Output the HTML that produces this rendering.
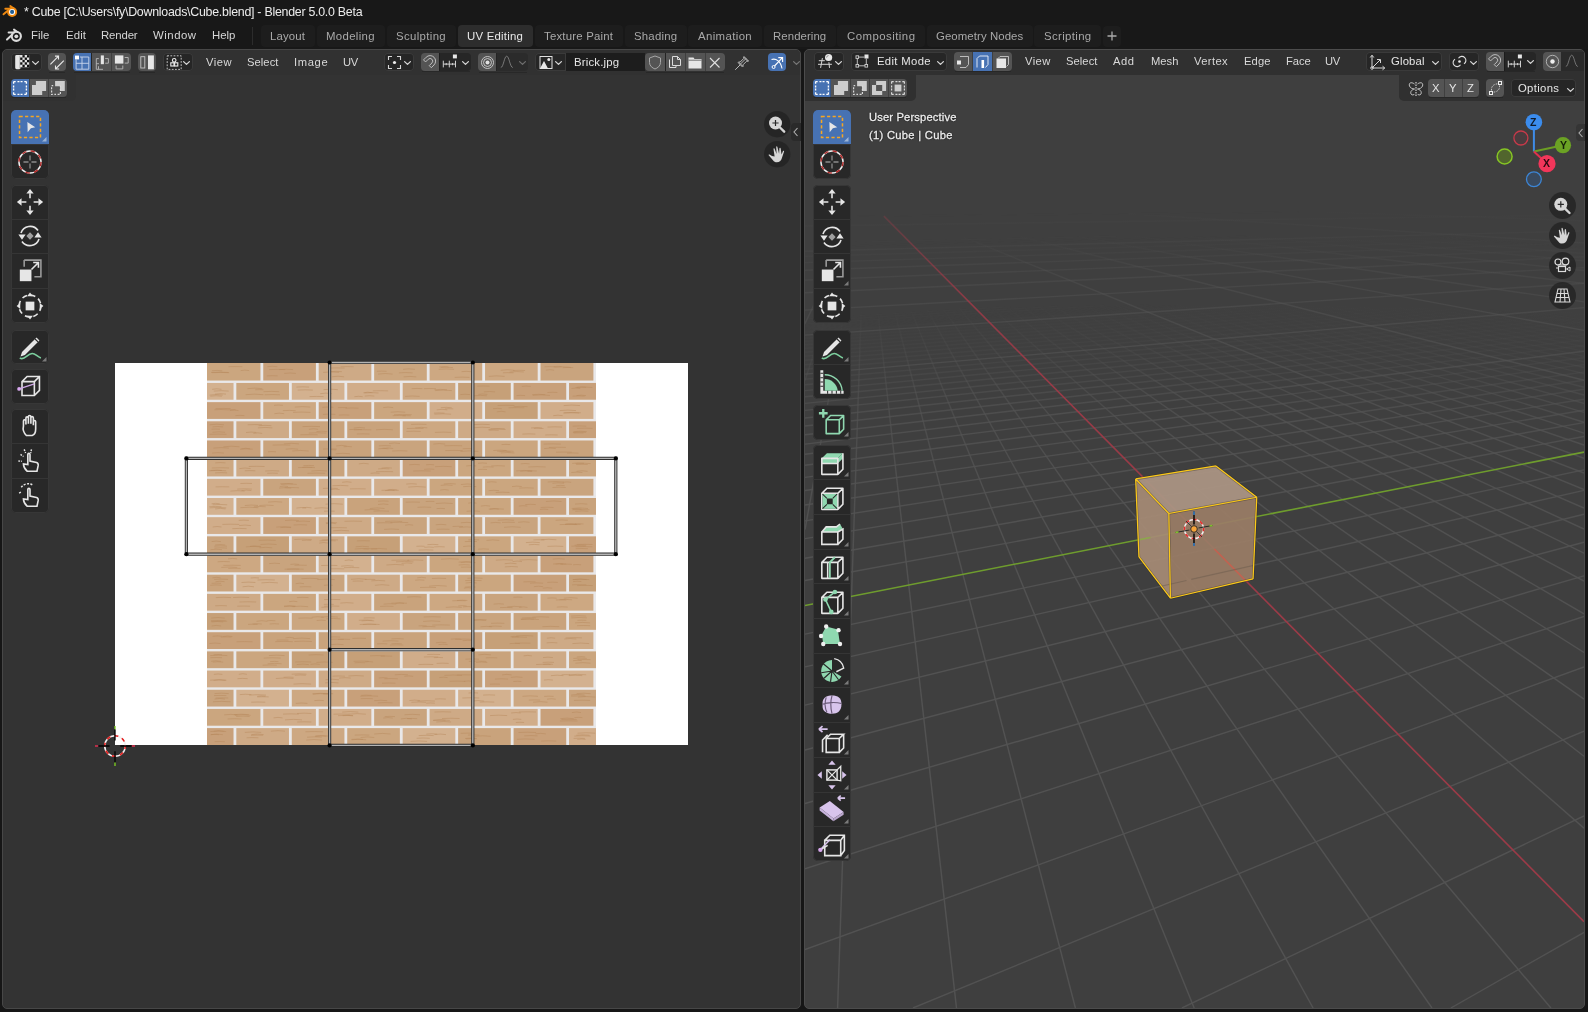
<!DOCTYPE html><html><head><meta charset="utf-8"><style>
html,body{margin:0;padding:0;}
body{width:1588px;height:1012px;overflow:hidden;background:#161616;position:relative;font-family:"Liberation Sans",sans-serif;}
.a{position:absolute;}
.t{position:absolute;white-space:nowrap;line-height:1;will-change:transform;}
svg.a{overflow:visible;}
</style></head><body>
<div class="a" style="left:0px;top:0px;width:1588px;height:49px;background:#181818;"></div><svg class="a" style="left:0px;top:0px;" width="24" height="22" viewBox="0 0 24 22">
      <g stroke="#f08a11" stroke-width="1.9" stroke-linecap="round">
      <path d="M10.3 6 L13.2 8"/><path d="M5.3 8.7 L10.6 8.7"/><path d="M3.5 14.3 L8.6 10"/></g>
      <circle cx="12.1" cy="12" r="5" fill="#f08a11"/>
      <circle cx="12.1" cy="12" r="3.05" fill="#ffffff"/>
      <circle cx="12.1" cy="11.9" r="2.05" fill="#245f94"/>
    </svg><div class="t" style="left:23.80px;top:5.80px;font-size:12.40px;color:#ececec;letter-spacing:-0.265px;">* Cube [C:\Users\fy\Downloads\Cube.blend] - Blender 5.0.0 Beta</div><svg class="a" style="left:0px;top:24px;" width="26" height="22" viewBox="0 0 26 22">
      <g stroke="#dcdcdc" stroke-width="2" stroke-linecap="round">
      <path d="M14 5.6 L17.4 8"/><path d="M8.6 8.6 L14.2 8.6"/><path d="M7 15.6 L12.4 10.6"/></g>
      <circle cx="16.3" cy="12.3" r="4.6" fill="none" stroke="#dcdcdc" stroke-width="2.1"/>
      <circle cx="16.3" cy="12.3" r="1.9" fill="#dcdcdc"/>
    </svg><div class="t" style="left:31.40px;top:30.35px;font-size:11.40px;color:#d6d6d6;letter-spacing:0.033px;">File</div><div class="t" style="left:65.50px;top:30.35px;font-size:11.40px;color:#d6d6d6;letter-spacing:0.114px;">Edit</div><div class="t" style="left:101.30px;top:30.35px;font-size:11.40px;color:#d6d6d6;letter-spacing:-0.148px;">Render</div><div class="t" style="left:153.10px;top:30.35px;font-size:11.40px;color:#d6d6d6;letter-spacing:0.509px;">Window</div><div class="t" style="left:212.10px;top:30.35px;font-size:11.40px;color:#d6d6d6;letter-spacing:-0.011px;">Help</div><div class="a" style="left:252px;top:27px;width:1px;height:18px;background:#2c2c2c;"></div><div class="a" style="left:260.6px;top:25.3px;width:54.6px;height:21.9px;background:#1d1d1d;border-radius:4px;"></div><div class="t" style="left:270.30px;top:30.75px;font-size:11.40px;color:#a9a9a9;letter-spacing:0.163px;">Layout</div><div class="a" style="left:316.7px;top:25.3px;width:68.3px;height:21.9px;background:#1d1d1d;border-radius:4px;"></div><div class="t" style="left:326.40px;top:30.75px;font-size:11.40px;color:#a9a9a9;letter-spacing:0.330px;">Modeling</div><div class="a" style="left:386.6px;top:25.3px;width:69.5px;height:21.9px;background:#1d1d1d;border-radius:4px;"></div><div class="t" style="left:396.30px;top:30.75px;font-size:11.40px;color:#a9a9a9;letter-spacing:0.356px;">Sculpting</div><div class="a" style="left:457.6px;top:25.3px;width:75.5px;height:21.9px;background:#2d2d2d;border-radius:4px;"></div><div class="t" style="left:467.30px;top:30.75px;font-size:11.40px;color:#e8e8e8;letter-spacing:0.224px;">UV Editing</div><div class="a" style="left:534.6px;top:25.3px;width:88.7px;height:21.9px;background:#1d1d1d;border-radius:4px;"></div><div class="t" style="left:544.30px;top:30.75px;font-size:11.40px;color:#a9a9a9;letter-spacing:0.213px;">Texture Paint</div><div class="a" style="left:624.6px;top:25.3px;width:62.7px;height:21.9px;background:#1d1d1d;border-radius:4px;"></div><div class="t" style="left:634.30px;top:30.75px;font-size:11.40px;color:#a9a9a9;letter-spacing:0.209px;">Shading</div><div class="a" style="left:688.3px;top:25.3px;width:73.5px;height:21.9px;background:#1d1d1d;border-radius:4px;"></div><div class="t" style="left:698.00px;top:30.75px;font-size:11.40px;color:#a9a9a9;letter-spacing:0.379px;">Animation</div><div class="a" style="left:763.6px;top:25.3px;width:72.7px;height:21.9px;background:#1d1d1d;border-radius:4px;"></div><div class="t" style="left:773.30px;top:30.75px;font-size:11.40px;color:#a9a9a9;letter-spacing:0.078px;">Rendering</div><div class="a" style="left:837.3px;top:25.3px;width:87.9px;height:21.9px;background:#1d1d1d;border-radius:4px;"></div><div class="t" style="left:847.00px;top:30.75px;font-size:11.40px;color:#a9a9a9;letter-spacing:0.467px;">Compositing</div><div class="a" style="left:926.5px;top:25.3px;width:106.8px;height:21.9px;background:#1d1d1d;border-radius:4px;"></div><div class="t" style="left:936.20px;top:30.75px;font-size:11.40px;color:#a9a9a9;letter-spacing:0.088px;">Geometry Nodes</div><div class="a" style="left:1034.3px;top:25.3px;width:67px;height:21.9px;background:#1d1d1d;border-radius:4px;"></div><div class="t" style="left:1044.00px;top:30.75px;font-size:11.40px;color:#a9a9a9;letter-spacing:0.361px;">Scripting</div><div class="a" style="left:1103px;top:25.5px;width:18px;height:21px;background:#1d1d1d;border-radius:4px;"></div><svg class="a" style="left:1106px;top:30px;" width="12" height="12" viewBox="0 0 12 12"><path d="M6 1.5V10.5M1.5 6H10.5" stroke="#a9a9a9" stroke-width="1.3"/></svg>
<div class="a" style="left:2px;top:49px;width:799px;height:960px;background:#333333;border-radius:5px;box-sizing:border-box;border:1px solid #474747;"></div><div class="a" style="left:3px;top:50px;width:797px;height:25px;background:#313131;border-radius:4px 4px 0 0;"></div><div class="a" style="left:3px;top:75px;width:73px;height:25.5px;background:#313131;border-radius:0 0 5px 0;"></div><div class="a" style="left:11px;top:52.8px;width:30.5px;height:18.7px;background:#262626;border-radius:4px;box-shadow:0 0 0 1px #3a3a3a inset;"></div><svg class="a" style="left:0;top:0" width="60" height="80"><path d="M15.2 56.3 Q15.2 55 16.6 55 H29.2 V67.2 H20.4 V68.2 Q20.4 69.2 19 69.2 H16.6 Q15.2 69.2 15.2 67.8Z" fill="#e6e6e6"/><path d="M19.8 55.6 V68.6" stroke="#9a9a9a" stroke-width="0.6"/><rect x="22.45" y="55.10" width="2.25" height="2.4" fill="#111"/><rect x="26.95" y="55.10" width="2.25" height="2.4" fill="#111"/><rect x="20.20" y="57.50" width="2.25" height="2.4" fill="#111"/><rect x="24.70" y="57.50" width="2.25" height="2.4" fill="#111"/><rect x="22.45" y="59.90" width="2.25" height="2.4" fill="#111"/><rect x="26.95" y="59.90" width="2.25" height="2.4" fill="#111"/><rect x="20.20" y="62.30" width="2.25" height="2.4" fill="#111"/><rect x="24.70" y="62.30" width="2.25" height="2.4" fill="#111"/><rect x="22.45" y="64.70" width="2.25" height="2.4" fill="#111"/><rect x="26.95" y="64.70" width="2.25" height="2.4" fill="#111"/></svg><svg class="a" style="left:31.8px;top:60.8px;" width="7" height="4" viewBox="0 0 7 4"><path d="M0.6 0.6 L3.5 3.4 L6.4 0.6" fill="none" stroke="#d6d6d6" stroke-width="1.3" stroke-linecap="round" stroke-linejoin="round"/></svg><div class="a" style="left:48px;top:52.8px;width:18px;height:18.7px;background:#545454;border-radius:4px 4px 4px 4px;"></div><div class="a" style="left:49px;top:71.5px;width:16px;height:1px;background:rgba(0,0,0,0.18);"></div><svg class="a" style="left:50px;top:54.5px;" width="15" height="15" viewBox="0 0 15 15"><path d="M0.4 9.4 L8.5 1.1 M5 1.1H8.5V4.6 M13.8 5.7 L5.5 14 M5.5 10.4V14H9.1" fill="none" stroke="#e8e8e8" stroke-width="1.1"/></svg><div class="a" style="left:73.2px;top:52.8px;width:18.3px;height:18.7px;background:#4772b3;border-radius:4px 0px 0px 4px;"></div><div class="a" style="left:91.5px;top:52.8px;width:19.8px;height:18.7px;background:#545454;border-radius:0px 0px 0px 0px;"></div><div class="a" style="left:91px;top:52.8px;width:1px;height:18.7px;background:rgba(0,0,0,0.25);"></div><div class="a" style="left:111.3px;top:52.8px;width:19.9px;height:18.7px;background:#545454;border-radius:0px 4px 4px 0px;"></div><div class="a" style="left:110.8px;top:52.8px;width:1px;height:18.7px;background:rgba(0,0,0,0.25);"></div><div class="a" style="left:74.2px;top:71.5px;width:56px;height:1px;background:rgba(0,0,0,0.18);"></div><svg class="a" style="left:75px;top:54.5px;" width="15" height="15" viewBox="0 0 15 15"><rect x="0" y="0.6" width="4" height="3.8" fill="#fff"/><path d="M1.1 4.4V14.2H13.8V2H5 M1.1 8.3H13.8 M7 2V14.2" fill="none" stroke="#c9d6ec" stroke-width="0.9"/></svg><svg class="a" style="left:93px;top:54.5px;" width="17" height="15" viewBox="0 0 17 15"><path d="M5.8 3.6H3.3V14.3H10 M3.3 8.7H6 M12.2 3.6H15.4V8.2H12.2 M5.5 11.2V14.3" fill="none" stroke="#b8b8b8" stroke-width="0.9"/><rect x="7.8" y="0.4" width="3.1" height="8.8" fill="#e6e6e6"/></svg><svg class="a" style="left:113px;top:54.5px;" width="17" height="15" viewBox="0 0 17 15"><rect x="1.9" y="0.4" width="8.5" height="8.2" fill="#e6e6e6"/><path d="M11.7 2.5H15.2V8.1H11.7 M3.1 10.5V13.9H9.8V10.5" fill="none" stroke="#b8b8b8" stroke-width="0.9"/></svg><div class="a" style="left:138px;top:52.8px;width:18.2px;height:18.7px;background:#545454;border-radius:4px 4px 4px 4px;"></div><div class="a" style="left:139px;top:71.5px;width:16.2px;height:1px;background:rgba(0,0,0,0.18);"></div><svg class="a" style="left:139px;top:54.5px;" width="17" height="15" viewBox="0 0 17 15"><rect x="1.8" y="1.7" width="4" height="11.3" fill="none" stroke="#c8c8c8" stroke-width="0.9"/><rect x="9" y="0.4" width="5.9" height="13.9" fill="#e6e6e6"/></svg><div class="a" style="left:162.5px;top:52.8px;width:30.8px;height:18.7px;background:#262626;border-radius:4px;box-shadow:0 0 0 1px #3a3a3a inset;"></div><svg class="a" style="left:166px;top:54.5px;" width="16" height="15" viewBox="0 0 16 15"><rect x="1.2" y="0.8" width="14" height="13.6" fill="none" stroke="#d0d0d0" stroke-width="0.9" stroke-dasharray="1.8 1.4"/><g fill="none" stroke="#eee" stroke-width="1.1"><circle cx="8.2" cy="5.3" r="1.8"/><rect x="4.8" y="7.8" width="3.2" height="3.2"/><rect x="8.6" y="7.8" width="3.2" height="3.2"/></g></svg><svg class="a" style="left:182.8px;top:60.8px;" width="7" height="4" viewBox="0 0 7 4"><path d="M0.6 0.6 L3.5 3.4 L6.4 0.6" fill="none" stroke="#d6d6d6" stroke-width="1.3" stroke-linecap="round" stroke-linejoin="round"/></svg><div class="t" style="left:205.90px;top:56.52px;font-size:11.20px;color:#d9d9d9;letter-spacing:0.507px;">View</div><div class="t" style="left:247.20px;top:56.52px;font-size:11.20px;color:#d9d9d9;letter-spacing:0.062px;">Select</div><div class="t" style="left:294.00px;top:56.52px;font-size:11.20px;color:#d9d9d9;letter-spacing:0.655px;">Image</div><div class="t" style="left:343.30px;top:56.52px;font-size:11.20px;color:#d9d9d9;letter-spacing:-0.230px;">UV</div><div class="a" style="left:384.2px;top:52.8px;width:30.1px;height:18.7px;background:#262626;border-radius:4px;box-shadow:0 0 0 1px #3a3a3a inset;"></div><svg class="a" style="left:387px;top:55px;" width="15" height="15" viewBox="0 0 15 15"><path d="M1.5 5V1.5H5 M10 1.5H13.5V5 M13.5 10V13.5H10 M5 13.5H1.5V10" fill="none" stroke="#d6d6d6" stroke-width="1.1"/><circle cx="7.5" cy="7.5" r="1.6" fill="#eee"/></svg><svg class="a" style="left:403.5px;top:60.8px;" width="7" height="4" viewBox="0 0 7 4"><path d="M0.6 0.6 L3.5 3.4 L6.4 0.6" fill="none" stroke="#d6d6d6" stroke-width="1.3" stroke-linecap="round" stroke-linejoin="round"/></svg><div class="a" style="left:421px;top:52.8px;width:18px;height:18.6px;background:#545454;border-radius:4px 0px 0px 4px;"></div><div class="a" style="left:439px;top:52.8px;width:32px;height:18.6px;background:#262626;border-radius:0px 4px 4px 0px;"></div><div class="a" style="left:438.5px;top:52.8px;width:1px;height:18.6px;background:rgba(0,0,0,0.25);"></div><div class="a" style="left:422px;top:71.4px;width:48px;height:1px;background:rgba(0,0,0,0.18);"></div><svg class="a" style="left:422.2px;top:54.2px;" width="15" height="15" viewBox="0 0 15 15"><path d="M9.30 13.68 L11.99 10.99 A5.5 5.5 0 0 0 4.21 3.21 L1.52 5.90 L3.57 7.95 L6.26 5.26 A2.6 2.6 0 0 1 9.94 8.94 L7.25 11.63 Z" fill="none" stroke="#c4c4c4" stroke-width="0.95" stroke-linejoin="miter"/></svg><svg class="a" style="left:443px;top:54.4px;" width="15" height="15" viewBox="0 0 15 15"><rect x="9.9" y="0.5" width="4" height="3.9" fill="#e8e8e8"/><path d="M0.3 6.7V13.4 M6.3 6.7V13.4 M12.5 6.7V13.4 M0.3 10.1H12.5 M3.2 9V11.2 M9.6 9V11.2" fill="none" stroke="#d0d0d0" stroke-width="1"/></svg><svg class="a" style="left:461.5px;top:60.9px;" width="7" height="4" viewBox="0 0 7 4"><path d="M0.6 0.6 L3.5 3.4 L6.4 0.6" fill="none" stroke="#d6d6d6" stroke-width="1.3" stroke-linecap="round" stroke-linejoin="round"/></svg><div class="a" style="left:477.8px;top:52.8px;width:18.7px;height:18.7px;background:#545454;border-radius:4px 0px 0px 4px;"></div><div class="a" style="left:496.5px;top:52.8px;width:31.6px;height:18.7px;background:#2b2b2b;border-radius:0px 4px 4px 0px;"></div><div class="a" style="left:496px;top:52.8px;width:1px;height:18.7px;background:rgba(0,0,0,0.25);"></div><div class="a" style="left:478.8px;top:71.5px;width:48.3px;height:1px;background:rgba(0,0,0,0.18);"></div><svg class="a" style="left:479.5px;top:54.5px;" width="15" height="15" viewBox="0 0 15 15"><circle cx="7.5" cy="7.5" r="6" fill="none" stroke="#d0d0d0" stroke-width="0.9"/><circle cx="7.5" cy="7.5" r="4" fill="none" stroke="#d0d0d0" stroke-width="0.9"/><circle cx="7.5" cy="7.5" r="2" fill="#e0e0e0"/></svg><svg class="a" style="left:500px;top:55px;" width="14" height="14" viewBox="0 0 14 14"><path d="M0.8 12.5 C3.5 12.5 4.2 1.2 6.7 1.2 C9.2 1.2 10 12.5 12.8 12.5" fill="none" stroke="#808080" stroke-width="0.9"/></svg><svg class="a" style="left:518.5px;top:61px;" width="7" height="4" viewBox="0 0 7 4"><path d="M0.6 0.6 L3.5 3.4 L6.4 0.6" fill="none" stroke="#6e6e6e" stroke-width="1.3" stroke-linecap="round" stroke-linejoin="round"/></svg><div class="a" style="left:535px;top:52.8px;width:31px;height:18.7px;background:#262626;border-radius:4px 0 0 4px;box-shadow:0 0 0 1px #3a3a3a inset;"></div><svg class="a" style="left:538.5px;top:54.5px;" width="14" height="15" viewBox="0 0 14 15"><rect x="1" y="1.5" width="12" height="12" fill="none" stroke="#e0e0e0" stroke-width="1"/><path d="M1 13.5 L5 6 L9 13.5Z" fill="#e8e8e8"/><circle cx="9.8" cy="4.5" r="1.5" fill="#e8e8e8"/></svg><svg class="a" style="left:555px;top:61px;" width="7" height="4" viewBox="0 0 7 4"><path d="M0.6 0.6 L3.5 3.4 L6.4 0.6" fill="none" stroke="#d6d6d6" stroke-width="1.3" stroke-linecap="round" stroke-linejoin="round"/></svg><div class="a" style="left:566px;top:52.8px;width:79.2px;height:18.7px;background:#1d1d1d;"></div><div class="t" style="left:573.50px;top:56.55px;font-size:11.40px;color:#e6e6e6;letter-spacing:0.176px;">Brick.jpg</div><div class="a" style="left:645.2px;top:52.8px;width:20.3px;height:18.7px;background:#545454;border-radius:4px 0px 0px 4px;"></div><div class="a" style="left:665.5px;top:52.8px;width:19.5px;height:18.7px;background:#545454;border-radius:0px 0px 0px 0px;"></div><div class="a" style="left:665px;top:52.8px;width:1px;height:18.7px;background:rgba(0,0,0,0.25);"></div><div class="a" style="left:685px;top:52.8px;width:20.3px;height:18.7px;background:#545454;border-radius:0px 0px 0px 0px;"></div><div class="a" style="left:684.5px;top:52.8px;width:1px;height:18.7px;background:rgba(0,0,0,0.25);"></div><div class="a" style="left:705.3px;top:52.8px;width:19.7px;height:18.7px;background:#545454;border-radius:0px 4px 4px 0px;"></div><div class="a" style="left:704.8px;top:52.8px;width:1px;height:18.7px;background:rgba(0,0,0,0.25);"></div><div class="a" style="left:646.2px;top:71.5px;width:77.8px;height:1px;background:rgba(0,0,0,0.18);"></div><svg class="a" style="left:648px;top:55px;" width="14" height="15" viewBox="0 0 14 15"><path d="M7 1 L12.5 3 V7.5 C12.5 11 9.5 13 7 14 C4.5 13 1.5 11 1.5 7.5 V3 Z" fill="none" stroke="#a8a8a8" stroke-width="1"/></svg><svg class="a" style="left:668px;top:55px;" width="14" height="14" viewBox="0 0 14 14"><path d="M1.5 4.5V12.5H8V10.5 M4.5 1.5H9.5L12.5 4.5V10.5H4.5Z M9.5 1.5V4.5H12.5" fill="none" stroke="#dcdcdc" stroke-width="1"/></svg><svg class="a" style="left:688px;top:55.5px;" width="14" height="13" viewBox="0 0 14 13"><path d="M0.5 1.5H5.5L6.5 3H13.5V12.5H0.5Z" fill="#e6e6e6"/><path d="M0.5 4.2H13.5" stroke="#545454" stroke-width="0.8"/></svg><svg class="a" style="left:709px;top:56.5px;" width="12" height="12" viewBox="0 0 12 12"><path d="M1 1L10.5 10.5M10.5 1L1 10.5" stroke="#e0e0e0" stroke-width="1.1"/></svg><svg class="a" style="left:733.5px;top:54.5px;" width="16" height="16" viewBox="0 0 16 16"><path d="M1.2 14.8 L6 10 M4 7.5 L8.5 12 M6 9.5 L9.5 6 L12 3.5 M9.5 2 L14 6.5" fill="none" stroke="#b8b8b8" stroke-width="1"/><path d="M10 1.5 L14.5 6 L12.5 6.3 L9 9.8 L9 11.5 L4.5 7 L6.2 7 L9.7 3.5 Z" fill="none" stroke="#b8b8b8" stroke-width="1"/></svg><div class="a" style="left:768.1px;top:52.8px;width:18px;height:18.7px;background:#4772b3;border-radius:4px;"></div><svg class="a" style="left:769.5px;top:54.5px;" width="16" height="15" viewBox="0 0 16 15"><path d="M1.5 4.5 C6 3 10.5 6 12 13.5" fill="none" stroke="#fff" stroke-width="1.1"/><path d="M4.5 11 L12 3.2 M8.3 2.6H12.6V6.9" fill="none" stroke="#fff" stroke-width="1.1"/><circle cx="3.6" cy="12" r="1.5" fill="none" stroke="#fff" stroke-width="1"/></svg><svg class="a" style="left:792.5px;top:61px;" width="7" height="4" viewBox="0 0 7 4"><path d="M0.6 0.6 L3.5 3.4 L6.4 0.6" fill="none" stroke="#777" stroke-width="1.3" stroke-linecap="round" stroke-linejoin="round"/></svg><div class="a" style="left:11px;top:78.9px;width:18.2px;height:18px;background:#4772b3;border-radius:4px 0px 0px 4px;"></div><div class="a" style="left:29.2px;top:78.9px;width:18.8px;height:18px;background:#545454;border-radius:0px 0px 0px 0px;"></div><div class="a" style="left:28.7px;top:78.9px;width:1px;height:18px;background:rgba(0,0,0,0.25);"></div><div class="a" style="left:48px;top:78.9px;width:18.8px;height:18px;background:#545454;border-radius:0px 4px 4px 0px;"></div><div class="a" style="left:47.5px;top:78.9px;width:1px;height:18px;background:rgba(0,0,0,0.25);"></div><div class="a" style="left:12px;top:96.9px;width:53.8px;height:1px;background:rgba(0,0,0,0.18);"></div><svg class="a" style="left:12px;top:80px;" width="17" height="17" viewBox="0 0 17 17"><path d="M1.6 1.6H14.4V14.4H1.6Z" fill="none" stroke="#fff" stroke-width="1.35" stroke-dasharray="2.1 1.75 2 1.1 2 1.75 2.1 0"/></svg><svg class="a" style="left:31px;top:80px;" width="17" height="17" viewBox="0 0 17 17"><path d="M1 5H4.9V0.9H15.1V11H11.2V15.1H1Z" fill="#cdcdcd"/></svg><svg class="a" style="left:50px;top:80px;" width="17" height="17" viewBox="0 0 17 17"><path d="M5.1 0.9H14.8V11H10V6.2H5.1Z" fill="#cdcdcd"/><path d="M1.6 5.6H10.4V14.4H1.6Z" fill="none" stroke="#d8d8d8" stroke-width="1.2" stroke-dasharray="1.6 1.6 0 5.6 1.6 1.6 1.6 1.6 2 1.2 2 1.6 1.6 1.6 1.6 1.6 2 1.2 2 1.6"/></svg><div class="a" style="left:11px;top:110px;width:38px;height:69.2px;background:#282828;border-radius:5px;box-shadow:0 0 0 1px #373737 inset;"></div><div class="a" style="left:11px;top:110px;width:38px;height:34.6px;background:#4772b3;border-radius:5px 5px 0 0;"></div><svg class="a" style="left:14px;top:111.3px;" width="32" height="32" viewBox="0 0 22 22"><rect x="3.8" y="3.8" width="14.4" height="14.4" fill="none" stroke="#f5a623" stroke-width="1.05" stroke-dasharray="2.2 1.6"/><path d="M9.2 7.6 L14.6 11.2 L11.6 11.9 L9.4 14.6 Z" fill="#e6e6e6"/></svg><svg class="a" style="left:41.5px;top:137.1px;" width="4.5" height="4.5" viewBox="0 0 4.5 4.5"><path d="M4.5 0V4.5H0Z" fill="#9db4d6"/></svg><div class="a" style="left:11px;top:144.1px;width:38px;height:1px;background:#353535;"></div><svg class="a" style="left:14px;top:145.9px;" width="32" height="32" viewBox="0 0 22 22"><circle cx="11" cy="11" r="7.6" fill="none" stroke="#f0f0f0" stroke-width="1"/><circle cx="11" cy="11" r="7.6" fill="none" stroke="#b02a2a" stroke-width="1" stroke-dasharray="3 3"/><path d="M11 6.5V10 M11 12V15.5 M6.5 11H10 M12 11H15.5" stroke="#8a8a8a" stroke-width="0.9"/></svg><div class="a" style="left:11px;top:184.5px;width:38px;height:138.4px;background:#282828;border-radius:5px;box-shadow:0 0 0 1px #373737 inset;"></div><svg class="a" style="left:14px;top:185.8px;" width="32" height="32" viewBox="0 0 22 22"><g fill="#e6e6e6"><path d="M11 2 L13.5 5.2 H8.5Z"/><path d="M11 20 L13.5 16.8 H8.5Z"/><path d="M2 11 L5.2 8.5 V13.5Z"/><path d="M20 11 L16.8 8.5 V13.5Z"/></g><path d="M11 5V8.5 M11 13.5V17 M5 11H8.5 M13.5 11H17" stroke="#e6e6e6" stroke-width="1.1"/></svg><div class="a" style="left:11px;top:218.6px;width:38px;height:1px;background:#353535;"></div><svg class="a" style="left:14px;top:220.4px;" width="32" height="32" viewBox="0 0 22 22"><path d="M4.8 9 A6.6 6.6 0 0 1 16.5 7.2 M17.2 13 A6.6 6.6 0 0 1 5.5 14.8" fill="none" stroke="#e6e6e6" stroke-width="1.1"/><path d="M3 10 H8 L5.5 13.5Z M14 12 H19 L16.5 8.5Z" fill="#e6e6e6"/><path d="M11 8.5 L13.5 11 L11 13.5 L8.5 11Z" fill="#a0a0a0"/></svg><div class="a" style="left:11px;top:253.2px;width:38px;height:1px;background:#353535;"></div><svg class="a" style="left:14px;top:255px;" width="32" height="32" viewBox="0 0 22 22"><path d="M7 3.5H18.5V15H14" fill="none" stroke="#9a9a9a" stroke-width="1.1"/><path d="M7 3.5 V8" stroke="#9a9a9a" stroke-width="1.1"/><rect x="4" y="10" width="8" height="8" fill="#e6e6e6"/><path d="M12 10 L16.5 5.5 M13.2 5.2H16.8V8.8" fill="none" stroke="#e6e6e6" stroke-width="1.1"/></svg><div class="a" style="left:11px;top:287.8px;width:38px;height:1px;background:#353535;"></div><svg class="a" style="left:14px;top:289.6px;" width="32" height="32" viewBox="0 0 22 22"><circle cx="11" cy="11" r="7.5" fill="none" stroke="#e6e6e6" stroke-width="1.1" stroke-dasharray="3.5 2.4"/><rect x="8" y="8" width="6" height="6" fill="#e6e6e6"/><g fill="#e6e6e6"><path d="M11 1.8 L13 4.3 H9Z"/><path d="M11 20.2 L13 17.7 H9Z"/><path d="M1.8 11 L4.3 9 V13Z"/><path d="M20.2 11 L17.7 9 V13Z"/></g></svg><div class="a" style="left:11px;top:329.5px;width:38px;height:34.6px;background:#282828;border-radius:5px;box-shadow:0 0 0 1px #373737 inset;"></div><svg class="a" style="left:14px;top:330.8px;" width="32" height="32" viewBox="0 0 22 22"><path d="M5.5 14.5 L15.5 4.5 L17.5 6.5 L7.5 16.5 L4.5 17.5Z" fill="#e6e6e6"/><path d="M14.5 5.5L16.5 7.5" stroke="#282828" stroke-width="0.8"/><path d="M4 18.5 C7 21 9 15.5 12.5 15.5 C15 15.5 15.5 17.5 18.5 18.5" fill="none" stroke="#7ccf9e" stroke-width="1.1"/></svg><svg class="a" style="left:41.5px;top:356.6px;" width="4.5" height="4.5" viewBox="0 0 4.5 4.5"><path d="M4.5 0V4.5H0Z" fill="#7a7a7a"/></svg><div class="a" style="left:11px;top:369px;width:38px;height:34.6px;background:#282828;border-radius:5px;box-shadow:0 0 0 1px #373737 inset;"></div><svg class="a" style="left:14px;top:370.3px;" width="32" height="32" viewBox="0 0 22 22"><path d="M5.5 8 L9 4.5 H17.5 V14 L14 17.5 H5.5Z M5.5 8 H14 V17.5 M14 8 L17.5 4.5" fill="none" stroke="#e6e6e6" stroke-width="1.1"/><path d="M3.5 13 L14 9.5" stroke="#cfa8e8" stroke-width="1"/><circle cx="3.5" cy="13" r="1.3" fill="#d9a8f0"/></svg><div class="a" style="left:11px;top:409px;width:38px;height:103.8px;background:#282828;border-radius:5px;box-shadow:0 0 0 1px #373737 inset;"></div><svg class="a" style="left:14px;top:410.3px;" width="32" height="32" viewBox="0 0 22 22"><path d="M7 17.5 C5 15.5 4.5 13 5 11 V7.5 C5 6.5 6.5 6.5 6.7 7.5 V10 V5.5 C6.7 4.5 8.3 4.5 8.4 5.5 V9.5 V4.5 C8.4 3.5 10 3.5 10.1 4.5 V9.5 V5.3 C10.1 4.3 11.7 4.3 11.8 5.3 V10.5 V8 C11.8 7 13.4 7 13.4 8 V13 C13.4 15.5 12.5 17 11 17.5Z" fill="none" stroke="#e6e6e6" stroke-width="1.1" transform="translate(1.5,0)"/></svg><div class="a" style="left:11px;top:443.1px;width:38px;height:1px;background:#353535;"></div><svg class="a" style="left:14px;top:444.9px;" width="32" height="32" viewBox="0 0 22 22"><path d="M9 18 C7.5 16.5 6.5 14.5 6.5 13 L9.5 13.5 V6.5 C9.5 5.5 11 5.5 11 6.5 V11 L15.5 12 C16.5 12.3 16.8 13 16.6 14.2 L15.8 18Z" fill="none" stroke="#e6e6e6" stroke-width="1.1"/><path d="M4.5 6.5 L6.5 8 M7 3 L8 5.5 M12 3 L11.5 5.5 M3 11 L5.5 11.2" stroke="#e6e6e6" stroke-width="1" stroke-dasharray="1.2 0.8"/></svg><div class="a" style="left:11px;top:477.7px;width:38px;height:1px;background:#353535;"></div><svg class="a" style="left:14px;top:479.5px;" width="32" height="32" viewBox="0 0 22 22"><path d="M9 18 C7.5 16.5 6.5 14.5 6.5 13 L9.5 13.5 V6.5 C9.5 5.5 11 5.5 11 6.5 V11 L15.5 12 C16.5 12.3 16.8 13 16.6 14.2 L15.8 18Z" fill="none" stroke="#e6e6e6" stroke-width="1.1"/><path d="M5 5 A6 6 0 0 1 13 3.5 M3.5 9 L5.5 8" fill="none" stroke="#e6e6e6" stroke-width="1" stroke-dasharray="1.4 0.9"/></svg><div class="a" style="left:115px;top:363px;width:573px;height:382px;background:#ffffff;"></div><svg class="a" style="left:207px;top:363px" width="389" height="382"><rect width="389" height="382" fill="#e9e8e9"/><rect x="0.00" y="0.00" width="53.45" height="17.55" fill="#cba67f"/><path d="M33.7 7.6 q4.2 -1.0 8.5 0" stroke="#b5875a" stroke-width="0.75" fill="none" opacity="0.6"/><path d="M5.1 9.7 q8.5 -0.5 17.1 0" stroke="#b5875a" stroke-width="0.75" fill="none" opacity="0.6"/><path d="M4.9 7.8 q5.2 -0.8 10.4 0" stroke="#b5875a" stroke-width="0.75" fill="none" opacity="0.6"/><path d="M4.0 9.5 q8.7 -0.9 17.5 0" stroke="#b5875a" stroke-width="0.75" fill="none" opacity="0.6"/><path d="M21.5 3.7 q6.9 -0.3 13.9 0" stroke="#b5875a" stroke-width="0.75" fill="none" opacity="0.6"/><rect x="56.25" y="0.00" width="52.65" height="17.55" fill="#c8a07a"/><path d="M59.8 12.9 q5.4 -0.4 10.9 0" stroke="#b5875a" stroke-width="0.75" fill="none" opacity="0.6"/><path d="M62.1 6.6 q8.1 -0.5 16.2 0" stroke="#b5875a" stroke-width="0.75" fill="none" opacity="0.6"/><path d="M77.2 10.4 q5.9 -0.8 11.7 0" stroke="#b5875a" stroke-width="0.75" fill="none" opacity="0.6"/><path d="M60.3 3.7 q5.0 -0.9 10.1 0" stroke="#b5875a" stroke-width="0.75" fill="none" opacity="0.6"/><path d="M72.2 6.6 q6.9 -0.7 13.9 0" stroke="#b5875a" stroke-width="0.75" fill="none" opacity="0.6"/><rect x="111.70" y="0.00" width="52.65" height="17.55" fill="#ceaa86"/><path d="M121.8 5.1 q7.9 -0.4 15.8 0" stroke="#b5875a" stroke-width="0.75" fill="none" opacity="0.6"/><path d="M123.5 8.7 q5.7 -0.7 11.4 0" stroke="#b5875a" stroke-width="0.75" fill="none" opacity="0.6"/><path d="M133.6 3.8 q6.6 -0.4 13.1 0" stroke="#b5875a" stroke-width="0.75" fill="none" opacity="0.6"/><path d="M124.9 13.8 q6.1 -1.2 12.2 0" stroke="#b5875a" stroke-width="0.75" fill="none" opacity="0.6"/><path d="M116.2 9.4 q7.9 -1.0 15.9 0" stroke="#b5875a" stroke-width="0.75" fill="none" opacity="0.6"/><rect x="167.15" y="0.00" width="52.65" height="17.55" fill="#cba67f"/><path d="M191.9 9.9 q6.9 -0.7 13.8 0" stroke="#b5875a" stroke-width="0.75" fill="none" opacity="0.6"/><path d="M196.6 13.9 q6.4 -0.9 12.7 0" stroke="#b5875a" stroke-width="0.75" fill="none" opacity="0.6"/><path d="M171.1 11.1 q7.2 -1.2 14.5 0" stroke="#b5875a" stroke-width="0.75" fill="none" opacity="0.6"/><path d="M196.0 6.3 q5.9 -0.9 11.9 0" stroke="#b5875a" stroke-width="0.75" fill="none" opacity="0.6"/><path d="M169.9 8.3 q4.8 -0.4 9.7 0" stroke="#b5875a" stroke-width="0.75" fill="none" opacity="0.6"/><rect x="222.60" y="0.00" width="52.65" height="17.55" fill="#cda882"/><path d="M231.7 6.3 q7.7 -0.7 15.4 0" stroke="#b5875a" stroke-width="0.75" fill="none" opacity="0.6"/><path d="M254.5 8.7 q4.8 -0.7 9.7 0" stroke="#b5875a" stroke-width="0.75" fill="none" opacity="0.6"/><path d="M233.7 4.6 q6.2 -0.8 12.3 0" stroke="#b5875a" stroke-width="0.75" fill="none" opacity="0.6"/><path d="M247.7 14.4 q7.4 -0.6 14.8 0" stroke="#b5875a" stroke-width="0.75" fill="none" opacity="0.6"/><path d="M232.1 4.0 q4.8 -0.9 9.5 0" stroke="#b5875a" stroke-width="0.75" fill="none" opacity="0.6"/><rect x="278.05" y="0.00" width="52.65" height="17.55" fill="#cda882"/><path d="M295.9 9.8 q5.3 -0.3 10.6 0" stroke="#b5875a" stroke-width="0.75" fill="none" opacity="0.6"/><path d="M293.7 7.3 q6.8 -1.2 13.7 0" stroke="#b5875a" stroke-width="0.75" fill="none" opacity="0.6"/><path d="M302.6 9.0 q7.1 -0.9 14.2 0" stroke="#b5875a" stroke-width="0.75" fill="none" opacity="0.6"/><path d="M281.8 13.4 q7.9 -1.1 15.8 0" stroke="#b5875a" stroke-width="0.75" fill="none" opacity="0.6"/><path d="M306.1 7.5 q6.0 -0.4 12.0 0" stroke="#b5875a" stroke-width="0.75" fill="none" opacity="0.6"/><rect x="333.50" y="0.00" width="52.90" height="17.55" fill="#c9a47e"/><path d="M337.5 3.8 q5.0 -0.4 10.1 0" stroke="#b5875a" stroke-width="0.75" fill="none" opacity="0.6"/><path d="M346.7 3.6 q4.0 -0.4 8.0 0" stroke="#b5875a" stroke-width="0.75" fill="none" opacity="0.6"/><path d="M338.8 7.2 q4.1 -1.1 8.3 0" stroke="#b5875a" stroke-width="0.75" fill="none" opacity="0.6"/><path d="M355.7 4.7 q5.3 -0.6 10.5 0" stroke="#b5875a" stroke-width="0.75" fill="none" opacity="0.6"/><path d="M347.5 4.4 q8.2 -1.2 16.5 0" stroke="#b5875a" stroke-width="0.75" fill="none" opacity="0.6"/><rect x="0.00" y="19.95" width="26.52" height="16.78" fill="#d3b18f"/><path d="M5.1 26.3 q4.7 -1.0 9.4 0" stroke="#b5875a" stroke-width="0.75" fill="none" opacity="0.6"/><path d="M6.8 28.1 q7.5 -0.8 14.9 0" stroke="#b5875a" stroke-width="0.75" fill="none" opacity="0.6"/><path d="M3.3 33.2 q5.8 -0.9 11.6 0" stroke="#b5875a" stroke-width="0.75" fill="none" opacity="0.6"/><path d="M8.0 31.1 q5.5 -0.9 11.0 0" stroke="#b5875a" stroke-width="0.75" fill="none" opacity="0.6"/><path d="M2.6 32.1 q6.6 -1.1 13.2 0" stroke="#b5875a" stroke-width="0.75" fill="none" opacity="0.6"/><rect x="29.32" y="19.95" width="52.65" height="16.78" fill="#cba67f"/><path d="M56.5 28.7 q7.9 -0.6 15.8 0" stroke="#b5875a" stroke-width="0.75" fill="none" opacity="0.6"/><path d="M38.6 31.7 q8.9 -1.1 17.8 0" stroke="#b5875a" stroke-width="0.75" fill="none" opacity="0.6"/><path d="M57.6 31.8 q7.7 -0.5 15.4 0" stroke="#b5875a" stroke-width="0.75" fill="none" opacity="0.6"/><path d="M48.2 26.8 q4.1 -0.3 8.3 0" stroke="#b5875a" stroke-width="0.75" fill="none" opacity="0.6"/><path d="M40.4 25.7 q7.5 -1.2 14.9 0" stroke="#b5875a" stroke-width="0.75" fill="none" opacity="0.6"/><rect x="84.78" y="19.95" width="52.65" height="16.78" fill="#d3b18f"/><path d="M113.2 30.7 q5.7 -1.2 11.5 0" stroke="#b5875a" stroke-width="0.75" fill="none" opacity="0.6"/><path d="M89.4 24.1 q6.4 -0.6 12.7 0" stroke="#b5875a" stroke-width="0.75" fill="none" opacity="0.6"/><path d="M102.5 33.6 q7.1 -0.3 14.1 0" stroke="#b5875a" stroke-width="0.75" fill="none" opacity="0.6"/><path d="M116.5 26.7 q7.2 -1.1 14.4 0" stroke="#b5875a" stroke-width="0.75" fill="none" opacity="0.6"/><path d="M90.7 27.1 q7.6 -0.5 15.1 0" stroke="#b5875a" stroke-width="0.75" fill="none" opacity="0.6"/><rect x="140.22" y="19.95" width="52.65" height="16.78" fill="#d1ad8a"/><path d="M156.4 29.8 q4.4 -1.2 8.9 0" stroke="#b5875a" stroke-width="0.75" fill="none" opacity="0.6"/><path d="M165.8 27.9 q7.7 -0.4 15.4 0" stroke="#b5875a" stroke-width="0.75" fill="none" opacity="0.6"/><path d="M147.4 33.7 q4.1 -0.8 8.3 0" stroke="#b5875a" stroke-width="0.75" fill="none" opacity="0.6"/><path d="M157.4 30.0 q7.1 -0.8 14.1 0" stroke="#b5875a" stroke-width="0.75" fill="none" opacity="0.6"/><path d="M157.7 33.1 q4.8 -0.8 9.6 0" stroke="#b5875a" stroke-width="0.75" fill="none" opacity="0.6"/><rect x="195.68" y="19.95" width="52.65" height="16.78" fill="#cda882"/><path d="M198.1 33.4 q7.2 -0.8 14.5 0" stroke="#b5875a" stroke-width="0.75" fill="none" opacity="0.6"/><path d="M228.2 27.6 q8.4 -1.0 16.7 0" stroke="#b5875a" stroke-width="0.75" fill="none" opacity="0.6"/><path d="M204.6 25.7 q5.5 -0.5 10.9 0" stroke="#b5875a" stroke-width="0.75" fill="none" opacity="0.6"/><path d="M216.8 25.7 q6.1 -0.4 12.2 0" stroke="#b5875a" stroke-width="0.75" fill="none" opacity="0.6"/><path d="M227.4 26.8 q6.3 -0.8 12.6 0" stroke="#b5875a" stroke-width="0.75" fill="none" opacity="0.6"/><rect x="251.12" y="19.95" width="52.65" height="16.78" fill="#c6a078"/><path d="M266.9 32.8 q6.5 -0.8 13.0 0" stroke="#b5875a" stroke-width="0.75" fill="none" opacity="0.6"/><path d="M270.2 23.2 q6.2 -0.5 12.4 0" stroke="#b5875a" stroke-width="0.75" fill="none" opacity="0.6"/><path d="M253.3 31.6 q4.9 -0.7 9.7 0" stroke="#b5875a" stroke-width="0.75" fill="none" opacity="0.6"/><path d="M276.8 28.9 q5.6 -0.8 11.3 0" stroke="#b5875a" stroke-width="0.75" fill="none" opacity="0.6"/><path d="M271.3 31.4 q4.5 -0.8 9.1 0" stroke="#b5875a" stroke-width="0.75" fill="none" opacity="0.6"/><rect x="306.58" y="19.95" width="52.65" height="16.78" fill="#c8a07a"/><path d="M314.8 23.4 q4.5 -0.7 9.0 0" stroke="#b5875a" stroke-width="0.75" fill="none" opacity="0.6"/><path d="M309.5 32.6 q4.3 -0.6 8.6 0" stroke="#b5875a" stroke-width="0.75" fill="none" opacity="0.6"/><path d="M340.4 29.5 q5.0 -0.5 10.0 0" stroke="#b5875a" stroke-width="0.75" fill="none" opacity="0.6"/><path d="M325.2 31.6 q6.5 -0.5 13.1 0" stroke="#b5875a" stroke-width="0.75" fill="none" opacity="0.6"/><path d="M325.7 32.4 q8.6 -1.1 17.3 0" stroke="#b5875a" stroke-width="0.75" fill="none" opacity="0.6"/><rect x="362.02" y="19.95" width="26.98" height="16.78" fill="#c8a07a"/><path d="M369.9 24.4 q4.6 -0.7 9.2 0" stroke="#b5875a" stroke-width="0.75" fill="none" opacity="0.6"/><path d="M364.5 25.5 q4.4 -0.9 8.7 0" stroke="#b5875a" stroke-width="0.75" fill="none" opacity="0.6"/><path d="M369.5 32.6 q4.8 -0.9 9.5 0" stroke="#b5875a" stroke-width="0.75" fill="none" opacity="0.6"/><path d="M368.6 24.5 q8.4 -1.2 16.8 0" stroke="#b5875a" stroke-width="0.75" fill="none" opacity="0.6"/><path d="M365.6 33.2 q6.0 -0.7 12.0 0" stroke="#b5875a" stroke-width="0.75" fill="none" opacity="0.6"/><rect x="0.00" y="39.13" width="53.45" height="16.78" fill="#c8a07a"/><path d="M7.4 46.8 q6.6 -0.6 13.2 0" stroke="#b5875a" stroke-width="0.75" fill="none" opacity="0.6"/><path d="M8.5 45.6 q7.6 -0.3 15.2 0" stroke="#b5875a" stroke-width="0.75" fill="none" opacity="0.6"/><path d="M20.5 46.9 q4.1 -0.6 8.2 0" stroke="#b5875a" stroke-width="0.75" fill="none" opacity="0.6"/><path d="M22.9 47.6 q4.3 -1.2 8.6 0" stroke="#b5875a" stroke-width="0.75" fill="none" opacity="0.6"/><path d="M28.4 52.6 q4.5 -0.5 9.0 0" stroke="#b5875a" stroke-width="0.75" fill="none" opacity="0.6"/><rect x="56.25" y="39.13" width="52.65" height="16.78" fill="#cda882"/><path d="M87.8 44.1 q7.8 -1.0 15.6 0" stroke="#b5875a" stroke-width="0.75" fill="none" opacity="0.6"/><path d="M86.0 49.4 q8.7 -0.7 17.5 0" stroke="#b5875a" stroke-width="0.75" fill="none" opacity="0.6"/><path d="M75.8 47.7 q6.5 -0.6 12.9 0" stroke="#b5875a" stroke-width="0.75" fill="none" opacity="0.6"/><path d="M67.4 50.7 q4.9 -1.1 9.8 0" stroke="#b5875a" stroke-width="0.75" fill="none" opacity="0.6"/><path d="M67.0 42.3 q4.4 -0.5 8.9 0" stroke="#b5875a" stroke-width="0.75" fill="none" opacity="0.6"/><rect x="111.70" y="39.13" width="52.65" height="16.78" fill="#c8a07a"/><path d="M115.9 51.4 q6.3 -0.6 12.5 0" stroke="#b5875a" stroke-width="0.75" fill="none" opacity="0.6"/><path d="M131.8 52.1 q5.3 -0.4 10.7 0" stroke="#b5875a" stroke-width="0.75" fill="none" opacity="0.6"/><path d="M130.9 44.7 q4.5 -0.4 9.1 0" stroke="#b5875a" stroke-width="0.75" fill="none" opacity="0.6"/><path d="M115.3 44.3 q5.6 -0.6 11.1 0" stroke="#b5875a" stroke-width="0.75" fill="none" opacity="0.6"/><path d="M138.5 45.2 q6.5 -0.5 13.0 0" stroke="#b5875a" stroke-width="0.75" fill="none" opacity="0.6"/><rect x="167.15" y="39.13" width="52.65" height="16.78" fill="#cba67f"/><path d="M195.4 52.8 q4.2 -0.3 8.4 0" stroke="#b5875a" stroke-width="0.75" fill="none" opacity="0.6"/><path d="M185.7 52.7 q6.6 -0.5 13.1 0" stroke="#b5875a" stroke-width="0.75" fill="none" opacity="0.6"/><path d="M183.7 49.2 q7.3 -0.9 14.5 0" stroke="#b5875a" stroke-width="0.75" fill="none" opacity="0.6"/><path d="M187.0 51.7 q8.9 -0.6 17.7 0" stroke="#b5875a" stroke-width="0.75" fill="none" opacity="0.6"/><path d="M176.2 44.6 q5.0 -1.1 10.0 0" stroke="#b5875a" stroke-width="0.75" fill="none" opacity="0.6"/><rect x="222.60" y="39.13" width="52.65" height="16.78" fill="#d1ad8a"/><path d="M237.8 45.9 q4.3 -0.4 8.5 0" stroke="#b5875a" stroke-width="0.75" fill="none" opacity="0.6"/><path d="M226.9 50.1 q5.3 -0.4 10.6 0" stroke="#b5875a" stroke-width="0.75" fill="none" opacity="0.6"/><path d="M227.4 51.2 q8.4 -0.9 16.7 0" stroke="#b5875a" stroke-width="0.75" fill="none" opacity="0.6"/><path d="M233.8 44.7 q5.5 -0.7 10.9 0" stroke="#b5875a" stroke-width="0.75" fill="none" opacity="0.6"/><path d="M229.7 46.9 q5.3 -1.2 10.6 0" stroke="#b5875a" stroke-width="0.75" fill="none" opacity="0.6"/><rect x="278.05" y="39.13" width="52.65" height="16.78" fill="#c6a078"/><path d="M290.6 42.5 q8.4 -0.5 16.8 0" stroke="#b5875a" stroke-width="0.75" fill="none" opacity="0.6"/><path d="M286.0 45.7 q4.4 -0.6 8.8 0" stroke="#b5875a" stroke-width="0.75" fill="none" opacity="0.6"/><path d="M301.5 44.8 q7.9 -0.4 15.8 0" stroke="#b5875a" stroke-width="0.75" fill="none" opacity="0.6"/><path d="M306.7 43.7 q6.9 -0.7 13.9 0" stroke="#b5875a" stroke-width="0.75" fill="none" opacity="0.6"/><path d="M289.8 48.9 q4.4 -1.2 8.8 0" stroke="#b5875a" stroke-width="0.75" fill="none" opacity="0.6"/><rect x="333.50" y="39.13" width="52.90" height="16.78" fill="#d1ad8a"/><path d="M357.1 49.8 q8.4 -0.7 16.8 0" stroke="#b5875a" stroke-width="0.75" fill="none" opacity="0.6"/><path d="M346.2 52.7 q4.7 -1.0 9.5 0" stroke="#b5875a" stroke-width="0.75" fill="none" opacity="0.6"/><path d="M356.7 42.6 q8.2 -1.1 16.4 0" stroke="#b5875a" stroke-width="0.75" fill="none" opacity="0.6"/><path d="M356.1 50.0 q8.1 -0.4 16.1 0" stroke="#b5875a" stroke-width="0.75" fill="none" opacity="0.6"/><path d="M352.7 47.6 q8.2 -1.0 16.3 0" stroke="#b5875a" stroke-width="0.75" fill="none" opacity="0.6"/><rect x="0.00" y="58.30" width="26.52" height="16.77" fill="#c8a07a"/><path d="M2.6 61.8 q7.2 -1.2 14.4 0" stroke="#b5875a" stroke-width="0.75" fill="none" opacity="0.6"/><path d="M4.5 66.2 q4.3 -0.3 8.5 0" stroke="#b5875a" stroke-width="0.75" fill="none" opacity="0.6"/><path d="M5.5 63.9 q5.3 -0.7 10.6 0" stroke="#b5875a" stroke-width="0.75" fill="none" opacity="0.6"/><path d="M2.5 71.3 q8.5 -0.4 17.0 0" stroke="#b5875a" stroke-width="0.75" fill="none" opacity="0.6"/><path d="M5.4 69.3 q6.4 -1.0 12.7 0" stroke="#b5875a" stroke-width="0.75" fill="none" opacity="0.6"/><rect x="29.32" y="58.30" width="52.65" height="16.77" fill="#ceaa86"/><path d="M39.0 69.5 q5.2 -0.9 10.3 0" stroke="#b5875a" stroke-width="0.75" fill="none" opacity="0.6"/><path d="M46.4 70.4 q4.4 -1.1 8.8 0" stroke="#b5875a" stroke-width="0.75" fill="none" opacity="0.6"/><path d="M40.7 61.8 q7.2 -0.5 14.3 0" stroke="#b5875a" stroke-width="0.75" fill="none" opacity="0.6"/><path d="M50.9 64.9 q7.3 -0.9 14.5 0" stroke="#b5875a" stroke-width="0.75" fill="none" opacity="0.6"/><path d="M51.6 62.7 q6.4 -0.7 12.8 0" stroke="#b5875a" stroke-width="0.75" fill="none" opacity="0.6"/><rect x="84.78" y="58.30" width="52.65" height="16.77" fill="#c9a37c"/><path d="M109.4 68.6 q5.5 -0.8 10.9 0" stroke="#b5875a" stroke-width="0.75" fill="none" opacity="0.6"/><path d="M101.9 66.3 q4.6 -1.1 9.2 0" stroke="#b5875a" stroke-width="0.75" fill="none" opacity="0.6"/><path d="M93.3 71.8 q8.7 -0.3 17.4 0" stroke="#b5875a" stroke-width="0.75" fill="none" opacity="0.6"/><path d="M101.8 70.1 q8.8 -0.7 17.7 0" stroke="#b5875a" stroke-width="0.75" fill="none" opacity="0.6"/><path d="M95.5 63.6 q8.7 -0.5 17.5 0" stroke="#b5875a" stroke-width="0.75" fill="none" opacity="0.6"/><rect x="140.22" y="58.30" width="52.65" height="16.77" fill="#c9a37c"/><path d="M146.9 66.9 q8.8 -0.4 17.5 0" stroke="#b5875a" stroke-width="0.75" fill="none" opacity="0.6"/><path d="M169.0 66.8 q8.4 -0.9 16.9 0" stroke="#b5875a" stroke-width="0.75" fill="none" opacity="0.6"/><path d="M149.8 71.0 q6.4 -0.3 12.9 0" stroke="#b5875a" stroke-width="0.75" fill="none" opacity="0.6"/><path d="M142.3 66.6 q6.3 -0.6 12.5 0" stroke="#b5875a" stroke-width="0.75" fill="none" opacity="0.6"/><path d="M146.8 65.0 q5.6 -1.1 11.2 0" stroke="#b5875a" stroke-width="0.75" fill="none" opacity="0.6"/><rect x="195.68" y="58.30" width="52.65" height="16.77" fill="#cda882"/><path d="M208.3 64.9 q6.0 -1.1 12.0 0" stroke="#b5875a" stroke-width="0.75" fill="none" opacity="0.6"/><path d="M204.1 61.4 q7.7 -0.5 15.4 0" stroke="#b5875a" stroke-width="0.75" fill="none" opacity="0.6"/><path d="M199.8 65.5 q8.3 -0.4 16.7 0" stroke="#b5875a" stroke-width="0.75" fill="none" opacity="0.6"/><path d="M227.9 69.4 q8.3 -0.6 16.5 0" stroke="#b5875a" stroke-width="0.75" fill="none" opacity="0.6"/><path d="M199.4 68.4 q7.2 -0.4 14.3 0" stroke="#b5875a" stroke-width="0.75" fill="none" opacity="0.6"/><rect x="251.12" y="58.30" width="52.65" height="16.77" fill="#ceaa86"/><path d="M267.4 64.7 q7.9 -1.0 15.7 0" stroke="#b5875a" stroke-width="0.75" fill="none" opacity="0.6"/><path d="M267.1 61.6 q7.8 -0.7 15.6 0" stroke="#b5875a" stroke-width="0.75" fill="none" opacity="0.6"/><path d="M281.7 67.3 q5.0 -0.4 10.0 0" stroke="#b5875a" stroke-width="0.75" fill="none" opacity="0.6"/><path d="M283.6 65.7 q7.1 -0.4 14.1 0" stroke="#b5875a" stroke-width="0.75" fill="none" opacity="0.6"/><path d="M281.5 66.5 q8.6 -0.8 17.1 0" stroke="#b5875a" stroke-width="0.75" fill="none" opacity="0.6"/><rect x="306.58" y="58.30" width="52.65" height="16.77" fill="#d1ad8a"/><path d="M324.0 65.0 q5.5 -1.0 11.0 0" stroke="#b5875a" stroke-width="0.75" fill="none" opacity="0.6"/><path d="M340.5 64.1 q7.3 -0.6 14.6 0" stroke="#b5875a" stroke-width="0.75" fill="none" opacity="0.6"/><path d="M326.8 65.5 q4.8 -0.4 9.7 0" stroke="#b5875a" stroke-width="0.75" fill="none" opacity="0.6"/><path d="M315.4 71.1 q6.5 -0.5 13.0 0" stroke="#b5875a" stroke-width="0.75" fill="none" opacity="0.6"/><path d="M338.2 72.0 q6.2 -0.4 12.5 0" stroke="#b5875a" stroke-width="0.75" fill="none" opacity="0.6"/><rect x="362.02" y="58.30" width="26.98" height="16.77" fill="#c8a07a"/><path d="M365.7 63.2 q6.8 -0.6 13.6 0" stroke="#b5875a" stroke-width="0.75" fill="none" opacity="0.6"/><path d="M366.6 70.0 q5.0 -0.3 10.0 0" stroke="#b5875a" stroke-width="0.75" fill="none" opacity="0.6"/><path d="M370.1 65.4 q7.7 -0.5 15.5 0" stroke="#b5875a" stroke-width="0.75" fill="none" opacity="0.6"/><path d="M365.9 69.4 q6.5 -0.8 13.0 0" stroke="#b5875a" stroke-width="0.75" fill="none" opacity="0.6"/><path d="M366.5 68.7 q6.6 -1.0 13.3 0" stroke="#b5875a" stroke-width="0.75" fill="none" opacity="0.6"/><rect x="0.00" y="77.47" width="53.45" height="16.78" fill="#c8a07a"/><path d="M5.1 90.1 q5.9 -0.9 11.8 0" stroke="#b5875a" stroke-width="0.75" fill="none" opacity="0.6"/><path d="M16.4 83.8 q8.1 -1.2 16.1 0" stroke="#b5875a" stroke-width="0.75" fill="none" opacity="0.6"/><path d="M6.3 85.1 q7.8 -1.0 15.6 0" stroke="#b5875a" stroke-width="0.75" fill="none" opacity="0.6"/><path d="M34.4 85.8 q4.4 -1.1 8.7 0" stroke="#b5875a" stroke-width="0.75" fill="none" opacity="0.6"/><path d="M33.0 86.2 q6.3 -0.7 12.7 0" stroke="#b5875a" stroke-width="0.75" fill="none" opacity="0.6"/><rect x="56.25" y="77.47" width="52.65" height="16.78" fill="#c9a37c"/><path d="M65.6 82.1 q8.9 -0.4 17.7 0" stroke="#b5875a" stroke-width="0.75" fill="none" opacity="0.6"/><path d="M85.2 88.0 q8.2 -1.1 16.5 0" stroke="#b5875a" stroke-width="0.75" fill="none" opacity="0.6"/><path d="M61.0 88.8 q4.0 -0.4 8.0 0" stroke="#b5875a" stroke-width="0.75" fill="none" opacity="0.6"/><path d="M76.8 80.9 q7.6 -1.2 15.2 0" stroke="#b5875a" stroke-width="0.75" fill="none" opacity="0.6"/><path d="M78.7 86.2 q6.2 -1.0 12.4 0" stroke="#b5875a" stroke-width="0.75" fill="none" opacity="0.6"/><rect x="111.70" y="77.47" width="52.65" height="16.78" fill="#c9a37c"/><path d="M116.0 86.1 q6.9 -0.6 13.8 0" stroke="#b5875a" stroke-width="0.75" fill="none" opacity="0.6"/><path d="M121.0 87.0 q4.1 -0.6 8.1 0" stroke="#b5875a" stroke-width="0.75" fill="none" opacity="0.6"/><path d="M128.7 90.8 q7.2 -1.1 14.4 0" stroke="#b5875a" stroke-width="0.75" fill="none" opacity="0.6"/><path d="M129.2 83.0 q5.2 -1.2 10.5 0" stroke="#b5875a" stroke-width="0.75" fill="none" opacity="0.6"/><path d="M136.7 83.8 q4.1 -0.7 8.2 0" stroke="#b5875a" stroke-width="0.75" fill="none" opacity="0.6"/><rect x="167.15" y="77.47" width="52.65" height="16.78" fill="#c9a47e"/><path d="M171.8 82.9 q6.1 -0.6 12.2 0" stroke="#b5875a" stroke-width="0.75" fill="none" opacity="0.6"/><path d="M185.2 88.0 q7.6 -0.6 15.2 0" stroke="#b5875a" stroke-width="0.75" fill="none" opacity="0.6"/><path d="M182.1 80.5 q5.5 -1.1 10.9 0" stroke="#b5875a" stroke-width="0.75" fill="none" opacity="0.6"/><path d="M171.4 85.8 q5.0 -1.0 10.0 0" stroke="#b5875a" stroke-width="0.75" fill="none" opacity="0.6"/><path d="M175.5 85.5 q5.3 -1.1 10.7 0" stroke="#b5875a" stroke-width="0.75" fill="none" opacity="0.6"/><rect x="222.60" y="77.47" width="52.65" height="16.78" fill="#c9a37c"/><path d="M255.7 85.8 q4.9 -0.5 9.9 0" stroke="#b5875a" stroke-width="0.75" fill="none" opacity="0.6"/><path d="M238.2 87.6 q8.7 -0.4 17.5 0" stroke="#b5875a" stroke-width="0.75" fill="none" opacity="0.6"/><path d="M237.4 82.8 q8.9 -0.4 17.7 0" stroke="#b5875a" stroke-width="0.75" fill="none" opacity="0.6"/><path d="M226.3 81.1 q6.0 -1.1 11.9 0" stroke="#b5875a" stroke-width="0.75" fill="none" opacity="0.6"/><path d="M253.4 88.4 q9.0 -1.1 18.0 0" stroke="#b5875a" stroke-width="0.75" fill="none" opacity="0.6"/><rect x="278.05" y="77.47" width="52.65" height="16.78" fill="#cba67f"/><path d="M286.3 87.5 q6.6 -0.7 13.2 0" stroke="#b5875a" stroke-width="0.75" fill="none" opacity="0.6"/><path d="M290.2 88.3 q8.2 -1.2 16.4 0" stroke="#b5875a" stroke-width="0.75" fill="none" opacity="0.6"/><path d="M294.5 81.6 q4.4 -0.4 8.8 0" stroke="#b5875a" stroke-width="0.75" fill="none" opacity="0.6"/><path d="M293.8 90.0 q6.8 -1.0 13.6 0" stroke="#b5875a" stroke-width="0.75" fill="none" opacity="0.6"/><path d="M292.5 88.8 q5.5 -1.0 11.1 0" stroke="#b5875a" stroke-width="0.75" fill="none" opacity="0.6"/><rect x="333.50" y="77.47" width="52.90" height="16.78" fill="#c9a37c"/><path d="M337.1 85.6 q5.9 -1.1 11.7 0" stroke="#b5875a" stroke-width="0.75" fill="none" opacity="0.6"/><path d="M341.9 84.4 q8.5 -0.3 17.0 0" stroke="#b5875a" stroke-width="0.75" fill="none" opacity="0.6"/><path d="M349.0 89.2 q7.8 -0.3 15.7 0" stroke="#b5875a" stroke-width="0.75" fill="none" opacity="0.6"/><path d="M336.6 81.1 q8.6 -0.5 17.2 0" stroke="#b5875a" stroke-width="0.75" fill="none" opacity="0.6"/><path d="M360.1 90.2 q5.7 -0.5 11.4 0" stroke="#b5875a" stroke-width="0.75" fill="none" opacity="0.6"/><rect x="0.00" y="96.65" width="26.52" height="16.78" fill="#cda882"/><path d="M3.7 107.4 q5.6 -0.5 11.2 0" stroke="#b5875a" stroke-width="0.75" fill="none" opacity="0.6"/><path d="M2.0 107.8 q8.6 -0.9 17.2 0" stroke="#b5875a" stroke-width="0.75" fill="none" opacity="0.6"/><path d="M8.2 99.9 q5.2 -0.7 10.3 0" stroke="#b5875a" stroke-width="0.75" fill="none" opacity="0.6"/><path d="M8.2 109.9 q5.9 -0.5 11.9 0" stroke="#b5875a" stroke-width="0.75" fill="none" opacity="0.6"/><path d="M4.8 105.0 q8.6 -0.5 17.3 0" stroke="#b5875a" stroke-width="0.75" fill="none" opacity="0.6"/><rect x="29.32" y="96.65" width="52.65" height="16.78" fill="#ceaa86"/><path d="M58.2 108.0 q7.0 -0.6 14.1 0" stroke="#b5875a" stroke-width="0.75" fill="none" opacity="0.6"/><path d="M41.8 103.5 q7.9 -0.4 15.8 0" stroke="#b5875a" stroke-width="0.75" fill="none" opacity="0.6"/><path d="M37.8 107.8 q5.2 -0.4 10.5 0" stroke="#b5875a" stroke-width="0.75" fill="none" opacity="0.6"/><path d="M32.4 105.6 q5.6 -1.2 11.3 0" stroke="#b5875a" stroke-width="0.75" fill="none" opacity="0.6"/><path d="M60.2 110.3 q5.3 -0.4 10.6 0" stroke="#b5875a" stroke-width="0.75" fill="none" opacity="0.6"/><rect x="84.78" y="96.65" width="52.65" height="16.78" fill="#c9a37c"/><path d="M100.5 110.3 q8.9 -0.5 17.7 0" stroke="#b5875a" stroke-width="0.75" fill="none" opacity="0.6"/><path d="M91.1 104.6 q8.5 -0.5 16.9 0" stroke="#b5875a" stroke-width="0.75" fill="none" opacity="0.6"/><path d="M104.4 108.0 q7.8 -1.0 15.6 0" stroke="#b5875a" stroke-width="0.75" fill="none" opacity="0.6"/><path d="M96.4 102.7 q5.3 -0.5 10.7 0" stroke="#b5875a" stroke-width="0.75" fill="none" opacity="0.6"/><path d="M95.3 104.4 q4.9 -0.5 9.9 0" stroke="#b5875a" stroke-width="0.75" fill="none" opacity="0.6"/><rect x="140.22" y="96.65" width="52.65" height="16.78" fill="#ceaa86"/><path d="M171.1 105.9 q5.6 -0.7 11.3 0" stroke="#b5875a" stroke-width="0.75" fill="none" opacity="0.6"/><path d="M174.6 105.1 q5.2 -1.0 10.3 0" stroke="#b5875a" stroke-width="0.75" fill="none" opacity="0.6"/><path d="M163.6 110.3 q4.5 -0.7 9.0 0" stroke="#b5875a" stroke-width="0.75" fill="none" opacity="0.6"/><path d="M169.0 108.7 q8.6 -0.3 17.1 0" stroke="#b5875a" stroke-width="0.75" fill="none" opacity="0.6"/><path d="M151.8 100.9 q4.9 -1.2 9.9 0" stroke="#b5875a" stroke-width="0.75" fill="none" opacity="0.6"/><rect x="195.68" y="96.65" width="52.65" height="16.78" fill="#c8a07a"/><path d="M228.0 103.7 q8.3 -0.7 16.7 0" stroke="#b5875a" stroke-width="0.75" fill="none" opacity="0.6"/><path d="M206.2 108.0 q8.7 -0.4 17.5 0" stroke="#b5875a" stroke-width="0.75" fill="none" opacity="0.6"/><path d="M217.1 106.3 q5.1 -0.6 10.2 0" stroke="#b5875a" stroke-width="0.75" fill="none" opacity="0.6"/><path d="M202.3 101.8 q5.3 -0.8 10.5 0" stroke="#b5875a" stroke-width="0.75" fill="none" opacity="0.6"/><path d="M219.0 101.8 q4.1 -0.6 8.1 0" stroke="#b5875a" stroke-width="0.75" fill="none" opacity="0.6"/><rect x="251.12" y="96.65" width="52.65" height="16.78" fill="#cba67f"/><path d="M259.2 103.0 q5.0 -1.0 10.0 0" stroke="#b5875a" stroke-width="0.75" fill="none" opacity="0.6"/><path d="M271.0 100.3 q4.5 -0.7 9.0 0" stroke="#b5875a" stroke-width="0.75" fill="none" opacity="0.6"/><path d="M271.1 106.5 q4.5 -0.4 8.9 0" stroke="#b5875a" stroke-width="0.75" fill="none" opacity="0.6"/><path d="M275.8 104.1 q5.4 -0.6 10.8 0" stroke="#b5875a" stroke-width="0.75" fill="none" opacity="0.6"/><path d="M284.2 103.0 q6.8 -0.6 13.7 0" stroke="#b5875a" stroke-width="0.75" fill="none" opacity="0.6"/><rect x="306.58" y="96.65" width="52.65" height="16.78" fill="#c9a47e"/><path d="M309.2 107.9 q8.0 -0.9 16.0 0" stroke="#b5875a" stroke-width="0.75" fill="none" opacity="0.6"/><path d="M321.3 104.0 q8.7 -0.7 17.4 0" stroke="#b5875a" stroke-width="0.75" fill="none" opacity="0.6"/><path d="M313.7 100.9 q4.5 -0.8 8.9 0" stroke="#b5875a" stroke-width="0.75" fill="none" opacity="0.6"/><path d="M320.5 108.0 q4.6 -0.3 9.3 0" stroke="#b5875a" stroke-width="0.75" fill="none" opacity="0.6"/><path d="M313.2 108.3 q6.0 -0.8 12.0 0" stroke="#b5875a" stroke-width="0.75" fill="none" opacity="0.6"/><rect x="362.02" y="96.65" width="26.98" height="16.78" fill="#cba67f"/><path d="M369.2 101.5 q5.7 -0.4 11.5 0" stroke="#b5875a" stroke-width="0.75" fill="none" opacity="0.6"/><path d="M365.2 100.4 q5.9 -1.0 11.8 0" stroke="#b5875a" stroke-width="0.75" fill="none" opacity="0.6"/><path d="M369.6 108.3 q5.5 -1.1 11.0 0" stroke="#b5875a" stroke-width="0.75" fill="none" opacity="0.6"/><path d="M364.3 109.5 q5.6 -0.8 11.1 0" stroke="#b5875a" stroke-width="0.75" fill="none" opacity="0.6"/><path d="M368.5 100.6 q7.6 -0.9 15.1 0" stroke="#b5875a" stroke-width="0.75" fill="none" opacity="0.6"/><rect x="0.00" y="115.83" width="53.45" height="16.78" fill="#d1ad8a"/><path d="M23.4 128.1 q7.1 -0.9 14.2 0" stroke="#b5875a" stroke-width="0.75" fill="none" opacity="0.6"/><path d="M8.6 123.9 q6.8 -0.3 13.7 0" stroke="#b5875a" stroke-width="0.75" fill="none" opacity="0.6"/><path d="M33.4 120.5 q5.8 -0.4 11.6 0" stroke="#b5875a" stroke-width="0.75" fill="none" opacity="0.6"/><path d="M34.5 127.6 q5.0 -1.1 9.9 0" stroke="#b5875a" stroke-width="0.75" fill="none" opacity="0.6"/><path d="M30.2 126.1 q7.3 -0.6 14.7 0" stroke="#b5875a" stroke-width="0.75" fill="none" opacity="0.6"/><rect x="56.25" y="115.83" width="52.65" height="16.78" fill="#c9a47e"/><path d="M77.8 124.8 q7.1 -0.6 14.3 0" stroke="#b5875a" stroke-width="0.75" fill="none" opacity="0.6"/><path d="M72.0 125.1 q6.1 -0.9 12.3 0" stroke="#b5875a" stroke-width="0.75" fill="none" opacity="0.6"/><path d="M72.8 123.5 q4.1 -0.9 8.2 0" stroke="#b5875a" stroke-width="0.75" fill="none" opacity="0.6"/><path d="M74.2 121.4 q7.8 -1.0 15.6 0" stroke="#b5875a" stroke-width="0.75" fill="none" opacity="0.6"/><path d="M73.2 120.8 q6.4 -0.4 12.7 0" stroke="#b5875a" stroke-width="0.75" fill="none" opacity="0.6"/><rect x="111.70" y="115.83" width="52.65" height="16.78" fill="#d1ad8a"/><path d="M125.4 122.8 q8.0 -0.8 16.0 0" stroke="#b5875a" stroke-width="0.75" fill="none" opacity="0.6"/><path d="M135.2 119.3 q4.7 -1.1 9.3 0" stroke="#b5875a" stroke-width="0.75" fill="none" opacity="0.6"/><path d="M123.9 126.6 q4.4 -1.0 8.8 0" stroke="#b5875a" stroke-width="0.75" fill="none" opacity="0.6"/><path d="M142.9 125.9 q7.9 -0.3 15.8 0" stroke="#b5875a" stroke-width="0.75" fill="none" opacity="0.6"/><path d="M115.9 125.4 q7.5 -0.4 14.9 0" stroke="#b5875a" stroke-width="0.75" fill="none" opacity="0.6"/><rect x="167.15" y="115.83" width="52.65" height="16.78" fill="#d1ad8a"/><path d="M201.2 124.1 q8.8 -1.1 17.6 0" stroke="#b5875a" stroke-width="0.75" fill="none" opacity="0.6"/><path d="M174.5 127.3 q8.7 -0.4 17.3 0" stroke="#b5875a" stroke-width="0.75" fill="none" opacity="0.6"/><path d="M180.6 127.0 q4.8 -1.1 9.6 0" stroke="#b5875a" stroke-width="0.75" fill="none" opacity="0.6"/><path d="M178.1 127.6 q4.7 -0.8 9.4 0" stroke="#b5875a" stroke-width="0.75" fill="none" opacity="0.6"/><path d="M199.2 121.1 q5.3 -0.8 10.6 0" stroke="#b5875a" stroke-width="0.75" fill="none" opacity="0.6"/><rect x="222.60" y="115.83" width="52.65" height="16.78" fill="#cba67f"/><path d="M236.8 121.0 q6.0 -0.9 12.0 0" stroke="#b5875a" stroke-width="0.75" fill="none" opacity="0.6"/><path d="M233.7 122.4 q5.9 -1.0 11.8 0" stroke="#b5875a" stroke-width="0.75" fill="none" opacity="0.6"/><path d="M233.2 127.1 q4.2 -1.1 8.5 0" stroke="#b5875a" stroke-width="0.75" fill="none" opacity="0.6"/><path d="M256.1 123.7 q6.6 -0.9 13.2 0" stroke="#b5875a" stroke-width="0.75" fill="none" opacity="0.6"/><path d="M253.9 121.5 q6.7 -1.1 13.4 0" stroke="#b5875a" stroke-width="0.75" fill="none" opacity="0.6"/><rect x="278.05" y="115.83" width="52.65" height="16.78" fill="#cba67f"/><path d="M288.7 129.5 q6.9 -0.6 13.8 0" stroke="#b5875a" stroke-width="0.75" fill="none" opacity="0.6"/><path d="M305.0 123.6 q4.9 -1.0 9.8 0" stroke="#b5875a" stroke-width="0.75" fill="none" opacity="0.6"/><path d="M281.6 127.7 q5.3 -0.9 10.5 0" stroke="#b5875a" stroke-width="0.75" fill="none" opacity="0.6"/><path d="M312.2 125.1 q7.3 -0.6 14.6 0" stroke="#b5875a" stroke-width="0.75" fill="none" opacity="0.6"/><path d="M280.1 119.2 q4.7 -0.9 9.5 0" stroke="#b5875a" stroke-width="0.75" fill="none" opacity="0.6"/><rect x="333.50" y="115.83" width="52.90" height="16.78" fill="#c9a47e"/><path d="M349.2 122.7 q4.2 -0.7 8.5 0" stroke="#b5875a" stroke-width="0.75" fill="none" opacity="0.6"/><path d="M355.7 119.3 q4.3 -0.8 8.5 0" stroke="#b5875a" stroke-width="0.75" fill="none" opacity="0.6"/><path d="M345.5 124.5 q6.7 -0.7 13.3 0" stroke="#b5875a" stroke-width="0.75" fill="none" opacity="0.6"/><path d="M345.4 120.3 q5.8 -1.0 11.7 0" stroke="#b5875a" stroke-width="0.75" fill="none" opacity="0.6"/><path d="M340.7 119.0 q8.0 -0.9 16.0 0" stroke="#b5875a" stroke-width="0.75" fill="none" opacity="0.6"/><rect x="0.00" y="135.00" width="26.52" height="16.78" fill="#d3b18f"/><path d="M2.6 144.9 q8.4 -1.0 16.7 0" stroke="#b5875a" stroke-width="0.75" fill="none" opacity="0.6"/><path d="M4.6 140.8 q4.1 -0.9 8.1 0" stroke="#b5875a" stroke-width="0.75" fill="none" opacity="0.6"/><path d="M5.7 141.8 q7.2 -0.7 14.5 0" stroke="#b5875a" stroke-width="0.75" fill="none" opacity="0.6"/><path d="M8.1 145.9 q5.2 -1.1 10.5 0" stroke="#b5875a" stroke-width="0.75" fill="none" opacity="0.6"/><path d="M2.3 143.7 q6.0 -0.5 12.1 0" stroke="#b5875a" stroke-width="0.75" fill="none" opacity="0.6"/><rect x="29.32" y="135.00" width="52.65" height="16.78" fill="#cda882"/><path d="M61.1 139.1 q7.1 -0.9 14.1 0" stroke="#b5875a" stroke-width="0.75" fill="none" opacity="0.6"/><path d="M37.8 142.5 q6.6 -0.9 13.2 0" stroke="#b5875a" stroke-width="0.75" fill="none" opacity="0.6"/><path d="M52.5 142.5 q7.1 -0.8 14.1 0" stroke="#b5875a" stroke-width="0.75" fill="none" opacity="0.6"/><path d="M33.4 144.7 q9.0 -1.0 17.9 0" stroke="#b5875a" stroke-width="0.75" fill="none" opacity="0.6"/><path d="M46.9 143.8 q5.9 -0.7 11.8 0" stroke="#b5875a" stroke-width="0.75" fill="none" opacity="0.6"/><rect x="84.78" y="135.00" width="52.65" height="16.78" fill="#d3b18f"/><path d="M89.4 145.1 q4.9 -1.2 9.8 0" stroke="#b5875a" stroke-width="0.75" fill="none" opacity="0.6"/><path d="M95.3 144.9 q4.6 -1.1 9.2 0" stroke="#b5875a" stroke-width="0.75" fill="none" opacity="0.6"/><path d="M117.0 148.2 q5.3 -0.3 10.6 0" stroke="#b5875a" stroke-width="0.75" fill="none" opacity="0.6"/><path d="M107.5 145.3 q7.4 -1.1 14.9 0" stroke="#b5875a" stroke-width="0.75" fill="none" opacity="0.6"/><path d="M118.5 141.2 q8.6 -1.1 17.3 0" stroke="#b5875a" stroke-width="0.75" fill="none" opacity="0.6"/><rect x="140.22" y="135.00" width="52.65" height="16.78" fill="#c9a37c"/><path d="M171.0 138.2 q5.3 -0.5 10.6 0" stroke="#b5875a" stroke-width="0.75" fill="none" opacity="0.6"/><path d="M166.5 148.2 q7.7 -0.6 15.5 0" stroke="#b5875a" stroke-width="0.75" fill="none" opacity="0.6"/><path d="M171.0 141.5 q5.2 -1.1 10.4 0" stroke="#b5875a" stroke-width="0.75" fill="none" opacity="0.6"/><path d="M162.8 145.5 q7.3 -1.2 14.7 0" stroke="#b5875a" stroke-width="0.75" fill="none" opacity="0.6"/><path d="M157.6 147.0 q7.5 -1.1 15.0 0" stroke="#b5875a" stroke-width="0.75" fill="none" opacity="0.6"/><rect x="195.68" y="135.00" width="52.65" height="16.78" fill="#c9a47e"/><path d="M228.9 140.5 q8.4 -1.0 16.8 0" stroke="#b5875a" stroke-width="0.75" fill="none" opacity="0.6"/><path d="M210.5 144.3 q6.8 -0.5 13.7 0" stroke="#b5875a" stroke-width="0.75" fill="none" opacity="0.6"/><path d="M198.7 139.2 q7.1 -0.4 14.2 0" stroke="#b5875a" stroke-width="0.75" fill="none" opacity="0.6"/><path d="M229.6 145.6 q4.2 -0.4 8.3 0" stroke="#b5875a" stroke-width="0.75" fill="none" opacity="0.6"/><path d="M218.7 138.5 q4.3 -0.3 8.7 0" stroke="#b5875a" stroke-width="0.75" fill="none" opacity="0.6"/><rect x="251.12" y="135.00" width="52.65" height="16.78" fill="#cba67f"/><path d="M259.6 148.3 q6.7 -0.9 13.3 0" stroke="#b5875a" stroke-width="0.75" fill="none" opacity="0.6"/><path d="M281.8 146.1 q7.6 -0.6 15.1 0" stroke="#b5875a" stroke-width="0.75" fill="none" opacity="0.6"/><path d="M261.2 140.2 q4.2 -1.2 8.3 0" stroke="#b5875a" stroke-width="0.75" fill="none" opacity="0.6"/><path d="M282.9 146.1 q4.4 -1.0 8.9 0" stroke="#b5875a" stroke-width="0.75" fill="none" opacity="0.6"/><path d="M273.8 143.1 q4.7 -1.0 9.3 0" stroke="#b5875a" stroke-width="0.75" fill="none" opacity="0.6"/><rect x="306.58" y="135.00" width="52.65" height="16.78" fill="#c8a07a"/><path d="M318.2 141.6 q5.3 -0.6 10.6 0" stroke="#b5875a" stroke-width="0.75" fill="none" opacity="0.6"/><path d="M338.9 138.5 q7.8 -1.1 15.6 0" stroke="#b5875a" stroke-width="0.75" fill="none" opacity="0.6"/><path d="M333.7 144.5 q6.4 -0.6 12.8 0" stroke="#b5875a" stroke-width="0.75" fill="none" opacity="0.6"/><path d="M332.9 146.5 q4.2 -0.8 8.3 0" stroke="#b5875a" stroke-width="0.75" fill="none" opacity="0.6"/><path d="M311.8 143.1 q4.2 -0.8 8.5 0" stroke="#b5875a" stroke-width="0.75" fill="none" opacity="0.6"/><rect x="362.02" y="135.00" width="26.98" height="16.78" fill="#c9a37c"/><path d="M368.0 141.1 q6.2 -0.8 12.4 0" stroke="#b5875a" stroke-width="0.75" fill="none" opacity="0.6"/><path d="M366.0 146.1 q4.3 -0.6 8.5 0" stroke="#b5875a" stroke-width="0.75" fill="none" opacity="0.6"/><path d="M364.7 145.5 q8.1 -1.2 16.3 0" stroke="#b5875a" stroke-width="0.75" fill="none" opacity="0.6"/><path d="M368.2 148.3 q6.6 -0.8 13.2 0" stroke="#b5875a" stroke-width="0.75" fill="none" opacity="0.6"/><path d="M365.1 146.8 q8.7 -0.5 17.4 0" stroke="#b5875a" stroke-width="0.75" fill="none" opacity="0.6"/><rect x="0.00" y="154.18" width="53.45" height="16.77" fill="#d1ad8a"/><path d="M5.7 164.0 q4.4 -1.0 8.8 0" stroke="#b5875a" stroke-width="0.75" fill="none" opacity="0.6"/><path d="M25.3 165.7 q7.1 -0.6 14.3 0" stroke="#b5875a" stroke-width="0.75" fill="none" opacity="0.6"/><path d="M15.4 161.4 q8.5 -0.4 16.9 0" stroke="#b5875a" stroke-width="0.75" fill="none" opacity="0.6"/><path d="M31.7 157.4 q5.0 -0.5 10.1 0" stroke="#b5875a" stroke-width="0.75" fill="none" opacity="0.6"/><path d="M32.1 162.6 q5.9 -1.1 11.8 0" stroke="#b5875a" stroke-width="0.75" fill="none" opacity="0.6"/><rect x="56.25" y="154.18" width="52.65" height="16.77" fill="#c8a07a"/><path d="M89.1 158.5 q7.0 -0.9 13.9 0" stroke="#b5875a" stroke-width="0.75" fill="none" opacity="0.6"/><path d="M78.0 157.5 q6.9 -0.8 13.8 0" stroke="#b5875a" stroke-width="0.75" fill="none" opacity="0.6"/><path d="M86.6 162.0 q6.8 -0.6 13.5 0" stroke="#b5875a" stroke-width="0.75" fill="none" opacity="0.6"/><path d="M73.4 164.6 q5.3 -0.5 10.6 0" stroke="#b5875a" stroke-width="0.75" fill="none" opacity="0.6"/><path d="M69.2 164.1 q7.5 -0.8 15.0 0" stroke="#b5875a" stroke-width="0.75" fill="none" opacity="0.6"/><rect x="111.70" y="154.18" width="52.65" height="16.77" fill="#ceaa86"/><path d="M123.5 164.8 q8.2 -0.4 16.4 0" stroke="#b5875a" stroke-width="0.75" fill="none" opacity="0.6"/><path d="M118.8 159.8 q5.6 -0.8 11.3 0" stroke="#b5875a" stroke-width="0.75" fill="none" opacity="0.6"/><path d="M119.0 160.7 q4.9 -1.2 9.9 0" stroke="#b5875a" stroke-width="0.75" fill="none" opacity="0.6"/><path d="M137.5 158.3 q8.8 -0.4 17.6 0" stroke="#b5875a" stroke-width="0.75" fill="none" opacity="0.6"/><path d="M126.2 167.8 q8.0 -1.0 15.9 0" stroke="#b5875a" stroke-width="0.75" fill="none" opacity="0.6"/><rect x="167.15" y="154.18" width="52.65" height="16.77" fill="#c9a47e"/><path d="M178.1 158.4 q8.6 -0.6 17.1 0" stroke="#b5875a" stroke-width="0.75" fill="none" opacity="0.6"/><path d="M198.1 162.2 q4.1 -1.1 8.1 0" stroke="#b5875a" stroke-width="0.75" fill="none" opacity="0.6"/><path d="M183.4 159.6 q8.9 -0.6 17.8 0" stroke="#b5875a" stroke-width="0.75" fill="none" opacity="0.6"/><path d="M169.9 159.9 q7.7 -0.3 15.4 0" stroke="#b5875a" stroke-width="0.75" fill="none" opacity="0.6"/><path d="M177.1 166.4 q7.5 -0.8 15.0 0" stroke="#b5875a" stroke-width="0.75" fill="none" opacity="0.6"/><rect x="222.60" y="154.18" width="52.65" height="16.77" fill="#c9a47e"/><path d="M252.2 164.4 q7.3 -1.1 14.5 0" stroke="#b5875a" stroke-width="0.75" fill="none" opacity="0.6"/><path d="M245.6 163.5 q5.1 -0.5 10.3 0" stroke="#b5875a" stroke-width="0.75" fill="none" opacity="0.6"/><path d="M228.7 161.8 q5.3 -0.9 10.6 0" stroke="#b5875a" stroke-width="0.75" fill="none" opacity="0.6"/><path d="M253.8 159.8 q6.0 -0.9 12.0 0" stroke="#b5875a" stroke-width="0.75" fill="none" opacity="0.6"/><path d="M229.7 166.3 q6.4 -0.3 12.8 0" stroke="#b5875a" stroke-width="0.75" fill="none" opacity="0.6"/><rect x="278.05" y="154.18" width="52.65" height="16.77" fill="#c9a47e"/><path d="M297.0 164.3 q8.4 -1.1 16.7 0" stroke="#b5875a" stroke-width="0.75" fill="none" opacity="0.6"/><path d="M290.8 157.3 q8.2 -1.1 16.3 0" stroke="#b5875a" stroke-width="0.75" fill="none" opacity="0.6"/><path d="M283.5 159.9 q5.1 -0.9 10.2 0" stroke="#b5875a" stroke-width="0.75" fill="none" opacity="0.6"/><path d="M311.1 159.3 q5.7 -1.1 11.5 0" stroke="#b5875a" stroke-width="0.75" fill="none" opacity="0.6"/><path d="M295.0 159.4 q6.4 -0.3 12.8 0" stroke="#b5875a" stroke-width="0.75" fill="none" opacity="0.6"/><rect x="333.50" y="154.18" width="52.90" height="16.77" fill="#cba67f"/><path d="M352.7 161.6 q8.7 -0.5 17.5 0" stroke="#b5875a" stroke-width="0.75" fill="none" opacity="0.6"/><path d="M358.0 161.4 q7.8 -0.4 15.6 0" stroke="#b5875a" stroke-width="0.75" fill="none" opacity="0.6"/><path d="M367.9 161.0 q4.3 -0.5 8.6 0" stroke="#b5875a" stroke-width="0.75" fill="none" opacity="0.6"/><path d="M348.6 157.3 q6.1 -0.7 12.2 0" stroke="#b5875a" stroke-width="0.75" fill="none" opacity="0.6"/><path d="M358.5 161.0 q5.3 -0.5 10.7 0" stroke="#b5875a" stroke-width="0.75" fill="none" opacity="0.6"/><rect x="0.00" y="173.35" width="26.52" height="16.78" fill="#c9a47e"/><path d="M8.1 182.0 q5.1 -1.0 10.2 0" stroke="#b5875a" stroke-width="0.75" fill="none" opacity="0.6"/><path d="M4.6 178.6 q4.6 -1.0 9.3 0" stroke="#b5875a" stroke-width="0.75" fill="none" opacity="0.6"/><path d="M7.3 183.2 q6.3 -0.8 12.7 0" stroke="#b5875a" stroke-width="0.75" fill="none" opacity="0.6"/><path d="M3.5 186.7 q5.8 -0.9 11.5 0" stroke="#b5875a" stroke-width="0.75" fill="none" opacity="0.6"/><path d="M7.3 185.1 q6.3 -0.6 12.7 0" stroke="#b5875a" stroke-width="0.75" fill="none" opacity="0.6"/><rect x="29.32" y="173.35" width="52.65" height="16.78" fill="#c6a078"/><path d="M52.5 184.8 q6.3 -1.0 12.7 0" stroke="#b5875a" stroke-width="0.75" fill="none" opacity="0.6"/><path d="M38.8 183.9 q7.4 -1.2 14.9 0" stroke="#b5875a" stroke-width="0.75" fill="none" opacity="0.6"/><path d="M53.5 181.5 q8.0 -1.0 16.1 0" stroke="#b5875a" stroke-width="0.75" fill="none" opacity="0.6"/><path d="M43.0 183.4 q5.6 -0.7 11.2 0" stroke="#b5875a" stroke-width="0.75" fill="none" opacity="0.6"/><path d="M51.7 177.3 q8.5 -0.4 17.0 0" stroke="#b5875a" stroke-width="0.75" fill="none" opacity="0.6"/><rect x="84.78" y="173.35" width="52.65" height="16.78" fill="#ceaa86"/><path d="M114.7 177.0 q8.1 -1.1 16.3 0" stroke="#b5875a" stroke-width="0.75" fill="none" opacity="0.6"/><path d="M112.4 177.9 q8.2 -0.9 16.3 0" stroke="#b5875a" stroke-width="0.75" fill="none" opacity="0.6"/><path d="M87.3 176.5 q8.8 -0.9 17.5 0" stroke="#b5875a" stroke-width="0.75" fill="none" opacity="0.6"/><path d="M94.9 177.4 q4.7 -0.5 9.4 0" stroke="#b5875a" stroke-width="0.75" fill="none" opacity="0.6"/><path d="M112.1 180.1 q4.8 -1.1 9.5 0" stroke="#b5875a" stroke-width="0.75" fill="none" opacity="0.6"/><rect x="140.22" y="173.35" width="52.65" height="16.78" fill="#c6a078"/><path d="M147.7 186.0 q7.0 -1.0 14.1 0" stroke="#b5875a" stroke-width="0.75" fill="none" opacity="0.6"/><path d="M164.1 186.0 q7.9 -1.1 15.9 0" stroke="#b5875a" stroke-width="0.75" fill="none" opacity="0.6"/><path d="M148.7 183.8 q6.7 -1.0 13.3 0" stroke="#b5875a" stroke-width="0.75" fill="none" opacity="0.6"/><path d="M156.5 185.9 q6.8 -0.5 13.6 0" stroke="#b5875a" stroke-width="0.75" fill="none" opacity="0.6"/><path d="M149.9 177.9 q6.5 -0.4 12.9 0" stroke="#b5875a" stroke-width="0.75" fill="none" opacity="0.6"/><rect x="195.68" y="173.35" width="52.65" height="16.78" fill="#d3b18f"/><path d="M227.2 183.9 q5.2 -0.4 10.5 0" stroke="#b5875a" stroke-width="0.75" fill="none" opacity="0.6"/><path d="M217.3 184.3 q4.8 -0.6 9.6 0" stroke="#b5875a" stroke-width="0.75" fill="none" opacity="0.6"/><path d="M220.4 181.7 q5.5 -0.7 11.0 0" stroke="#b5875a" stroke-width="0.75" fill="none" opacity="0.6"/><path d="M211.6 187.1 q7.4 -0.5 14.8 0" stroke="#b5875a" stroke-width="0.75" fill="none" opacity="0.6"/><path d="M209.4 183.3 q4.1 -0.3 8.2 0" stroke="#b5875a" stroke-width="0.75" fill="none" opacity="0.6"/><rect x="251.12" y="173.35" width="52.65" height="16.78" fill="#cba67f"/><path d="M279.5 177.4 q6.4 -1.0 12.8 0" stroke="#b5875a" stroke-width="0.75" fill="none" opacity="0.6"/><path d="M257.8 178.6 q6.1 -0.4 12.2 0" stroke="#b5875a" stroke-width="0.75" fill="none" opacity="0.6"/><path d="M256.2 183.5 q5.7 -1.0 11.4 0" stroke="#b5875a" stroke-width="0.75" fill="none" opacity="0.6"/><path d="M271.2 186.2 q5.4 -0.6 10.8 0" stroke="#b5875a" stroke-width="0.75" fill="none" opacity="0.6"/><path d="M261.3 176.9 q5.4 -0.6 10.9 0" stroke="#b5875a" stroke-width="0.75" fill="none" opacity="0.6"/><rect x="306.58" y="173.35" width="52.65" height="16.78" fill="#d3b18f"/><path d="M321.8 181.8 q5.4 -0.8 10.7 0" stroke="#b5875a" stroke-width="0.75" fill="none" opacity="0.6"/><path d="M340.4 183.4 q8.0 -0.6 15.9 0" stroke="#b5875a" stroke-width="0.75" fill="none" opacity="0.6"/><path d="M318.9 179.6 q6.9 -0.9 13.9 0" stroke="#b5875a" stroke-width="0.75" fill="none" opacity="0.6"/><path d="M334.2 176.8 q7.6 -1.1 15.2 0" stroke="#b5875a" stroke-width="0.75" fill="none" opacity="0.6"/><path d="M326.4 176.9 q5.5 -0.3 11.0 0" stroke="#b5875a" stroke-width="0.75" fill="none" opacity="0.6"/><rect x="362.02" y="173.35" width="26.98" height="16.78" fill="#c8a07a"/><path d="M369.8 181.5 q7.8 -0.4 15.7 0" stroke="#b5875a" stroke-width="0.75" fill="none" opacity="0.6"/><path d="M367.5 182.2 q5.9 -0.4 11.8 0" stroke="#b5875a" stroke-width="0.75" fill="none" opacity="0.6"/><path d="M368.7 183.8 q8.4 -0.4 16.8 0" stroke="#b5875a" stroke-width="0.75" fill="none" opacity="0.6"/><path d="M364.3 183.2 q7.1 -0.5 14.3 0" stroke="#b5875a" stroke-width="0.75" fill="none" opacity="0.6"/><path d="M368.7 185.7 q6.1 -0.4 12.2 0" stroke="#b5875a" stroke-width="0.75" fill="none" opacity="0.6"/><rect x="0.00" y="192.53" width="53.45" height="16.77" fill="#cda882"/><path d="M14.3 204.4 q7.9 -0.8 15.9 0" stroke="#b5875a" stroke-width="0.75" fill="none" opacity="0.6"/><path d="M10.6 198.8 q6.1 -0.6 12.2 0" stroke="#b5875a" stroke-width="0.75" fill="none" opacity="0.6"/><path d="M16.4 202.4 q8.7 -0.3 17.3 0" stroke="#b5875a" stroke-width="0.75" fill="none" opacity="0.6"/><path d="M21.0 195.9 q4.6 -1.0 9.2 0" stroke="#b5875a" stroke-width="0.75" fill="none" opacity="0.6"/><path d="M21.2 205.4 q6.2 -0.3 12.5 0" stroke="#b5875a" stroke-width="0.75" fill="none" opacity="0.6"/><rect x="56.25" y="192.53" width="52.65" height="16.77" fill="#c9a47e"/><path d="M77.6 206.2 q7.3 -0.4 14.6 0" stroke="#b5875a" stroke-width="0.75" fill="none" opacity="0.6"/><path d="M83.4 201.4 q4.4 -0.7 8.8 0" stroke="#b5875a" stroke-width="0.75" fill="none" opacity="0.6"/><path d="M87.5 202.3 q6.1 -0.3 12.3 0" stroke="#b5875a" stroke-width="0.75" fill="none" opacity="0.6"/><path d="M80.1 206.2 q8.3 -0.5 16.6 0" stroke="#b5875a" stroke-width="0.75" fill="none" opacity="0.6"/><path d="M62.2 200.6 q5.4 -0.8 10.8 0" stroke="#b5875a" stroke-width="0.75" fill="none" opacity="0.6"/><rect x="111.70" y="192.53" width="52.65" height="16.77" fill="#d3b18f"/><path d="M137.7 197.5 q4.3 -1.0 8.5 0" stroke="#b5875a" stroke-width="0.75" fill="none" opacity="0.6"/><path d="M137.0 204.7 q7.6 -0.4 15.3 0" stroke="#b5875a" stroke-width="0.75" fill="none" opacity="0.6"/><path d="M134.2 203.2 q6.3 -1.1 12.6 0" stroke="#b5875a" stroke-width="0.75" fill="none" opacity="0.6"/><path d="M122.0 205.9 q7.6 -0.3 15.2 0" stroke="#b5875a" stroke-width="0.75" fill="none" opacity="0.6"/><path d="M114.2 202.5 q8.1 -0.4 16.2 0" stroke="#b5875a" stroke-width="0.75" fill="none" opacity="0.6"/><rect x="167.15" y="192.53" width="52.65" height="16.77" fill="#ceaa86"/><path d="M179.4 202.0 q8.8 -1.1 17.6 0" stroke="#b5875a" stroke-width="0.75" fill="none" opacity="0.6"/><path d="M189.0 198.9 q8.7 -1.0 17.5 0" stroke="#b5875a" stroke-width="0.75" fill="none" opacity="0.6"/><path d="M184.5 197.3 q8.8 -0.4 17.7 0" stroke="#b5875a" stroke-width="0.75" fill="none" opacity="0.6"/><path d="M200.3 197.3 q8.0 -0.7 16.0 0" stroke="#b5875a" stroke-width="0.75" fill="none" opacity="0.6"/><path d="M194.6 200.4 q5.4 -1.0 10.7 0" stroke="#b5875a" stroke-width="0.75" fill="none" opacity="0.6"/><rect x="222.60" y="192.53" width="52.65" height="16.77" fill="#cba67f"/><path d="M234.1 196.2 q8.9 -0.9 17.7 0" stroke="#b5875a" stroke-width="0.75" fill="none" opacity="0.6"/><path d="M251.6 199.1 q7.0 -1.2 14.1 0" stroke="#b5875a" stroke-width="0.75" fill="none" opacity="0.6"/><path d="M251.7 202.0 q5.5 -0.7 11.1 0" stroke="#b5875a" stroke-width="0.75" fill="none" opacity="0.6"/><path d="M253.6 199.6 q7.4 -0.8 14.8 0" stroke="#b5875a" stroke-width="0.75" fill="none" opacity="0.6"/><path d="M253.9 204.2 q5.4 -0.3 10.8 0" stroke="#b5875a" stroke-width="0.75" fill="none" opacity="0.6"/><rect x="278.05" y="192.53" width="52.65" height="16.77" fill="#ceaa86"/><path d="M288.8 197.2 q8.6 -1.0 17.2 0" stroke="#b5875a" stroke-width="0.75" fill="none" opacity="0.6"/><path d="M305.6 198.6 q4.7 -1.1 9.4 0" stroke="#b5875a" stroke-width="0.75" fill="none" opacity="0.6"/><path d="M312.5 197.1 q8.9 -1.0 17.8 0" stroke="#b5875a" stroke-width="0.75" fill="none" opacity="0.6"/><path d="M297.9 203.9 q6.5 -0.8 13.0 0" stroke="#b5875a" stroke-width="0.75" fill="none" opacity="0.6"/><path d="M297.7 200.7 q5.9 -1.0 11.8 0" stroke="#b5875a" stroke-width="0.75" fill="none" opacity="0.6"/><rect x="333.50" y="192.53" width="52.90" height="16.77" fill="#c8a07a"/><path d="M345.7 196.1 q6.0 -0.9 12.0 0" stroke="#b5875a" stroke-width="0.75" fill="none" opacity="0.6"/><path d="M366.0 201.8 q4.0 -0.6 8.1 0" stroke="#b5875a" stroke-width="0.75" fill="none" opacity="0.6"/><path d="M353.3 201.3 q5.8 -0.4 11.6 0" stroke="#b5875a" stroke-width="0.75" fill="none" opacity="0.6"/><path d="M348.6 201.1 q5.3 -1.0 10.6 0" stroke="#b5875a" stroke-width="0.75" fill="none" opacity="0.6"/><path d="M346.1 201.0 q5.0 -0.5 10.0 0" stroke="#b5875a" stroke-width="0.75" fill="none" opacity="0.6"/><rect x="0.00" y="211.70" width="26.52" height="16.77" fill="#c9a37c"/><path d="M3.2 222.3 q5.8 -0.8 11.6 0" stroke="#b5875a" stroke-width="0.75" fill="none" opacity="0.6"/><path d="M4.6 220.3 q4.7 -0.3 9.5 0" stroke="#b5875a" stroke-width="0.75" fill="none" opacity="0.6"/><path d="M8.5 218.7 q4.5 -0.9 9.1 0" stroke="#b5875a" stroke-width="0.75" fill="none" opacity="0.6"/><path d="M7.1 216.4 q7.0 -0.6 14.0 0" stroke="#b5875a" stroke-width="0.75" fill="none" opacity="0.6"/><path d="M5.4 214.9 q4.2 -1.2 8.3 0" stroke="#b5875a" stroke-width="0.75" fill="none" opacity="0.6"/><rect x="29.32" y="211.70" width="52.65" height="16.77" fill="#d3b18f"/><path d="M50.5 217.0 q8.6 -0.6 17.3 0" stroke="#b5875a" stroke-width="0.75" fill="none" opacity="0.6"/><path d="M34.5 219.5 q7.0 -0.8 13.9 0" stroke="#b5875a" stroke-width="0.75" fill="none" opacity="0.6"/><path d="M35.6 223.8 q5.7 -1.2 11.4 0" stroke="#b5875a" stroke-width="0.75" fill="none" opacity="0.6"/><path d="M43.7 215.0 q4.2 -0.6 8.3 0" stroke="#b5875a" stroke-width="0.75" fill="none" opacity="0.6"/><path d="M54.4 219.9 q8.2 -1.1 16.5 0" stroke="#b5875a" stroke-width="0.75" fill="none" opacity="0.6"/><rect x="84.78" y="211.70" width="52.65" height="16.77" fill="#c9a47e"/><path d="M116.9 222.3 q4.4 -0.6 8.9 0" stroke="#b5875a" stroke-width="0.75" fill="none" opacity="0.6"/><path d="M94.4 215.7 q8.6 -0.8 17.2 0" stroke="#b5875a" stroke-width="0.75" fill="none" opacity="0.6"/><path d="M92.7 223.9 q5.9 -0.5 11.7 0" stroke="#b5875a" stroke-width="0.75" fill="none" opacity="0.6"/><path d="M110.3 216.6 q8.7 -1.1 17.4 0" stroke="#b5875a" stroke-width="0.75" fill="none" opacity="0.6"/><path d="M88.7 220.7 q4.1 -1.1 8.3 0" stroke="#b5875a" stroke-width="0.75" fill="none" opacity="0.6"/><rect x="140.22" y="211.70" width="52.65" height="16.77" fill="#ceaa86"/><path d="M167.9 222.3 q7.2 -1.2 14.5 0" stroke="#b5875a" stroke-width="0.75" fill="none" opacity="0.6"/><path d="M144.0 216.3 q7.8 -1.1 15.5 0" stroke="#b5875a" stroke-width="0.75" fill="none" opacity="0.6"/><path d="M164.3 217.9 q7.0 -1.0 13.9 0" stroke="#b5875a" stroke-width="0.75" fill="none" opacity="0.6"/><path d="M145.7 218.2 q5.3 -0.4 10.6 0" stroke="#b5875a" stroke-width="0.75" fill="none" opacity="0.6"/><path d="M157.9 216.5 q5.2 -0.4 10.4 0" stroke="#b5875a" stroke-width="0.75" fill="none" opacity="0.6"/><rect x="195.68" y="211.70" width="52.65" height="16.77" fill="#cda882"/><path d="M213.0 224.5 q8.0 -0.4 16.0 0" stroke="#b5875a" stroke-width="0.75" fill="none" opacity="0.6"/><path d="M224.9 215.5 q7.1 -0.6 14.2 0" stroke="#b5875a" stroke-width="0.75" fill="none" opacity="0.6"/><path d="M222.1 223.1 q8.8 -1.1 17.6 0" stroke="#b5875a" stroke-width="0.75" fill="none" opacity="0.6"/><path d="M210.2 214.9 q4.4 -1.2 8.8 0" stroke="#b5875a" stroke-width="0.75" fill="none" opacity="0.6"/><path d="M208.2 217.2 q4.6 -0.6 9.2 0" stroke="#b5875a" stroke-width="0.75" fill="none" opacity="0.6"/><rect x="251.12" y="211.70" width="52.65" height="16.77" fill="#cba67f"/><path d="M260.4 215.3 q7.6 -0.8 15.1 0" stroke="#b5875a" stroke-width="0.75" fill="none" opacity="0.6"/><path d="M257.8 224.1 q5.3 -0.7 10.7 0" stroke="#b5875a" stroke-width="0.75" fill="none" opacity="0.6"/><path d="M258.2 217.6 q8.2 -0.6 16.4 0" stroke="#b5875a" stroke-width="0.75" fill="none" opacity="0.6"/><path d="M258.6 220.0 q5.6 -1.1 11.2 0" stroke="#b5875a" stroke-width="0.75" fill="none" opacity="0.6"/><path d="M256.9 225.2 q4.3 -1.1 8.6 0" stroke="#b5875a" stroke-width="0.75" fill="none" opacity="0.6"/><rect x="306.58" y="211.70" width="52.65" height="16.77" fill="#c8a07a"/><path d="M326.9 223.7 q4.6 -1.0 9.2 0" stroke="#b5875a" stroke-width="0.75" fill="none" opacity="0.6"/><path d="M340.3 219.4 q5.3 -0.5 10.6 0" stroke="#b5875a" stroke-width="0.75" fill="none" opacity="0.6"/><path d="M316.4 218.9 q6.1 -0.4 12.2 0" stroke="#b5875a" stroke-width="0.75" fill="none" opacity="0.6"/><path d="M335.8 225.2 q4.7 -0.9 9.4 0" stroke="#b5875a" stroke-width="0.75" fill="none" opacity="0.6"/><path d="M323.0 220.2 q6.6 -0.7 13.1 0" stroke="#b5875a" stroke-width="0.75" fill="none" opacity="0.6"/><rect x="362.02" y="211.70" width="26.98" height="16.77" fill="#c6a078"/><path d="M366.0 218.6 q4.2 -0.7 8.4 0" stroke="#b5875a" stroke-width="0.75" fill="none" opacity="0.6"/><path d="M366.0 216.6 q8.2 -0.8 16.4 0" stroke="#b5875a" stroke-width="0.75" fill="none" opacity="0.6"/><path d="M365.6 216.6 q7.0 -1.0 14.0 0" stroke="#b5875a" stroke-width="0.75" fill="none" opacity="0.6"/><path d="M370.2 222.6 q7.8 -0.5 15.6 0" stroke="#b5875a" stroke-width="0.75" fill="none" opacity="0.6"/><path d="M365.0 221.9 q7.1 -0.5 14.3 0" stroke="#b5875a" stroke-width="0.75" fill="none" opacity="0.6"/><rect x="0.00" y="230.87" width="53.45" height="16.78" fill="#ceaa86"/><path d="M8.8 234.6 q7.7 -0.7 15.3 0" stroke="#b5875a" stroke-width="0.75" fill="none" opacity="0.6"/><path d="M26.1 234.5 q8.1 -0.6 16.1 0" stroke="#b5875a" stroke-width="0.75" fill="none" opacity="0.6"/><path d="M30.2 243.2 q6.5 -0.3 12.9 0" stroke="#b5875a" stroke-width="0.75" fill="none" opacity="0.6"/><path d="M32.4 239.0 q8.4 -0.5 16.7 0" stroke="#b5875a" stroke-width="0.75" fill="none" opacity="0.6"/><path d="M8.2 242.8 q5.8 -0.4 11.7 0" stroke="#b5875a" stroke-width="0.75" fill="none" opacity="0.6"/><rect x="56.25" y="230.87" width="52.65" height="16.78" fill="#cba67f"/><path d="M77.0 243.1 q5.8 -1.1 11.6 0" stroke="#b5875a" stroke-width="0.75" fill="none" opacity="0.6"/><path d="M89.9 234.6 q5.8 -0.5 11.6 0" stroke="#b5875a" stroke-width="0.75" fill="none" opacity="0.6"/><path d="M85.4 243.7 q7.9 -1.1 15.8 0" stroke="#b5875a" stroke-width="0.75" fill="none" opacity="0.6"/><path d="M77.1 243.6 q5.5 -0.4 10.9 0" stroke="#b5875a" stroke-width="0.75" fill="none" opacity="0.6"/><path d="M82.1 238.7 q4.1 -1.0 8.3 0" stroke="#b5875a" stroke-width="0.75" fill="none" opacity="0.6"/><rect x="111.70" y="230.87" width="52.65" height="16.78" fill="#d1ad8a"/><path d="M114.4 244.3 q5.1 -0.5 10.2 0" stroke="#b5875a" stroke-width="0.75" fill="none" opacity="0.6"/><path d="M117.1 236.6 q8.1 -0.3 16.2 0" stroke="#b5875a" stroke-width="0.75" fill="none" opacity="0.6"/><path d="M116.8 241.4 q5.0 -0.3 10.0 0" stroke="#b5875a" stroke-width="0.75" fill="none" opacity="0.6"/><path d="M133.3 240.1 q6.6 -0.9 13.2 0" stroke="#b5875a" stroke-width="0.75" fill="none" opacity="0.6"/><path d="M117.1 243.2 q7.6 -0.3 15.2 0" stroke="#b5875a" stroke-width="0.75" fill="none" opacity="0.6"/><rect x="167.15" y="230.87" width="52.65" height="16.78" fill="#c9a37c"/><path d="M184.3 240.2 q7.8 -0.4 15.6 0" stroke="#b5875a" stroke-width="0.75" fill="none" opacity="0.6"/><path d="M173.1 243.4 q6.7 -0.5 13.4 0" stroke="#b5875a" stroke-width="0.75" fill="none" opacity="0.6"/><path d="M176.6 241.1 q6.3 -0.7 12.6 0" stroke="#b5875a" stroke-width="0.75" fill="none" opacity="0.6"/><path d="M200.1 234.1 q7.2 -0.9 14.3 0" stroke="#b5875a" stroke-width="0.75" fill="none" opacity="0.6"/><path d="M188.6 240.4 q4.2 -1.2 8.4 0" stroke="#b5875a" stroke-width="0.75" fill="none" opacity="0.6"/><rect x="222.60" y="230.87" width="52.65" height="16.78" fill="#cda882"/><path d="M250.0 237.5 q5.2 -0.6 10.4 0" stroke="#b5875a" stroke-width="0.75" fill="none" opacity="0.6"/><path d="M238.8 244.4 q8.0 -1.1 16.0 0" stroke="#b5875a" stroke-width="0.75" fill="none" opacity="0.6"/><path d="M251.2 243.0 q4.3 -0.8 8.5 0" stroke="#b5875a" stroke-width="0.75" fill="none" opacity="0.6"/><path d="M255.9 243.9 q5.2 -0.7 10.5 0" stroke="#b5875a" stroke-width="0.75" fill="none" opacity="0.6"/><path d="M245.3 237.8 q6.7 -0.4 13.3 0" stroke="#b5875a" stroke-width="0.75" fill="none" opacity="0.6"/><rect x="278.05" y="230.87" width="52.65" height="16.78" fill="#c9a47e"/><path d="M286.6 241.1 q5.1 -0.7 10.3 0" stroke="#b5875a" stroke-width="0.75" fill="none" opacity="0.6"/><path d="M293.0 244.6 q6.3 -0.3 12.5 0" stroke="#b5875a" stroke-width="0.75" fill="none" opacity="0.6"/><path d="M312.1 244.4 q4.2 -1.1 8.4 0" stroke="#b5875a" stroke-width="0.75" fill="none" opacity="0.6"/><path d="M300.3 243.8 q7.1 -0.9 14.2 0" stroke="#b5875a" stroke-width="0.75" fill="none" opacity="0.6"/><path d="M306.4 234.3 q4.5 -0.4 9.0 0" stroke="#b5875a" stroke-width="0.75" fill="none" opacity="0.6"/><rect x="333.50" y="230.87" width="52.90" height="16.78" fill="#cda882"/><path d="M349.8 244.1 q5.4 -0.6 10.9 0" stroke="#b5875a" stroke-width="0.75" fill="none" opacity="0.6"/><path d="M356.8 235.2 q7.0 -1.2 13.9 0" stroke="#b5875a" stroke-width="0.75" fill="none" opacity="0.6"/><path d="M352.4 236.8 q6.3 -0.8 12.7 0" stroke="#b5875a" stroke-width="0.75" fill="none" opacity="0.6"/><path d="M340.4 235.2 q4.7 -0.6 9.3 0" stroke="#b5875a" stroke-width="0.75" fill="none" opacity="0.6"/><path d="M348.9 237.0 q5.2 -0.4 10.4 0" stroke="#b5875a" stroke-width="0.75" fill="none" opacity="0.6"/><rect x="0.00" y="250.05" width="26.52" height="16.77" fill="#c6a078"/><path d="M3.9 257.9 q7.5 -0.5 14.9 0" stroke="#b5875a" stroke-width="0.75" fill="none" opacity="0.6"/><path d="M4.5 259.0 q5.8 -1.1 11.7 0" stroke="#b5875a" stroke-width="0.75" fill="none" opacity="0.6"/><path d="M4.0 258.2 q8.1 -0.3 16.2 0" stroke="#b5875a" stroke-width="0.75" fill="none" opacity="0.6"/><path d="M4.2 255.1 q6.7 -1.2 13.5 0" stroke="#b5875a" stroke-width="0.75" fill="none" opacity="0.6"/><path d="M4.6 263.0 q4.8 -1.2 9.6 0" stroke="#b5875a" stroke-width="0.75" fill="none" opacity="0.6"/><rect x="29.32" y="250.05" width="52.65" height="16.77" fill="#cba67f"/><path d="M49.5 258.3 q5.4 -1.2 10.8 0" stroke="#b5875a" stroke-width="0.75" fill="none" opacity="0.6"/><path d="M41.0 261.4 q4.8 -0.4 9.6 0" stroke="#b5875a" stroke-width="0.75" fill="none" opacity="0.6"/><path d="M59.8 257.8 q4.3 -0.6 8.6 0" stroke="#b5875a" stroke-width="0.75" fill="none" opacity="0.6"/><path d="M45.7 261.0 q4.5 -0.5 9.1 0" stroke="#b5875a" stroke-width="0.75" fill="none" opacity="0.6"/><path d="M62.6 261.0 q4.8 -0.6 9.5 0" stroke="#b5875a" stroke-width="0.75" fill="none" opacity="0.6"/><rect x="84.78" y="250.05" width="52.65" height="16.77" fill="#cba67f"/><path d="M91.4 255.2 q7.1 -0.5 14.1 0" stroke="#b5875a" stroke-width="0.75" fill="none" opacity="0.6"/><path d="M114.2 254.1 q8.3 -1.1 16.6 0" stroke="#b5875a" stroke-width="0.75" fill="none" opacity="0.6"/><path d="M119.3 255.9 q7.2 -0.9 14.3 0" stroke="#b5875a" stroke-width="0.75" fill="none" opacity="0.6"/><path d="M109.7 257.5 q4.5 -0.7 9.0 0" stroke="#b5875a" stroke-width="0.75" fill="none" opacity="0.6"/><path d="M104.7 254.3 q6.0 -1.2 12.0 0" stroke="#b5875a" stroke-width="0.75" fill="none" opacity="0.6"/><rect x="140.22" y="250.05" width="52.65" height="16.77" fill="#d1ad8a"/><path d="M155.9 261.5 q8.4 -0.8 16.7 0" stroke="#b5875a" stroke-width="0.75" fill="none" opacity="0.6"/><path d="M154.6 257.9 q6.3 -1.0 12.6 0" stroke="#b5875a" stroke-width="0.75" fill="none" opacity="0.6"/><path d="M151.8 257.3 q6.8 -0.6 13.6 0" stroke="#b5875a" stroke-width="0.75" fill="none" opacity="0.6"/><path d="M152.7 261.5 q8.2 -0.7 16.5 0" stroke="#b5875a" stroke-width="0.75" fill="none" opacity="0.6"/><path d="M156.7 255.0 q5.5 -0.4 11.0 0" stroke="#b5875a" stroke-width="0.75" fill="none" opacity="0.6"/><rect x="195.68" y="250.05" width="52.65" height="16.77" fill="#c9a47e"/><path d="M216.7 254.0 q8.6 -0.6 17.2 0" stroke="#b5875a" stroke-width="0.75" fill="none" opacity="0.6"/><path d="M225.2 262.1 q8.8 -0.5 17.6 0" stroke="#b5875a" stroke-width="0.75" fill="none" opacity="0.6"/><path d="M211.6 262.9 q4.1 -0.3 8.1 0" stroke="#b5875a" stroke-width="0.75" fill="none" opacity="0.6"/><path d="M216.1 258.4 q8.6 -1.0 17.2 0" stroke="#b5875a" stroke-width="0.75" fill="none" opacity="0.6"/><path d="M215.3 263.8 q6.6 -0.8 13.2 0" stroke="#b5875a" stroke-width="0.75" fill="none" opacity="0.6"/><rect x="251.12" y="250.05" width="52.65" height="16.77" fill="#c9a47e"/><path d="M265.8 256.9 q7.0 -0.6 13.9 0" stroke="#b5875a" stroke-width="0.75" fill="none" opacity="0.6"/><path d="M284.1 260.3 q6.6 -0.4 13.3 0" stroke="#b5875a" stroke-width="0.75" fill="none" opacity="0.6"/><path d="M265.3 257.4 q6.8 -0.8 13.6 0" stroke="#b5875a" stroke-width="0.75" fill="none" opacity="0.6"/><path d="M281.9 263.4 q6.4 -0.7 12.9 0" stroke="#b5875a" stroke-width="0.75" fill="none" opacity="0.6"/><path d="M273.5 263.8 q5.7 -0.8 11.4 0" stroke="#b5875a" stroke-width="0.75" fill="none" opacity="0.6"/><rect x="306.58" y="250.05" width="52.65" height="16.77" fill="#c9a37c"/><path d="M314.1 256.5 q8.9 -1.0 17.8 0" stroke="#b5875a" stroke-width="0.75" fill="none" opacity="0.6"/><path d="M325.3 254.2 q8.5 -0.9 16.9 0" stroke="#b5875a" stroke-width="0.75" fill="none" opacity="0.6"/><path d="M335.4 263.7 q8.4 -0.7 16.9 0" stroke="#b5875a" stroke-width="0.75" fill="none" opacity="0.6"/><path d="M313.7 256.2 q6.6 -0.8 13.1 0" stroke="#b5875a" stroke-width="0.75" fill="none" opacity="0.6"/><path d="M314.7 255.0 q7.2 -0.8 14.3 0" stroke="#b5875a" stroke-width="0.75" fill="none" opacity="0.6"/><rect x="362.02" y="250.05" width="26.98" height="16.77" fill="#cba67f"/><path d="M368.0 259.9 q7.6 -0.9 15.2 0" stroke="#b5875a" stroke-width="0.75" fill="none" opacity="0.6"/><path d="M364.1 253.1 q7.6 -0.8 15.1 0" stroke="#b5875a" stroke-width="0.75" fill="none" opacity="0.6"/><path d="M370.4 257.3 q4.5 -0.3 9.0 0" stroke="#b5875a" stroke-width="0.75" fill="none" opacity="0.6"/><path d="M364.2 254.9 q7.8 -0.8 15.7 0" stroke="#b5875a" stroke-width="0.75" fill="none" opacity="0.6"/><path d="M370.1 262.7 q6.6 -0.4 13.1 0" stroke="#b5875a" stroke-width="0.75" fill="none" opacity="0.6"/><rect x="0.00" y="269.22" width="53.45" height="16.78" fill="#c8a07a"/><path d="M15.8 273.5 q4.8 -1.0 9.6 0" stroke="#b5875a" stroke-width="0.75" fill="none" opacity="0.6"/><path d="M5.6 273.3 q4.9 -0.8 9.7 0" stroke="#b5875a" stroke-width="0.75" fill="none" opacity="0.6"/><path d="M29.5 278.8 q8.0 -0.4 16.1 0" stroke="#b5875a" stroke-width="0.75" fill="none" opacity="0.6"/><path d="M2.4 280.5 q5.6 -0.9 11.2 0" stroke="#b5875a" stroke-width="0.75" fill="none" opacity="0.6"/><path d="M13.8 274.1 q5.3 -0.4 10.7 0" stroke="#b5875a" stroke-width="0.75" fill="none" opacity="0.6"/><rect x="56.25" y="269.22" width="52.65" height="16.78" fill="#c9a37c"/><path d="M69.6 277.1 q5.9 -0.3 11.9 0" stroke="#b5875a" stroke-width="0.75" fill="none" opacity="0.6"/><path d="M87.3 278.5 q8.8 -0.7 17.6 0" stroke="#b5875a" stroke-width="0.75" fill="none" opacity="0.6"/><path d="M78.5 274.9 q4.2 -1.1 8.4 0" stroke="#b5875a" stroke-width="0.75" fill="none" opacity="0.6"/><path d="M86.2 275.6 q8.5 -1.0 17.0 0" stroke="#b5875a" stroke-width="0.75" fill="none" opacity="0.6"/><path d="M68.2 278.7 q8.8 -0.7 17.6 0" stroke="#b5875a" stroke-width="0.75" fill="none" opacity="0.6"/><rect x="111.70" y="269.22" width="52.65" height="16.78" fill="#c9a37c"/><path d="M121.6 276.4 q7.6 -0.5 15.2 0" stroke="#b5875a" stroke-width="0.75" fill="none" opacity="0.6"/><path d="M123.8 281.7 q6.4 -1.0 12.8 0" stroke="#b5875a" stroke-width="0.75" fill="none" opacity="0.6"/><path d="M121.6 274.1 q5.8 -0.5 11.6 0" stroke="#b5875a" stroke-width="0.75" fill="none" opacity="0.6"/><path d="M145.4 275.4 q6.8 -0.4 13.6 0" stroke="#b5875a" stroke-width="0.75" fill="none" opacity="0.6"/><path d="M131.1 276.4 q6.0 -0.4 12.0 0" stroke="#b5875a" stroke-width="0.75" fill="none" opacity="0.6"/><rect x="167.15" y="269.22" width="52.65" height="16.78" fill="#c9a37c"/><path d="M182.9 282.1 q6.8 -0.6 13.5 0" stroke="#b5875a" stroke-width="0.75" fill="none" opacity="0.6"/><path d="M184.4 275.9 q6.2 -0.6 12.4 0" stroke="#b5875a" stroke-width="0.75" fill="none" opacity="0.6"/><path d="M170.0 280.9 q5.2 -0.4 10.4 0" stroke="#b5875a" stroke-width="0.75" fill="none" opacity="0.6"/><path d="M175.6 278.1 q7.9 -0.8 15.9 0" stroke="#b5875a" stroke-width="0.75" fill="none" opacity="0.6"/><path d="M184.4 280.8 q5.2 -0.6 10.4 0" stroke="#b5875a" stroke-width="0.75" fill="none" opacity="0.6"/><rect x="222.60" y="269.22" width="52.65" height="16.78" fill="#c8a07a"/><path d="M248.2 276.3 q8.8 -0.5 17.6 0" stroke="#b5875a" stroke-width="0.75" fill="none" opacity="0.6"/><path d="M255.6 277.7 q5.1 -0.7 10.3 0" stroke="#b5875a" stroke-width="0.75" fill="none" opacity="0.6"/><path d="M228.9 279.8 q5.3 -1.1 10.6 0" stroke="#b5875a" stroke-width="0.75" fill="none" opacity="0.6"/><path d="M243.8 276.2 q5.2 -0.8 10.5 0" stroke="#b5875a" stroke-width="0.75" fill="none" opacity="0.6"/><path d="M231.5 281.6 q4.6 -0.8 9.2 0" stroke="#b5875a" stroke-width="0.75" fill="none" opacity="0.6"/><rect x="278.05" y="269.22" width="52.65" height="16.78" fill="#c6a078"/><path d="M307.9 280.2 q7.8 -0.3 15.6 0" stroke="#b5875a" stroke-width="0.75" fill="none" opacity="0.6"/><path d="M303.5 273.8 q4.1 -0.9 8.2 0" stroke="#b5875a" stroke-width="0.75" fill="none" opacity="0.6"/><path d="M302.7 280.6 q5.2 -0.5 10.3 0" stroke="#b5875a" stroke-width="0.75" fill="none" opacity="0.6"/><path d="M309.2 273.0 q8.6 -1.0 17.1 0" stroke="#b5875a" stroke-width="0.75" fill="none" opacity="0.6"/><path d="M304.8 274.3 q7.6 -0.4 15.2 0" stroke="#b5875a" stroke-width="0.75" fill="none" opacity="0.6"/><rect x="333.50" y="269.22" width="52.90" height="16.78" fill="#ceaa86"/><path d="M339.6 279.9 q5.4 -0.7 10.8 0" stroke="#b5875a" stroke-width="0.75" fill="none" opacity="0.6"/><path d="M365.4 280.6 q8.4 -1.1 16.8 0" stroke="#b5875a" stroke-width="0.75" fill="none" opacity="0.6"/><path d="M339.8 275.2 q4.1 -0.9 8.3 0" stroke="#b5875a" stroke-width="0.75" fill="none" opacity="0.6"/><path d="M357.3 276.0 q6.1 -0.9 12.1 0" stroke="#b5875a" stroke-width="0.75" fill="none" opacity="0.6"/><path d="M358.5 274.9 q8.2 -0.6 16.5 0" stroke="#b5875a" stroke-width="0.75" fill="none" opacity="0.6"/><rect x="0.00" y="288.40" width="26.52" height="16.77" fill="#c9a37c"/><path d="M3.2 292.6 q8.6 -1.0 17.1 0" stroke="#b5875a" stroke-width="0.75" fill="none" opacity="0.6"/><path d="M6.6 291.8 q4.2 -0.4 8.4 0" stroke="#b5875a" stroke-width="0.75" fill="none" opacity="0.6"/><path d="M3.3 294.7 q5.9 -0.3 11.8 0" stroke="#b5875a" stroke-width="0.75" fill="none" opacity="0.6"/><path d="M4.0 298.3 q4.9 -1.1 9.8 0" stroke="#b5875a" stroke-width="0.75" fill="none" opacity="0.6"/><path d="M5.7 299.1 q5.3 -0.7 10.5 0" stroke="#b5875a" stroke-width="0.75" fill="none" opacity="0.6"/><rect x="29.32" y="288.40" width="52.65" height="16.77" fill="#cba67f"/><path d="M61.9 292.6 q7.8 -0.9 15.6 0" stroke="#b5875a" stroke-width="0.75" fill="none" opacity="0.6"/><path d="M60.7 300.8 q6.9 -0.9 13.9 0" stroke="#b5875a" stroke-width="0.75" fill="none" opacity="0.6"/><path d="M63.1 298.7 q4.2 -0.6 8.4 0" stroke="#b5875a" stroke-width="0.75" fill="none" opacity="0.6"/><path d="M56.7 295.1 q8.6 -0.7 17.1 0" stroke="#b5875a" stroke-width="0.75" fill="none" opacity="0.6"/><path d="M55.6 302.2 q7.1 -0.5 14.2 0" stroke="#b5875a" stroke-width="0.75" fill="none" opacity="0.6"/><rect x="84.78" y="288.40" width="52.65" height="16.77" fill="#c6a078"/><path d="M89.7 301.6 q6.1 -1.1 12.2 0" stroke="#b5875a" stroke-width="0.75" fill="none" opacity="0.6"/><path d="M109.4 299.4 q8.1 -0.9 16.3 0" stroke="#b5875a" stroke-width="0.75" fill="none" opacity="0.6"/><path d="M101.6 292.0 q7.5 -0.7 15.0 0" stroke="#b5875a" stroke-width="0.75" fill="none" opacity="0.6"/><path d="M103.5 301.4 q4.6 -1.0 9.3 0" stroke="#b5875a" stroke-width="0.75" fill="none" opacity="0.6"/><path d="M88.2 299.0 q8.0 -0.5 16.1 0" stroke="#b5875a" stroke-width="0.75" fill="none" opacity="0.6"/><rect x="140.22" y="288.40" width="52.65" height="16.77" fill="#c6a078"/><path d="M147.6 299.8 q5.2 -0.5 10.4 0" stroke="#b5875a" stroke-width="0.75" fill="none" opacity="0.6"/><path d="M173.7 293.2 q5.7 -0.4 11.5 0" stroke="#b5875a" stroke-width="0.75" fill="none" opacity="0.6"/><path d="M163.0 292.9 q7.4 -0.7 14.9 0" stroke="#b5875a" stroke-width="0.75" fill="none" opacity="0.6"/><path d="M158.0 299.0 q4.0 -0.9 8.1 0" stroke="#b5875a" stroke-width="0.75" fill="none" opacity="0.6"/><path d="M146.6 298.3 q7.5 -0.4 15.0 0" stroke="#b5875a" stroke-width="0.75" fill="none" opacity="0.6"/><rect x="195.68" y="288.40" width="52.65" height="16.77" fill="#d1ad8a"/><path d="M216.9 294.0 q7.1 -0.4 14.3 0" stroke="#b5875a" stroke-width="0.75" fill="none" opacity="0.6"/><path d="M211.5 301.5 q7.4 -0.4 14.8 0" stroke="#b5875a" stroke-width="0.75" fill="none" opacity="0.6"/><path d="M229.6 300.4 q6.0 -0.5 12.1 0" stroke="#b5875a" stroke-width="0.75" fill="none" opacity="0.6"/><path d="M220.2 291.5 q6.4 -0.3 12.9 0" stroke="#b5875a" stroke-width="0.75" fill="none" opacity="0.6"/><path d="M226.9 294.7 q4.6 -0.6 9.1 0" stroke="#b5875a" stroke-width="0.75" fill="none" opacity="0.6"/><rect x="251.12" y="288.40" width="52.65" height="16.77" fill="#c9a37c"/><path d="M258.4 296.2 q6.8 -0.6 13.7 0" stroke="#b5875a" stroke-width="0.75" fill="none" opacity="0.6"/><path d="M271.3 291.9 q6.3 -1.2 12.7 0" stroke="#b5875a" stroke-width="0.75" fill="none" opacity="0.6"/><path d="M269.0 299.5 q5.7 -1.0 11.3 0" stroke="#b5875a" stroke-width="0.75" fill="none" opacity="0.6"/><path d="M261.8 298.4 q8.8 -0.7 17.6 0" stroke="#b5875a" stroke-width="0.75" fill="none" opacity="0.6"/><path d="M278.7 294.9 q5.8 -0.4 11.6 0" stroke="#b5875a" stroke-width="0.75" fill="none" opacity="0.6"/><rect x="306.58" y="288.40" width="52.65" height="16.77" fill="#ceaa86"/><path d="M329.1 301.5 q7.3 -0.5 14.5 0" stroke="#b5875a" stroke-width="0.75" fill="none" opacity="0.6"/><path d="M316.6 292.9 q4.1 -1.0 8.3 0" stroke="#b5875a" stroke-width="0.75" fill="none" opacity="0.6"/><path d="M336.0 294.6 q4.9 -0.9 9.9 0" stroke="#b5875a" stroke-width="0.75" fill="none" opacity="0.6"/><path d="M336.2 301.4 q4.8 -1.0 9.7 0" stroke="#b5875a" stroke-width="0.75" fill="none" opacity="0.6"/><path d="M335.7 299.4 q5.6 -0.5 11.3 0" stroke="#b5875a" stroke-width="0.75" fill="none" opacity="0.6"/><rect x="362.02" y="288.40" width="26.98" height="16.77" fill="#cba67f"/><path d="M366.3 295.4 q6.8 -0.6 13.5 0" stroke="#b5875a" stroke-width="0.75" fill="none" opacity="0.6"/><path d="M369.8 294.0 q4.2 -0.8 8.4 0" stroke="#b5875a" stroke-width="0.75" fill="none" opacity="0.6"/><path d="M368.4 300.2 q7.5 -1.1 15.1 0" stroke="#b5875a" stroke-width="0.75" fill="none" opacity="0.6"/><path d="M370.6 296.7 q6.5 -0.4 13.0 0" stroke="#b5875a" stroke-width="0.75" fill="none" opacity="0.6"/><path d="M366.1 297.7 q4.4 -0.9 8.8 0" stroke="#b5875a" stroke-width="0.75" fill="none" opacity="0.6"/><rect x="0.00" y="307.57" width="53.45" height="16.77" fill="#d1ad8a"/><path d="M6.6 317.4 q6.0 -1.2 12.0 0" stroke="#b5875a" stroke-width="0.75" fill="none" opacity="0.6"/><path d="M30.5 315.7 q5.1 -0.6 10.2 0" stroke="#b5875a" stroke-width="0.75" fill="none" opacity="0.6"/><path d="M3.1 317.2 q8.2 -0.8 16.3 0" stroke="#b5875a" stroke-width="0.75" fill="none" opacity="0.6"/><path d="M6.8 311.4 q4.3 -0.9 8.6 0" stroke="#b5875a" stroke-width="0.75" fill="none" opacity="0.6"/><path d="M31.8 311.3 q4.0 -1.2 8.1 0" stroke="#b5875a" stroke-width="0.75" fill="none" opacity="0.6"/><rect x="56.25" y="307.57" width="52.65" height="16.77" fill="#d1ad8a"/><path d="M87.8 312.3 q5.5 -0.7 11.0 0" stroke="#b5875a" stroke-width="0.75" fill="none" opacity="0.6"/><path d="M76.6 314.3 q5.0 -0.4 10.0 0" stroke="#b5875a" stroke-width="0.75" fill="none" opacity="0.6"/><path d="M68.8 315.5 q8.9 -1.1 17.7 0" stroke="#b5875a" stroke-width="0.75" fill="none" opacity="0.6"/><path d="M86.5 321.1 q8.8 -0.9 17.6 0" stroke="#b5875a" stroke-width="0.75" fill="none" opacity="0.6"/><path d="M84.7 311.2 q7.4 -0.8 14.8 0" stroke="#b5875a" stroke-width="0.75" fill="none" opacity="0.6"/><rect x="111.70" y="307.57" width="52.65" height="16.77" fill="#ceaa86"/><path d="M132.1 315.1 q5.8 -0.9 11.7 0" stroke="#b5875a" stroke-width="0.75" fill="none" opacity="0.6"/><path d="M118.2 319.9 q6.7 -0.9 13.3 0" stroke="#b5875a" stroke-width="0.75" fill="none" opacity="0.6"/><path d="M141.4 313.0 q7.7 -0.9 15.4 0" stroke="#b5875a" stroke-width="0.75" fill="none" opacity="0.6"/><path d="M118.5 316.8 q6.8 -1.1 13.5 0" stroke="#b5875a" stroke-width="0.75" fill="none" opacity="0.6"/><path d="M125.5 313.2 q6.2 -0.5 12.4 0" stroke="#b5875a" stroke-width="0.75" fill="none" opacity="0.6"/><rect x="167.15" y="307.57" width="52.65" height="16.77" fill="#c8a07a"/><path d="M175.0 320.2 q6.7 -0.4 13.5 0" stroke="#b5875a" stroke-width="0.75" fill="none" opacity="0.6"/><path d="M197.3 313.3 q4.5 -0.8 8.9 0" stroke="#b5875a" stroke-width="0.75" fill="none" opacity="0.6"/><path d="M177.4 315.8 q6.8 -0.5 13.5 0" stroke="#b5875a" stroke-width="0.75" fill="none" opacity="0.6"/><path d="M187.8 311.8 q6.6 -0.8 13.1 0" stroke="#b5875a" stroke-width="0.75" fill="none" opacity="0.6"/><path d="M171.8 315.0 q4.4 -0.7 8.7 0" stroke="#b5875a" stroke-width="0.75" fill="none" opacity="0.6"/><rect x="222.60" y="307.57" width="52.65" height="16.77" fill="#c6a078"/><path d="M242.6 318.3 q7.8 -0.4 15.6 0" stroke="#b5875a" stroke-width="0.75" fill="none" opacity="0.6"/><path d="M256.9 318.4 q4.5 -1.0 9.0 0" stroke="#b5875a" stroke-width="0.75" fill="none" opacity="0.6"/><path d="M237.4 312.4 q8.8 -0.8 17.6 0" stroke="#b5875a" stroke-width="0.75" fill="none" opacity="0.6"/><path d="M249.9 312.0 q7.9 -0.4 15.8 0" stroke="#b5875a" stroke-width="0.75" fill="none" opacity="0.6"/><path d="M232.3 314.6 q4.1 -0.8 8.2 0" stroke="#b5875a" stroke-width="0.75" fill="none" opacity="0.6"/><rect x="278.05" y="307.57" width="52.65" height="16.77" fill="#c8a07a"/><path d="M295.1 311.9 q4.7 -1.1 9.4 0" stroke="#b5875a" stroke-width="0.75" fill="none" opacity="0.6"/><path d="M282.9 321.2 q5.0 -0.4 10.0 0" stroke="#b5875a" stroke-width="0.75" fill="none" opacity="0.6"/><path d="M303.8 314.4 q5.8 -1.1 11.7 0" stroke="#b5875a" stroke-width="0.75" fill="none" opacity="0.6"/><path d="M306.3 318.5 q4.1 -0.5 8.1 0" stroke="#b5875a" stroke-width="0.75" fill="none" opacity="0.6"/><path d="M287.9 316.1 q6.6 -0.6 13.2 0" stroke="#b5875a" stroke-width="0.75" fill="none" opacity="0.6"/><rect x="333.50" y="307.57" width="52.90" height="16.77" fill="#d3b18f"/><path d="M336.9 317.1 q4.5 -0.8 9.0 0" stroke="#b5875a" stroke-width="0.75" fill="none" opacity="0.6"/><path d="M361.9 311.8 q8.6 -0.9 17.3 0" stroke="#b5875a" stroke-width="0.75" fill="none" opacity="0.6"/><path d="M343.9 312.7 q6.2 -1.1 12.5 0" stroke="#b5875a" stroke-width="0.75" fill="none" opacity="0.6"/><path d="M354.6 311.8 q4.1 -0.4 8.2 0" stroke="#b5875a" stroke-width="0.75" fill="none" opacity="0.6"/><path d="M361.8 312.6 q6.8 -0.6 13.5 0" stroke="#b5875a" stroke-width="0.75" fill="none" opacity="0.6"/><rect x="0.00" y="326.75" width="26.52" height="16.78" fill="#c9a47e"/><path d="M7.5 336.1 q5.3 -1.2 10.5 0" stroke="#b5875a" stroke-width="0.75" fill="none" opacity="0.6"/><path d="M7.0 332.6 q6.2 -0.3 12.4 0" stroke="#b5875a" stroke-width="0.75" fill="none" opacity="0.6"/><path d="M8.5 335.0 q6.4 -0.3 12.8 0" stroke="#b5875a" stroke-width="0.75" fill="none" opacity="0.6"/><path d="M7.5 330.6 q7.1 -0.9 14.2 0" stroke="#b5875a" stroke-width="0.75" fill="none" opacity="0.6"/><path d="M5.9 338.8 q8.8 -0.9 17.7 0" stroke="#b5875a" stroke-width="0.75" fill="none" opacity="0.6"/><rect x="29.32" y="326.75" width="52.65" height="16.78" fill="#d3b18f"/><path d="M44.2 339.2 q7.1 -0.4 14.1 0" stroke="#b5875a" stroke-width="0.75" fill="none" opacity="0.6"/><path d="M42.1 332.1 q8.5 -0.8 16.9 0" stroke="#b5875a" stroke-width="0.75" fill="none" opacity="0.6"/><path d="M32.8 331.6 q5.8 -0.7 11.6 0" stroke="#b5875a" stroke-width="0.75" fill="none" opacity="0.6"/><path d="M50.2 333.9 q5.8 -0.3 11.5 0" stroke="#b5875a" stroke-width="0.75" fill="none" opacity="0.6"/><path d="M50.2 333.3 q4.1 -0.7 8.2 0" stroke="#b5875a" stroke-width="0.75" fill="none" opacity="0.6"/><rect x="84.78" y="326.75" width="52.65" height="16.78" fill="#cda882"/><path d="M107.4 337.6 q4.7 -0.6 9.4 0" stroke="#b5875a" stroke-width="0.75" fill="none" opacity="0.6"/><path d="M88.8 340.4 q5.8 -0.8 11.6 0" stroke="#b5875a" stroke-width="0.75" fill="none" opacity="0.6"/><path d="M105.9 331.2 q7.5 -1.1 15.0 0" stroke="#b5875a" stroke-width="0.75" fill="none" opacity="0.6"/><path d="M116.2 330.8 q5.0 -0.7 10.0 0" stroke="#b5875a" stroke-width="0.75" fill="none" opacity="0.6"/><path d="M105.4 330.8 q8.0 -1.0 15.9 0" stroke="#b5875a" stroke-width="0.75" fill="none" opacity="0.6"/><rect x="140.22" y="326.75" width="52.65" height="16.78" fill="#c8a07a"/><path d="M170.7 339.9 q7.4 -0.6 14.8 0" stroke="#b5875a" stroke-width="0.75" fill="none" opacity="0.6"/><path d="M167.1 337.7 q6.5 -0.9 13.1 0" stroke="#b5875a" stroke-width="0.75" fill="none" opacity="0.6"/><path d="M153.7 335.7 q6.0 -0.4 12.1 0" stroke="#b5875a" stroke-width="0.75" fill="none" opacity="0.6"/><path d="M153.2 333.2 q8.9 -0.7 17.9 0" stroke="#b5875a" stroke-width="0.75" fill="none" opacity="0.6"/><path d="M154.2 332.4 q5.2 -0.6 10.3 0" stroke="#b5875a" stroke-width="0.75" fill="none" opacity="0.6"/><rect x="195.68" y="326.75" width="52.65" height="16.78" fill="#d1ad8a"/><path d="M204.4 339.3 q7.4 -0.7 14.7 0" stroke="#b5875a" stroke-width="0.75" fill="none" opacity="0.6"/><path d="M210.6 338.1 q8.6 -0.8 17.3 0" stroke="#b5875a" stroke-width="0.75" fill="none" opacity="0.6"/><path d="M202.4 337.5 q5.3 -0.8 10.5 0" stroke="#b5875a" stroke-width="0.75" fill="none" opacity="0.6"/><path d="M219.2 340.2 q4.4 -0.5 8.7 0" stroke="#b5875a" stroke-width="0.75" fill="none" opacity="0.6"/><path d="M227.9 336.1 q5.5 -0.6 11.0 0" stroke="#b5875a" stroke-width="0.75" fill="none" opacity="0.6"/><rect x="251.12" y="326.75" width="52.65" height="16.78" fill="#d3b18f"/><path d="M264.8 338.1 q6.1 -1.1 12.3 0" stroke="#b5875a" stroke-width="0.75" fill="none" opacity="0.6"/><path d="M255.3 335.0 q8.5 -0.5 17.0 0" stroke="#b5875a" stroke-width="0.75" fill="none" opacity="0.6"/><path d="M261.5 330.0 q4.8 -0.5 9.6 0" stroke="#b5875a" stroke-width="0.75" fill="none" opacity="0.6"/><path d="M276.1 332.1 q6.0 -0.5 12.0 0" stroke="#b5875a" stroke-width="0.75" fill="none" opacity="0.6"/><path d="M272.8 339.1 q7.2 -0.5 14.5 0" stroke="#b5875a" stroke-width="0.75" fill="none" opacity="0.6"/><rect x="306.58" y="326.75" width="52.65" height="16.78" fill="#cda882"/><path d="M340.0 336.2 q4.4 -1.0 8.8 0" stroke="#b5875a" stroke-width="0.75" fill="none" opacity="0.6"/><path d="M337.2 333.4 q4.7 -0.5 9.4 0" stroke="#b5875a" stroke-width="0.75" fill="none" opacity="0.6"/><path d="M326.1 339.2 q7.2 -1.1 14.4 0" stroke="#b5875a" stroke-width="0.75" fill="none" opacity="0.6"/><path d="M315.5 333.3 q7.7 -0.9 15.5 0" stroke="#b5875a" stroke-width="0.75" fill="none" opacity="0.6"/><path d="M321.8 337.1 q5.7 -0.4 11.4 0" stroke="#b5875a" stroke-width="0.75" fill="none" opacity="0.6"/><rect x="362.02" y="326.75" width="26.98" height="16.78" fill="#c9a47e"/><path d="M369.6 330.7 q7.1 -1.0 14.1 0" stroke="#b5875a" stroke-width="0.75" fill="none" opacity="0.6"/><path d="M370.9 334.1 q8.7 -1.1 17.4 0" stroke="#b5875a" stroke-width="0.75" fill="none" opacity="0.6"/><path d="M364.2 333.2 q7.3 -0.6 14.5 0" stroke="#b5875a" stroke-width="0.75" fill="none" opacity="0.6"/><path d="M366.9 337.4 q8.2 -0.4 16.3 0" stroke="#b5875a" stroke-width="0.75" fill="none" opacity="0.6"/><path d="M364.2 332.0 q6.6 -1.1 13.3 0" stroke="#b5875a" stroke-width="0.75" fill="none" opacity="0.6"/><rect x="0.00" y="345.93" width="53.45" height="16.78" fill="#cba67f"/><path d="M29.2 353.5 q6.7 -0.8 13.4 0" stroke="#b5875a" stroke-width="0.75" fill="none" opacity="0.6"/><path d="M20.6 356.0 q7.0 -0.6 14.0 0" stroke="#b5875a" stroke-width="0.75" fill="none" opacity="0.6"/><path d="M26.8 351.7 q7.6 -1.0 15.1 0" stroke="#b5875a" stroke-width="0.75" fill="none" opacity="0.6"/><path d="M28.0 352.3 q7.9 -1.2 15.7 0" stroke="#b5875a" stroke-width="0.75" fill="none" opacity="0.6"/><path d="M17.2 351.9 q6.6 -1.1 13.2 0" stroke="#b5875a" stroke-width="0.75" fill="none" opacity="0.6"/><rect x="56.25" y="345.93" width="52.65" height="16.78" fill="#d1ad8a"/><path d="M66.5 354.9 q4.5 -1.0 9.0 0" stroke="#b5875a" stroke-width="0.75" fill="none" opacity="0.6"/><path d="M90.1 350.5 q7.1 -0.7 14.3 0" stroke="#b5875a" stroke-width="0.75" fill="none" opacity="0.6"/><path d="M90.2 359.0 q7.1 -0.4 14.2 0" stroke="#b5875a" stroke-width="0.75" fill="none" opacity="0.6"/><path d="M76.0 351.1 q7.9 -0.5 15.8 0" stroke="#b5875a" stroke-width="0.75" fill="none" opacity="0.6"/><path d="M78.0 356.9 q8.5 -1.1 17.0 0" stroke="#b5875a" stroke-width="0.75" fill="none" opacity="0.6"/><rect x="111.70" y="345.93" width="52.65" height="16.78" fill="#d1ad8a"/><path d="M131.0 352.7 q7.5 -0.7 15.1 0" stroke="#b5875a" stroke-width="0.75" fill="none" opacity="0.6"/><path d="M141.8 351.2 q8.6 -1.1 17.1 0" stroke="#b5875a" stroke-width="0.75" fill="none" opacity="0.6"/><path d="M126.4 351.2 q7.9 -0.3 15.9 0" stroke="#b5875a" stroke-width="0.75" fill="none" opacity="0.6"/><path d="M135.2 349.1 q8.0 -1.1 16.1 0" stroke="#b5875a" stroke-width="0.75" fill="none" opacity="0.6"/><path d="M135.7 352.7 q5.1 -0.6 10.3 0" stroke="#b5875a" stroke-width="0.75" fill="none" opacity="0.6"/><rect x="167.15" y="345.93" width="52.65" height="16.78" fill="#c9a47e"/><path d="M200.0 355.7 q5.1 -0.5 10.2 0" stroke="#b5875a" stroke-width="0.75" fill="none" opacity="0.6"/><path d="M177.7 353.6 q5.2 -0.5 10.3 0" stroke="#b5875a" stroke-width="0.75" fill="none" opacity="0.6"/><path d="M193.9 355.9 q5.5 -1.2 11.0 0" stroke="#b5875a" stroke-width="0.75" fill="none" opacity="0.6"/><path d="M176.2 355.1 q4.8 -1.1 9.6 0" stroke="#b5875a" stroke-width="0.75" fill="none" opacity="0.6"/><path d="M197.5 351.8 q7.8 -1.0 15.5 0" stroke="#b5875a" stroke-width="0.75" fill="none" opacity="0.6"/><rect x="222.60" y="345.93" width="52.65" height="16.78" fill="#ceaa86"/><path d="M227.5 349.0 q8.4 -0.5 16.7 0" stroke="#b5875a" stroke-width="0.75" fill="none" opacity="0.6"/><path d="M235.0 355.5 q8.8 -0.5 17.6 0" stroke="#b5875a" stroke-width="0.75" fill="none" opacity="0.6"/><path d="M226.3 357.4 q8.3 -1.0 16.5 0" stroke="#b5875a" stroke-width="0.75" fill="none" opacity="0.6"/><path d="M226.1 357.3 q6.2 -0.7 12.4 0" stroke="#b5875a" stroke-width="0.75" fill="none" opacity="0.6"/><path d="M229.2 359.0 q7.4 -1.0 14.9 0" stroke="#b5875a" stroke-width="0.75" fill="none" opacity="0.6"/><rect x="278.05" y="345.93" width="52.65" height="16.78" fill="#d1ad8a"/><path d="M311.9 349.0 q8.6 -0.4 17.1 0" stroke="#b5875a" stroke-width="0.75" fill="none" opacity="0.6"/><path d="M304.1 350.0 q4.8 -0.9 9.7 0" stroke="#b5875a" stroke-width="0.75" fill="none" opacity="0.6"/><path d="M283.0 352.6 q8.6 -0.9 17.2 0" stroke="#b5875a" stroke-width="0.75" fill="none" opacity="0.6"/><path d="M308.8 359.5 q4.2 -0.5 8.3 0" stroke="#b5875a" stroke-width="0.75" fill="none" opacity="0.6"/><path d="M305.9 356.4 q4.2 -0.8 8.4 0" stroke="#b5875a" stroke-width="0.75" fill="none" opacity="0.6"/><rect x="333.50" y="345.93" width="52.90" height="16.78" fill="#c8a07a"/><path d="M354.4 356.5 q7.6 -0.3 15.3 0" stroke="#b5875a" stroke-width="0.75" fill="none" opacity="0.6"/><path d="M364.9 349.6 q4.6 -1.2 9.1 0" stroke="#b5875a" stroke-width="0.75" fill="none" opacity="0.6"/><path d="M367.4 354.6 q4.0 -0.5 8.0 0" stroke="#b5875a" stroke-width="0.75" fill="none" opacity="0.6"/><path d="M353.3 355.7 q6.7 -1.2 13.5 0" stroke="#b5875a" stroke-width="0.75" fill="none" opacity="0.6"/><path d="M352.9 358.0 q8.8 -0.4 17.6 0" stroke="#b5875a" stroke-width="0.75" fill="none" opacity="0.6"/><rect x="0.00" y="365.10" width="26.52" height="16.90" fill="#c8a07a"/><path d="M7.6 378.7 q5.1 -0.4 10.2 0" stroke="#b5875a" stroke-width="0.75" fill="none" opacity="0.6"/><path d="M6.6 368.3 q5.3 -1.2 10.7 0" stroke="#b5875a" stroke-width="0.75" fill="none" opacity="0.6"/><path d="M3.3 368.6 q7.9 -1.2 15.9 0" stroke="#b5875a" stroke-width="0.75" fill="none" opacity="0.6"/><path d="M3.7 371.7 q4.2 -0.7 8.4 0" stroke="#b5875a" stroke-width="0.75" fill="none" opacity="0.6"/><path d="M3.8 371.7 q6.1 -1.2 12.1 0" stroke="#b5875a" stroke-width="0.75" fill="none" opacity="0.6"/><rect x="29.32" y="365.10" width="52.65" height="16.90" fill="#ceaa86"/><path d="M44.4 371.6 q6.1 -1.2 12.2 0" stroke="#b5875a" stroke-width="0.75" fill="none" opacity="0.6"/><path d="M44.0 372.3 q6.0 -0.4 12.1 0" stroke="#b5875a" stroke-width="0.75" fill="none" opacity="0.6"/><path d="M63.9 368.2 q7.0 -1.1 14.1 0" stroke="#b5875a" stroke-width="0.75" fill="none" opacity="0.6"/><path d="M39.6 374.8 q5.9 -0.5 11.8 0" stroke="#b5875a" stroke-width="0.75" fill="none" opacity="0.6"/><path d="M37.8 369.4 q8.2 -1.0 16.4 0" stroke="#b5875a" stroke-width="0.75" fill="none" opacity="0.6"/><rect x="84.78" y="365.10" width="52.65" height="16.90" fill="#cda882"/><path d="M100.0 374.2 q7.4 -0.7 14.8 0" stroke="#b5875a" stroke-width="0.75" fill="none" opacity="0.6"/><path d="M108.6 373.1 q6.9 -0.7 13.8 0" stroke="#b5875a" stroke-width="0.75" fill="none" opacity="0.6"/><path d="M107.9 373.2 q5.7 -0.8 11.4 0" stroke="#b5875a" stroke-width="0.75" fill="none" opacity="0.6"/><path d="M99.2 377.1 q8.0 -1.1 15.9 0" stroke="#b5875a" stroke-width="0.75" fill="none" opacity="0.6"/><path d="M98.4 368.8 q8.9 -0.5 17.8 0" stroke="#b5875a" stroke-width="0.75" fill="none" opacity="0.6"/><rect x="140.22" y="365.10" width="52.65" height="16.90" fill="#cba67f"/><path d="M144.6 376.8 q7.3 -1.1 14.6 0" stroke="#b5875a" stroke-width="0.75" fill="none" opacity="0.6"/><path d="M167.2 371.0 q8.2 -1.1 16.4 0" stroke="#b5875a" stroke-width="0.75" fill="none" opacity="0.6"/><path d="M153.6 374.5 q6.9 -1.2 13.7 0" stroke="#b5875a" stroke-width="0.75" fill="none" opacity="0.6"/><path d="M144.4 376.4 q5.8 -0.5 11.6 0" stroke="#b5875a" stroke-width="0.75" fill="none" opacity="0.6"/><path d="M147.7 372.1 q7.4 -0.4 14.7 0" stroke="#b5875a" stroke-width="0.75" fill="none" opacity="0.6"/><rect x="195.68" y="365.10" width="52.65" height="16.90" fill="#d3b18f"/><path d="M203.5 378.4 q8.3 -0.9 16.6 0" stroke="#b5875a" stroke-width="0.75" fill="none" opacity="0.6"/><path d="M227.4 371.6 q5.8 -1.1 11.6 0" stroke="#b5875a" stroke-width="0.75" fill="none" opacity="0.6"/><path d="M211.7 372.6 q7.5 -0.6 15.0 0" stroke="#b5875a" stroke-width="0.75" fill="none" opacity="0.6"/><path d="M209.6 375.3 q6.6 -0.6 13.2 0" stroke="#b5875a" stroke-width="0.75" fill="none" opacity="0.6"/><path d="M219.3 371.1 q5.5 -0.7 10.9 0" stroke="#b5875a" stroke-width="0.75" fill="none" opacity="0.6"/><rect x="251.12" y="365.10" width="52.65" height="16.90" fill="#c9a37c"/><path d="M267.8 373.3 q8.0 -1.0 16.0 0" stroke="#b5875a" stroke-width="0.75" fill="none" opacity="0.6"/><path d="M258.0 375.5 q5.8 -0.8 11.7 0" stroke="#b5875a" stroke-width="0.75" fill="none" opacity="0.6"/><path d="M260.9 372.1 q5.7 -0.6 11.4 0" stroke="#b5875a" stroke-width="0.75" fill="none" opacity="0.6"/><path d="M253.7 370.3 q6.9 -0.4 13.7 0" stroke="#b5875a" stroke-width="0.75" fill="none" opacity="0.6"/><path d="M259.0 375.9 q5.4 -0.6 10.7 0" stroke="#b5875a" stroke-width="0.75" fill="none" opacity="0.6"/><rect x="306.58" y="365.10" width="52.65" height="16.90" fill="#c8a07a"/><path d="M317.2 372.9 q6.6 -0.7 13.3 0" stroke="#b5875a" stroke-width="0.75" fill="none" opacity="0.6"/><path d="M311.5 369.5 q8.8 -0.6 17.6 0" stroke="#b5875a" stroke-width="0.75" fill="none" opacity="0.6"/><path d="M334.1 378.1 q7.6 -0.6 15.2 0" stroke="#b5875a" stroke-width="0.75" fill="none" opacity="0.6"/><path d="M309.9 376.3 q8.8 -0.7 17.7 0" stroke="#b5875a" stroke-width="0.75" fill="none" opacity="0.6"/><path d="M328.4 370.9 q5.2 -1.1 10.4 0" stroke="#b5875a" stroke-width="0.75" fill="none" opacity="0.6"/><rect x="362.02" y="365.10" width="26.98" height="16.90" fill="#d1ad8a"/><path d="M370.5 370.2 q8.9 -0.9 17.7 0" stroke="#b5875a" stroke-width="0.75" fill="none" opacity="0.6"/><path d="M366.6 375.4 q5.6 -0.4 11.3 0" stroke="#b5875a" stroke-width="0.75" fill="none" opacity="0.6"/><path d="M369.3 372.2 q6.6 -0.7 13.3 0" stroke="#b5875a" stroke-width="0.75" fill="none" opacity="0.6"/><path d="M370.3 376.4 q4.1 -0.8 8.3 0" stroke="#b5875a" stroke-width="0.75" fill="none" opacity="0.6"/><path d="M367.3 373.1 q8.2 -0.7 16.4 0" stroke="#b5875a" stroke-width="0.75" fill="none" opacity="0.6"/></svg><svg class="a" style="left:0;top:0" width="1588" height="1012"><path d="M329.6 362.5L329.6 745.4M472.8 362.5L472.8 745.4M329.6 362.5L472.8 362.5M329.6 458.4L472.8 458.4M329.6 554.2L472.8 554.2M329.6 649.7L472.8 649.7M329.6 745.4L472.8 745.4M186.4 458.4L329.6 458.4M472.8 458.4L615.8 458.4M186.4 554.2L329.6 554.2M472.8 554.2L615.8 554.2M186.4 458.4L186.4 554.2M615.8 458.4L615.8 554.2" stroke="#2e2e2e" stroke-width="3.2" fill="none" stroke-linecap="square"/><path d="M329.6 362.5L329.6 745.4M472.8 362.5L472.8 745.4M329.6 362.5L472.8 362.5M329.6 458.4L472.8 458.4M329.6 554.2L472.8 554.2M329.6 649.7L472.8 649.7M329.6 745.4L472.8 745.4M186.4 458.4L329.6 458.4M472.8 458.4L615.8 458.4M186.4 554.2L329.6 554.2M472.8 554.2L615.8 554.2M186.4 458.4L186.4 554.2M615.8 458.4L615.8 554.2" stroke="#b4b4b4" stroke-width="1.4" fill="none"/><circle cx="472.8" cy="554.2" r="2.1" fill="#000"/><circle cx="329.6" cy="362.5" r="2.1" fill="#000"/><circle cx="615.8" cy="458.4" r="2.1" fill="#000"/><circle cx="472.8" cy="458.4" r="2.1" fill="#000"/><circle cx="329.6" cy="649.7" r="2.1" fill="#000"/><circle cx="186.4" cy="554.2" r="2.1" fill="#000"/><circle cx="186.4" cy="458.4" r="2.1" fill="#000"/><circle cx="472.8" cy="362.5" r="2.1" fill="#000"/><circle cx="472.8" cy="649.7" r="2.1" fill="#000"/><circle cx="329.6" cy="745.4" r="2.1" fill="#000"/><circle cx="329.6" cy="554.2" r="2.1" fill="#000"/><circle cx="329.6" cy="458.4" r="2.1" fill="#000"/><circle cx="472.8" cy="745.4" r="2.1" fill="#000"/><circle cx="615.8" cy="554.2" r="2.1" fill="#000"/></svg><svg class="a" style="left:94.5px;top:725.5px;" width="40" height="40" viewBox="0 0 40 40">
      <circle cx="20" cy="20" r="10.3" fill="none" stroke="#f2f2f2" stroke-width="1.6"/>
      <circle cx="20" cy="20" r="10.3" fill="none" stroke="#e42020" stroke-width="1.6" stroke-dasharray="4.045 4.045" stroke-dashoffset="1"/>
      <path d="M20 3.2V14.6 M20 25.3V36.6 M3.2 20H14.6 M25.3 20H36.8" stroke="#000" stroke-width="1.3"/>
      <path d="M20 0V3.2 M20 36.6V40" stroke="#7fd020" stroke-width="1.3"/>
      <path d="M0 20H3.2 M36.8 20H40" stroke="#e03050" stroke-width="1.3"/>
    </svg><svg class="a" style="left:763.7px;top:110.5px;" width="26.4" height="26.4" viewBox="0 0 26.4 26.4"><circle cx="13.2" cy="13.2" r="13.2" fill="rgba(34,34,34,0.75)"/><g transform="translate(3.2,3.2)"><circle cx="8.3" cy="8.8" r="6.5" fill="#d6d6d6"/><path d="M12.8 13.3 L17 17.5" stroke="#d6d6d6" stroke-width="2.4" stroke-linecap="round"/><path d="M8.3 5.7V11.9 M5.2 8.8H11.4" stroke="#262626" stroke-width="1.2"/></g></svg><svg class="a" style="left:763.7px;top:140.8px;" width="26.4" height="26.4" viewBox="0 0 26.4 26.4"><circle cx="13.2" cy="13.2" r="13.2" fill="rgba(34,34,34,0.75)"/><g transform="translate(3.2,3.2)"><path d="M4.8 11.8 L2.4 10.3 C1.7 9.9 1.1 10.6 1.7 11.2 L6.2 16.6 C7 17.6 8 18.1 9.5 18.1 C12.5 18.1 14.3 16 14.8 13.5 L16.9 7.4 C17.1 6.6 16.2 6.3 15.8 6.9 L14.3 10.3 L13.5 4.2 C13.4 3.4 12.3 3.4 12.2 4.2 L11.9 9.6 L10.2 2.7 C10 2 9 2 9 2.7 L9.4 9.7 L7.4 4.6 C7.1 3.9 6.2 4.1 6.3 4.8 L7.4 12.3 Z" fill="#d6d6d6"/></g></svg><div class="a" style="left:791.4px;top:123.3px;width:9.5px;height:17.4px;background:#2a2a2a;border-radius:4px 0 0 4px;"></div><svg class="a" style="left:793px;top:127px;" width="6" height="10" viewBox="0 0 6 10"><path d="M4.5 1 L1 5 L4.5 9" fill="none" stroke="#b0b0b0" stroke-width="1.1"/></svg>
<div class="a" style="left:804px;top:49px;width:781px;height:960px;background:#3f3f3f;border-radius:5px;box-sizing:border-box;border:1px solid #4c4c4c;"></div><svg class="a" style="left:0;top:0" width="1588" height="1012"><defs><clipPath id="vp"><rect x="805" y="50" width="779" height="958" rx="4"/></clipPath></defs><g clip-path="url(#vp)"><defs><linearGradient id="g1" gradientUnits="userSpaceOnUse" x1="805.0" y1="226.0" x2="1584.0" y2="215.1"><stop offset="0.000" stop-color="#525252" stop-opacity="0.11"/><stop offset="0.125" stop-color="#525252" stop-opacity="0.11"/><stop offset="0.250" stop-color="#525252" stop-opacity="0.11"/><stop offset="0.375" stop-color="#525252" stop-opacity="0.11"/><stop offset="0.500" stop-color="#525252" stop-opacity="0.10"/><stop offset="0.625" stop-color="#525252" stop-opacity="0.09"/><stop offset="0.750" stop-color="#525252" stop-opacity="0.08"/><stop offset="0.875" stop-color="#525252" stop-opacity="0.06"/><stop offset="1.000" stop-color="#525252" stop-opacity="0.04"/></linearGradient><linearGradient id="g2" gradientUnits="userSpaceOnUse" x1="805.0" y1="251.2" x2="1584.0" y2="230.9"><stop offset="0.000" stop-color="#525252" stop-opacity="0.23"/><stop offset="0.125" stop-color="#525252" stop-opacity="0.23"/><stop offset="0.250" stop-color="#525252" stop-opacity="0.23"/><stop offset="0.375" stop-color="#525252" stop-opacity="0.22"/><stop offset="0.500" stop-color="#525252" stop-opacity="0.21"/><stop offset="0.625" stop-color="#525252" stop-opacity="0.19"/><stop offset="0.750" stop-color="#525252" stop-opacity="0.17"/><stop offset="0.875" stop-color="#525252" stop-opacity="0.15"/><stop offset="1.000" stop-color="#525252" stop-opacity="0.13"/></linearGradient><linearGradient id="g3" gradientUnits="userSpaceOnUse" x1="805.0" y1="256.4" x2="1463.7" y2="237.5"><stop offset="0.000" stop-color="#525252" stop-opacity="0.16"/><stop offset="0.125" stop-color="#525252" stop-opacity="0.15"/><stop offset="0.250" stop-color="#525252" stop-opacity="0.14"/><stop offset="0.375" stop-color="#525252" stop-opacity="0.12"/><stop offset="0.500" stop-color="#525252" stop-opacity="0.10"/><stop offset="0.625" stop-color="#525252" stop-opacity="0.07"/><stop offset="0.750" stop-color="#525252" stop-opacity="0.05"/><stop offset="0.875" stop-color="#525252" stop-opacity="0.03"/><stop offset="1.000" stop-color="#525252" stop-opacity="0.02"/></linearGradient><linearGradient id="g4" gradientUnits="userSpaceOnUse" x1="805.0" y1="262.6" x2="1562.8" y2="238.6"><stop offset="0.000" stop-color="#525252" stop-opacity="0.24"/><stop offset="0.125" stop-color="#525252" stop-opacity="0.23"/><stop offset="0.250" stop-color="#525252" stop-opacity="0.21"/><stop offset="0.375" stop-color="#525252" stop-opacity="0.18"/><stop offset="0.500" stop-color="#525252" stop-opacity="0.14"/><stop offset="0.625" stop-color="#525252" stop-opacity="0.10"/><stop offset="0.750" stop-color="#525252" stop-opacity="0.07"/><stop offset="0.875" stop-color="#525252" stop-opacity="0.04"/><stop offset="1.000" stop-color="#525252" stop-opacity="0.02"/></linearGradient><linearGradient id="g5" gradientUnits="userSpaceOnUse" x1="805.0" y1="270.3" x2="1584.0" y2="242.8"><stop offset="0.000" stop-color="#525252" stop-opacity="0.33"/><stop offset="0.125" stop-color="#525252" stop-opacity="0.32"/><stop offset="0.250" stop-color="#525252" stop-opacity="0.31"/><stop offset="0.375" stop-color="#525252" stop-opacity="0.27"/><stop offset="0.500" stop-color="#525252" stop-opacity="0.23"/><stop offset="0.625" stop-color="#525252" stop-opacity="0.17"/><stop offset="0.750" stop-color="#525252" stop-opacity="0.12"/><stop offset="0.875" stop-color="#525252" stop-opacity="0.07"/><stop offset="1.000" stop-color="#525252" stop-opacity="0.04"/></linearGradient><linearGradient id="g6" gradientUnits="userSpaceOnUse" x1="805.0" y1="280.1" x2="1584.0" y2="248.9"><stop offset="0.000" stop-color="#525252" stop-opacity="0.38"/><stop offset="0.125" stop-color="#525252" stop-opacity="0.38"/><stop offset="0.250" stop-color="#525252" stop-opacity="0.37"/><stop offset="0.375" stop-color="#525252" stop-opacity="0.36"/><stop offset="0.500" stop-color="#525252" stop-opacity="0.34"/><stop offset="0.625" stop-color="#525252" stop-opacity="0.28"/><stop offset="0.750" stop-color="#525252" stop-opacity="0.21"/><stop offset="0.875" stop-color="#525252" stop-opacity="0.14"/><stop offset="1.000" stop-color="#525252" stop-opacity="0.08"/></linearGradient><linearGradient id="g7" gradientUnits="userSpaceOnUse" x1="805.0" y1="292.8" x2="1584.0" y2="256.8"><stop offset="0.000" stop-color="#525252" stop-opacity="0.43"/><stop offset="0.125" stop-color="#525252" stop-opacity="0.43"/><stop offset="0.250" stop-color="#525252" stop-opacity="0.43"/><stop offset="0.375" stop-color="#525252" stop-opacity="0.42"/><stop offset="0.500" stop-color="#525252" stop-opacity="0.40"/><stop offset="0.625" stop-color="#525252" stop-opacity="0.37"/><stop offset="0.750" stop-color="#525252" stop-opacity="0.33"/><stop offset="0.875" stop-color="#525252" stop-opacity="0.25"/><stop offset="1.000" stop-color="#525252" stop-opacity="0.17"/></linearGradient><linearGradient id="g8" gradientUnits="userSpaceOnUse" x1="805.0" y1="310.1" x2="1584.0" y2="267.6"><stop offset="0.000" stop-color="#525252" stop-opacity="0.50"/><stop offset="0.125" stop-color="#525252" stop-opacity="0.50"/><stop offset="0.250" stop-color="#525252" stop-opacity="0.50"/><stop offset="0.375" stop-color="#525252" stop-opacity="0.49"/><stop offset="0.500" stop-color="#525252" stop-opacity="0.47"/><stop offset="0.625" stop-color="#525252" stop-opacity="0.44"/><stop offset="0.750" stop-color="#525252" stop-opacity="0.40"/><stop offset="0.875" stop-color="#525252" stop-opacity="0.36"/><stop offset="1.000" stop-color="#525252" stop-opacity="0.30"/></linearGradient><linearGradient id="g9" gradientUnits="userSpaceOnUse" x1="805.0" y1="332.1" x2="1221.9" y2="304.9"><stop offset="0.000" stop-color="#525252" stop-opacity="0.07"/><stop offset="0.125" stop-color="#525252" stop-opacity="0.07"/><stop offset="0.250" stop-color="#525252" stop-opacity="0.06"/><stop offset="0.375" stop-color="#525252" stop-opacity="0.06"/><stop offset="0.500" stop-color="#525252" stop-opacity="0.05"/><stop offset="0.625" stop-color="#525252" stop-opacity="0.04"/><stop offset="0.750" stop-color="#525252" stop-opacity="0.03"/><stop offset="0.875" stop-color="#525252" stop-opacity="0.03"/><stop offset="1.000" stop-color="#525252" stop-opacity="0.02"/></linearGradient><linearGradient id="g10" gradientUnits="userSpaceOnUse" x1="805.0" y1="335.1" x2="1584.0" y2="283.2"><stop offset="0.000" stop-color="#525252" stop-opacity="0.59"/><stop offset="0.125" stop-color="#525252" stop-opacity="0.59"/><stop offset="0.250" stop-color="#525252" stop-opacity="0.58"/><stop offset="0.375" stop-color="#525252" stop-opacity="0.57"/><stop offset="0.500" stop-color="#525252" stop-opacity="0.55"/><stop offset="0.625" stop-color="#525252" stop-opacity="0.52"/><stop offset="0.750" stop-color="#525252" stop-opacity="0.49"/><stop offset="0.875" stop-color="#525252" stop-opacity="0.44"/><stop offset="1.000" stop-color="#525252" stop-opacity="0.39"/></linearGradient><linearGradient id="g11" gradientUnits="userSpaceOnUse" x1="805.0" y1="338.2" x2="1274.3" y2="306.2"><stop offset="0.000" stop-color="#525252" stop-opacity="0.10"/><stop offset="0.125" stop-color="#525252" stop-opacity="0.09"/><stop offset="0.250" stop-color="#525252" stop-opacity="0.08"/><stop offset="0.375" stop-color="#525252" stop-opacity="0.07"/><stop offset="0.500" stop-color="#525252" stop-opacity="0.06"/><stop offset="0.625" stop-color="#525252" stop-opacity="0.05"/><stop offset="0.750" stop-color="#525252" stop-opacity="0.04"/><stop offset="0.875" stop-color="#525252" stop-opacity="0.03"/><stop offset="1.000" stop-color="#525252" stop-opacity="0.02"/></linearGradient><linearGradient id="g12" gradientUnits="userSpaceOnUse" x1="805.0" y1="341.4" x2="1319.8" y2="305.6"><stop offset="0.000" stop-color="#525252" stop-opacity="0.11"/><stop offset="0.125" stop-color="#525252" stop-opacity="0.10"/><stop offset="0.250" stop-color="#525252" stop-opacity="0.09"/><stop offset="0.375" stop-color="#525252" stop-opacity="0.08"/><stop offset="0.500" stop-color="#525252" stop-opacity="0.07"/><stop offset="0.625" stop-color="#525252" stop-opacity="0.06"/><stop offset="0.750" stop-color="#525252" stop-opacity="0.04"/><stop offset="0.875" stop-color="#525252" stop-opacity="0.03"/><stop offset="1.000" stop-color="#525252" stop-opacity="0.02"/></linearGradient><linearGradient id="g13" gradientUnits="userSpaceOnUse" x1="805.0" y1="344.8" x2="1346.6" y2="306.2"><stop offset="0.000" stop-color="#525252" stop-opacity="0.13"/><stop offset="0.125" stop-color="#525252" stop-opacity="0.12"/><stop offset="0.250" stop-color="#525252" stop-opacity="0.11"/><stop offset="0.375" stop-color="#525252" stop-opacity="0.09"/><stop offset="0.500" stop-color="#525252" stop-opacity="0.08"/><stop offset="0.625" stop-color="#525252" stop-opacity="0.06"/><stop offset="0.750" stop-color="#525252" stop-opacity="0.05"/><stop offset="0.875" stop-color="#525252" stop-opacity="0.03"/><stop offset="1.000" stop-color="#525252" stop-opacity="0.02"/></linearGradient><linearGradient id="g14" gradientUnits="userSpaceOnUse" x1="805.0" y1="348.4" x2="1373.8" y2="306.9"><stop offset="0.000" stop-color="#525252" stop-opacity="0.15"/><stop offset="0.125" stop-color="#525252" stop-opacity="0.14"/><stop offset="0.250" stop-color="#525252" stop-opacity="0.12"/><stop offset="0.375" stop-color="#525252" stop-opacity="0.11"/><stop offset="0.500" stop-color="#525252" stop-opacity="0.09"/><stop offset="0.625" stop-color="#525252" stop-opacity="0.07"/><stop offset="0.750" stop-color="#525252" stop-opacity="0.05"/><stop offset="0.875" stop-color="#525252" stop-opacity="0.03"/><stop offset="1.000" stop-color="#525252" stop-opacity="0.02"/></linearGradient><linearGradient id="g15" gradientUnits="userSpaceOnUse" x1="805.0" y1="352.2" x2="1401.2" y2="307.6"><stop offset="0.000" stop-color="#525252" stop-opacity="0.17"/><stop offset="0.125" stop-color="#525252" stop-opacity="0.16"/><stop offset="0.250" stop-color="#525252" stop-opacity="0.14"/><stop offset="0.375" stop-color="#525252" stop-opacity="0.12"/><stop offset="0.500" stop-color="#525252" stop-opacity="0.10"/><stop offset="0.625" stop-color="#525252" stop-opacity="0.08"/><stop offset="0.750" stop-color="#525252" stop-opacity="0.06"/><stop offset="0.875" stop-color="#525252" stop-opacity="0.04"/><stop offset="1.000" stop-color="#525252" stop-opacity="0.02"/></linearGradient><linearGradient id="g16" gradientUnits="userSpaceOnUse" x1="805.0" y1="356.1" x2="1429.1" y2="308.2"><stop offset="0.000" stop-color="#525252" stop-opacity="0.20"/><stop offset="0.125" stop-color="#525252" stop-opacity="0.18"/><stop offset="0.250" stop-color="#525252" stop-opacity="0.16"/><stop offset="0.375" stop-color="#525252" stop-opacity="0.14"/><stop offset="0.500" stop-color="#525252" stop-opacity="0.11"/><stop offset="0.625" stop-color="#525252" stop-opacity="0.09"/><stop offset="0.750" stop-color="#525252" stop-opacity="0.06"/><stop offset="0.875" stop-color="#525252" stop-opacity="0.04"/><stop offset="1.000" stop-color="#525252" stop-opacity="0.02"/></linearGradient><linearGradient id="g17" gradientUnits="userSpaceOnUse" x1="805.0" y1="360.3" x2="1457.2" y2="308.9"><stop offset="0.000" stop-color="#525252" stop-opacity="0.23"/><stop offset="0.125" stop-color="#525252" stop-opacity="0.21"/><stop offset="0.250" stop-color="#525252" stop-opacity="0.18"/><stop offset="0.375" stop-color="#525252" stop-opacity="0.16"/><stop offset="0.500" stop-color="#525252" stop-opacity="0.13"/><stop offset="0.625" stop-color="#525252" stop-opacity="0.09"/><stop offset="0.750" stop-color="#525252" stop-opacity="0.06"/><stop offset="0.875" stop-color="#525252" stop-opacity="0.04"/><stop offset="1.000" stop-color="#525252" stop-opacity="0.02"/></linearGradient><linearGradient id="g18" gradientUnits="userSpaceOnUse" x1="805.0" y1="364.7" x2="1485.7" y2="309.6"><stop offset="0.000" stop-color="#525252" stop-opacity="0.26"/><stop offset="0.125" stop-color="#525252" stop-opacity="0.24"/><stop offset="0.250" stop-color="#525252" stop-opacity="0.21"/><stop offset="0.375" stop-color="#525252" stop-opacity="0.18"/><stop offset="0.500" stop-color="#525252" stop-opacity="0.14"/><stop offset="0.625" stop-color="#525252" stop-opacity="0.10"/><stop offset="0.750" stop-color="#525252" stop-opacity="0.07"/><stop offset="0.875" stop-color="#525252" stop-opacity="0.04"/><stop offset="1.000" stop-color="#525252" stop-opacity="0.02"/></linearGradient><linearGradient id="g19" gradientUnits="userSpaceOnUse" x1="805.0" y1="369.3" x2="1514.6" y2="310.3"><stop offset="0.000" stop-color="#525252" stop-opacity="0.30"/><stop offset="0.125" stop-color="#525252" stop-opacity="0.27"/><stop offset="0.250" stop-color="#525252" stop-opacity="0.24"/><stop offset="0.375" stop-color="#525252" stop-opacity="0.20"/><stop offset="0.500" stop-color="#525252" stop-opacity="0.16"/><stop offset="0.625" stop-color="#525252" stop-opacity="0.11"/><stop offset="0.750" stop-color="#525252" stop-opacity="0.08"/><stop offset="0.875" stop-color="#525252" stop-opacity="0.04"/><stop offset="1.000" stop-color="#525252" stop-opacity="0.02"/></linearGradient><linearGradient id="g20" gradientUnits="userSpaceOnUse" x1="805.0" y1="374.1" x2="1584.0" y2="307.6"><stop offset="0.000" stop-color="#525252" stop-opacity="0.69"/><stop offset="0.125" stop-color="#525252" stop-opacity="0.69"/><stop offset="0.250" stop-color="#525252" stop-opacity="0.69"/><stop offset="0.375" stop-color="#525252" stop-opacity="0.68"/><stop offset="0.500" stop-color="#525252" stop-opacity="0.66"/><stop offset="0.625" stop-color="#525252" stop-opacity="0.63"/><stop offset="0.750" stop-color="#525252" stop-opacity="0.59"/><stop offset="0.875" stop-color="#525252" stop-opacity="0.55"/><stop offset="1.000" stop-color="#525252" stop-opacity="0.49"/></linearGradient><linearGradient id="g21" gradientUnits="userSpaceOnUse" x1="805.0" y1="379.3" x2="1573.4" y2="311.8"><stop offset="0.000" stop-color="#525252" stop-opacity="0.38"/><stop offset="0.125" stop-color="#525252" stop-opacity="0.35"/><stop offset="0.250" stop-color="#525252" stop-opacity="0.31"/><stop offset="0.375" stop-color="#525252" stop-opacity="0.26"/><stop offset="0.500" stop-color="#525252" stop-opacity="0.20"/><stop offset="0.625" stop-color="#525252" stop-opacity="0.14"/><stop offset="0.750" stop-color="#525252" stop-opacity="0.09"/><stop offset="0.875" stop-color="#525252" stop-opacity="0.05"/><stop offset="1.000" stop-color="#525252" stop-opacity="0.02"/></linearGradient><linearGradient id="g22" gradientUnits="userSpaceOnUse" x1="805.0" y1="384.8" x2="1584.0" y2="314.3"><stop offset="0.000" stop-color="#525252" stop-opacity="0.43"/><stop offset="0.125" stop-color="#525252" stop-opacity="0.40"/><stop offset="0.250" stop-color="#525252" stop-opacity="0.35"/><stop offset="0.375" stop-color="#525252" stop-opacity="0.29"/><stop offset="0.500" stop-color="#525252" stop-opacity="0.23"/><stop offset="0.625" stop-color="#525252" stop-opacity="0.16"/><stop offset="0.750" stop-color="#525252" stop-opacity="0.10"/><stop offset="0.875" stop-color="#525252" stop-opacity="0.05"/><stop offset="1.000" stop-color="#525252" stop-opacity="0.02"/></linearGradient><linearGradient id="g23" gradientUnits="userSpaceOnUse" x1="805.0" y1="390.6" x2="1584.0" y2="317.9"><stop offset="0.000" stop-color="#525252" stop-opacity="0.49"/><stop offset="0.125" stop-color="#525252" stop-opacity="0.45"/><stop offset="0.250" stop-color="#525252" stop-opacity="0.40"/><stop offset="0.375" stop-color="#525252" stop-opacity="0.34"/><stop offset="0.500" stop-color="#525252" stop-opacity="0.27"/><stop offset="0.625" stop-color="#525252" stop-opacity="0.19"/><stop offset="0.750" stop-color="#525252" stop-opacity="0.12"/><stop offset="0.875" stop-color="#525252" stop-opacity="0.07"/><stop offset="1.000" stop-color="#525252" stop-opacity="0.03"/></linearGradient><linearGradient id="g24" gradientUnits="userSpaceOnUse" x1="805.0" y1="396.8" x2="1584.0" y2="321.7"><stop offset="0.000" stop-color="#525252" stop-opacity="0.55"/><stop offset="0.125" stop-color="#525252" stop-opacity="0.51"/><stop offset="0.250" stop-color="#525252" stop-opacity="0.46"/><stop offset="0.375" stop-color="#525252" stop-opacity="0.39"/><stop offset="0.500" stop-color="#525252" stop-opacity="0.31"/><stop offset="0.625" stop-color="#525252" stop-opacity="0.22"/><stop offset="0.750" stop-color="#525252" stop-opacity="0.15"/><stop offset="0.875" stop-color="#525252" stop-opacity="0.08"/><stop offset="1.000" stop-color="#525252" stop-opacity="0.04"/></linearGradient><linearGradient id="g25" gradientUnits="userSpaceOnUse" x1="805.0" y1="403.4" x2="1584.0" y2="325.9"><stop offset="0.000" stop-color="#525252" stop-opacity="0.61"/><stop offset="0.125" stop-color="#525252" stop-opacity="0.57"/><stop offset="0.250" stop-color="#525252" stop-opacity="0.52"/><stop offset="0.375" stop-color="#525252" stop-opacity="0.45"/><stop offset="0.500" stop-color="#525252" stop-opacity="0.36"/><stop offset="0.625" stop-color="#525252" stop-opacity="0.26"/><stop offset="0.750" stop-color="#525252" stop-opacity="0.18"/><stop offset="0.875" stop-color="#525252" stop-opacity="0.10"/><stop offset="1.000" stop-color="#525252" stop-opacity="0.05"/></linearGradient><linearGradient id="g26" gradientUnits="userSpaceOnUse" x1="805.0" y1="410.4" x2="1584.0" y2="330.3"><stop offset="0.000" stop-color="#525252" stop-opacity="0.67"/><stop offset="0.125" stop-color="#525252" stop-opacity="0.64"/><stop offset="0.250" stop-color="#525252" stop-opacity="0.58"/><stop offset="0.375" stop-color="#525252" stop-opacity="0.51"/><stop offset="0.500" stop-color="#525252" stop-opacity="0.41"/><stop offset="0.625" stop-color="#525252" stop-opacity="0.31"/><stop offset="0.750" stop-color="#525252" stop-opacity="0.21"/><stop offset="0.875" stop-color="#525252" stop-opacity="0.13"/><stop offset="1.000" stop-color="#525252" stop-opacity="0.07"/></linearGradient><linearGradient id="g27" gradientUnits="userSpaceOnUse" x1="805.0" y1="418.0" x2="1584.0" y2="335.0"><stop offset="0.000" stop-color="#525252" stop-opacity="0.73"/><stop offset="0.125" stop-color="#525252" stop-opacity="0.70"/><stop offset="0.250" stop-color="#525252" stop-opacity="0.65"/><stop offset="0.375" stop-color="#525252" stop-opacity="0.58"/><stop offset="0.500" stop-color="#525252" stop-opacity="0.48"/><stop offset="0.625" stop-color="#525252" stop-opacity="0.36"/><stop offset="0.750" stop-color="#525252" stop-opacity="0.25"/><stop offset="0.875" stop-color="#525252" stop-opacity="0.16"/><stop offset="1.000" stop-color="#525252" stop-opacity="0.08"/></linearGradient><linearGradient id="g28" gradientUnits="userSpaceOnUse" x1="805.0" y1="426.0" x2="1584.0" y2="340.0"><stop offset="0.000" stop-color="#525252" stop-opacity="0.78"/><stop offset="0.125" stop-color="#525252" stop-opacity="0.76"/><stop offset="0.250" stop-color="#525252" stop-opacity="0.72"/><stop offset="0.375" stop-color="#525252" stop-opacity="0.65"/><stop offset="0.500" stop-color="#525252" stop-opacity="0.55"/><stop offset="0.625" stop-color="#525252" stop-opacity="0.43"/><stop offset="0.750" stop-color="#525252" stop-opacity="0.30"/><stop offset="0.875" stop-color="#525252" stop-opacity="0.19"/><stop offset="1.000" stop-color="#525252" stop-opacity="0.11"/></linearGradient><linearGradient id="g29" gradientUnits="userSpaceOnUse" x1="805.0" y1="434.7" x2="1584.0" y2="345.5"><stop offset="0.000" stop-color="#525252" stop-opacity="0.80"/><stop offset="0.125" stop-color="#525252" stop-opacity="0.80"/><stop offset="0.250" stop-color="#525252" stop-opacity="0.77"/><stop offset="0.375" stop-color="#525252" stop-opacity="0.71"/><stop offset="0.500" stop-color="#525252" stop-opacity="0.62"/><stop offset="0.625" stop-color="#525252" stop-opacity="0.49"/><stop offset="0.750" stop-color="#525252" stop-opacity="0.36"/><stop offset="0.875" stop-color="#525252" stop-opacity="0.23"/><stop offset="1.000" stop-color="#525252" stop-opacity="0.13"/></linearGradient><linearGradient id="g30" gradientUnits="userSpaceOnUse" x1="805.0" y1="444.1" x2="1584.0" y2="351.3"><stop offset="0.000" stop-color="#525252" stop-opacity="0.82"/><stop offset="0.125" stop-color="#525252" stop-opacity="0.82"/><stop offset="0.250" stop-color="#525252" stop-opacity="0.82"/><stop offset="0.375" stop-color="#525252" stop-opacity="0.81"/><stop offset="0.500" stop-color="#525252" stop-opacity="0.79"/><stop offset="0.625" stop-color="#525252" stop-opacity="0.76"/><stop offset="0.750" stop-color="#525252" stop-opacity="0.73"/><stop offset="0.875" stop-color="#525252" stop-opacity="0.69"/><stop offset="1.000" stop-color="#525252" stop-opacity="0.63"/></linearGradient><linearGradient id="g31" gradientUnits="userSpaceOnUse" x1="845.2" y1="238.8" x2="805.0" y2="323.7"><stop offset="0.000" stop-color="#525252" stop-opacity="0.02"/><stop offset="0.125" stop-color="#525252" stop-opacity="0.09"/><stop offset="0.250" stop-color="#525252" stop-opacity="0.22"/><stop offset="0.375" stop-color="#525252" stop-opacity="0.34"/><stop offset="0.500" stop-color="#525252" stop-opacity="0.39"/><stop offset="0.625" stop-color="#525252" stop-opacity="0.43"/><stop offset="0.750" stop-color="#525252" stop-opacity="0.47"/><stop offset="0.875" stop-color="#525252" stop-opacity="0.51"/><stop offset="1.000" stop-color="#525252" stop-opacity="0.55"/></linearGradient><linearGradient id="g32" gradientUnits="userSpaceOnUse" x1="805.0" y1="454.3" x2="1584.0" y2="357.7"><stop offset="0.000" stop-color="#525252" stop-opacity="0.83"/><stop offset="0.125" stop-color="#525252" stop-opacity="0.83"/><stop offset="0.250" stop-color="#525252" stop-opacity="0.83"/><stop offset="0.375" stop-color="#525252" stop-opacity="0.82"/><stop offset="0.500" stop-color="#525252" stop-opacity="0.76"/><stop offset="0.625" stop-color="#525252" stop-opacity="0.65"/><stop offset="0.750" stop-color="#525252" stop-opacity="0.50"/><stop offset="0.875" stop-color="#525252" stop-opacity="0.34"/><stop offset="1.000" stop-color="#525252" stop-opacity="0.21"/></linearGradient><linearGradient id="g33" gradientUnits="userSpaceOnUse" x1="827.3" y1="312.3" x2="805.0" y2="380.5"><stop offset="0.000" stop-color="#525252" stop-opacity="0.02"/><stop offset="0.125" stop-color="#525252" stop-opacity="0.04"/><stop offset="0.250" stop-color="#525252" stop-opacity="0.07"/><stop offset="0.375" stop-color="#525252" stop-opacity="0.10"/><stop offset="0.500" stop-color="#525252" stop-opacity="0.14"/><stop offset="0.625" stop-color="#525252" stop-opacity="0.19"/><stop offset="0.750" stop-color="#525252" stop-opacity="0.25"/><stop offset="0.875" stop-color="#525252" stop-opacity="0.32"/><stop offset="1.000" stop-color="#525252" stop-opacity="0.39"/></linearGradient><linearGradient id="g34" gradientUnits="userSpaceOnUse" x1="805.0" y1="465.3" x2="1584.0" y2="364.6"><stop offset="0.000" stop-color="#525252" stop-opacity="0.84"/><stop offset="0.125" stop-color="#525252" stop-opacity="0.85"/><stop offset="0.250" stop-color="#525252" stop-opacity="0.84"/><stop offset="0.375" stop-color="#525252" stop-opacity="0.84"/><stop offset="0.500" stop-color="#525252" stop-opacity="0.81"/><stop offset="0.625" stop-color="#525252" stop-opacity="0.72"/><stop offset="0.750" stop-color="#525252" stop-opacity="0.58"/><stop offset="0.875" stop-color="#525252" stop-opacity="0.41"/><stop offset="1.000" stop-color="#525252" stop-opacity="0.26"/></linearGradient><linearGradient id="g35" gradientUnits="userSpaceOnUse" x1="844.4" y1="311.4" x2="805.0" y2="529.6"><stop offset="0.000" stop-color="#525252" stop-opacity="0.02"/><stop offset="0.125" stop-color="#525252" stop-opacity="0.11"/><stop offset="0.250" stop-color="#525252" stop-opacity="0.28"/><stop offset="0.375" stop-color="#525252" stop-opacity="0.53"/><stop offset="0.500" stop-color="#525252" stop-opacity="0.75"/><stop offset="0.625" stop-color="#525252" stop-opacity="0.82"/><stop offset="0.750" stop-color="#525252" stop-opacity="0.86"/><stop offset="0.875" stop-color="#525252" stop-opacity="0.88"/><stop offset="1.000" stop-color="#525252" stop-opacity="0.91"/></linearGradient><linearGradient id="g36" gradientUnits="userSpaceOnUse" x1="805.0" y1="477.4" x2="1584.0" y2="372.1"><stop offset="0.000" stop-color="#525252" stop-opacity="0.86"/><stop offset="0.125" stop-color="#525252" stop-opacity="0.86"/><stop offset="0.250" stop-color="#525252" stop-opacity="0.86"/><stop offset="0.375" stop-color="#525252" stop-opacity="0.85"/><stop offset="0.500" stop-color="#525252" stop-opacity="0.83"/><stop offset="0.625" stop-color="#525252" stop-opacity="0.79"/><stop offset="0.750" stop-color="#525252" stop-opacity="0.66"/><stop offset="0.875" stop-color="#525252" stop-opacity="0.49"/><stop offset="1.000" stop-color="#525252" stop-opacity="0.32"/></linearGradient><linearGradient id="g37" gradientUnits="userSpaceOnUse" x1="861.2" y1="310.4" x2="837.6" y2="1008.0"><stop offset="0.000" stop-color="#525252" stop-opacity="0.02"/><stop offset="0.125" stop-color="#525252" stop-opacity="0.59"/><stop offset="0.250" stop-color="#525252" stop-opacity="0.87"/><stop offset="0.375" stop-color="#525252" stop-opacity="0.95"/><stop offset="0.500" stop-color="#525252" stop-opacity="0.99"/><stop offset="0.625" stop-color="#525252" stop-opacity="1.00"/><stop offset="0.750" stop-color="#525252" stop-opacity="1.00"/><stop offset="0.875" stop-color="#525252" stop-opacity="1.00"/><stop offset="1.000" stop-color="#525252" stop-opacity="1.00"/></linearGradient><linearGradient id="g38" gradientUnits="userSpaceOnUse" x1="805.0" y1="490.5" x2="1584.0" y2="380.3"><stop offset="0.000" stop-color="#525252" stop-opacity="0.87"/><stop offset="0.125" stop-color="#525252" stop-opacity="0.87"/><stop offset="0.250" stop-color="#525252" stop-opacity="0.87"/><stop offset="0.375" stop-color="#525252" stop-opacity="0.87"/><stop offset="0.500" stop-color="#525252" stop-opacity="0.85"/><stop offset="0.625" stop-color="#525252" stop-opacity="0.83"/><stop offset="0.750" stop-color="#525252" stop-opacity="0.74"/><stop offset="0.875" stop-color="#525252" stop-opacity="0.58"/><stop offset="1.000" stop-color="#525252" stop-opacity="0.39"/></linearGradient><linearGradient id="g39" gradientUnits="userSpaceOnUse" x1="878.0" y1="312.7" x2="956.5" y2="1008.0"><stop offset="0.000" stop-color="#525252" stop-opacity="0.03"/><stop offset="0.125" stop-color="#525252" stop-opacity="0.62"/><stop offset="0.250" stop-color="#525252" stop-opacity="0.88"/><stop offset="0.375" stop-color="#525252" stop-opacity="0.96"/><stop offset="0.500" stop-color="#525252" stop-opacity="1.00"/><stop offset="0.625" stop-color="#525252" stop-opacity="1.00"/><stop offset="0.750" stop-color="#525252" stop-opacity="1.00"/><stop offset="0.875" stop-color="#525252" stop-opacity="1.00"/><stop offset="1.000" stop-color="#525252" stop-opacity="1.00"/></linearGradient><linearGradient id="g40" gradientUnits="userSpaceOnUse" x1="805.0" y1="505.0" x2="1584.0" y2="389.3"><stop offset="0.000" stop-color="#525252" stop-opacity="0.89"/><stop offset="0.125" stop-color="#525252" stop-opacity="0.89"/><stop offset="0.250" stop-color="#525252" stop-opacity="0.89"/><stop offset="0.375" stop-color="#525252" stop-opacity="0.88"/><stop offset="0.500" stop-color="#525252" stop-opacity="0.87"/><stop offset="0.625" stop-color="#525252" stop-opacity="0.84"/><stop offset="0.750" stop-color="#525252" stop-opacity="0.80"/><stop offset="0.875" stop-color="#525252" stop-opacity="0.67"/><stop offset="1.000" stop-color="#525252" stop-opacity="0.47"/></linearGradient><linearGradient id="g41" gradientUnits="userSpaceOnUse" x1="894.8" y1="311.7" x2="1075.4" y2="1008.0"><stop offset="0.000" stop-color="#525252" stop-opacity="0.02"/><stop offset="0.125" stop-color="#525252" stop-opacity="0.63"/><stop offset="0.250" stop-color="#525252" stop-opacity="0.89"/><stop offset="0.375" stop-color="#525252" stop-opacity="0.96"/><stop offset="0.500" stop-color="#525252" stop-opacity="1.00"/><stop offset="0.625" stop-color="#525252" stop-opacity="1.00"/><stop offset="0.750" stop-color="#525252" stop-opacity="1.00"/><stop offset="0.875" stop-color="#525252" stop-opacity="1.00"/><stop offset="1.000" stop-color="#525252" stop-opacity="1.00"/></linearGradient><linearGradient id="g42" gradientUnits="userSpaceOnUse" x1="805.0" y1="520.9" x2="1584.0" y2="399.3"><stop offset="0.000" stop-color="#525252" stop-opacity="0.90"/><stop offset="0.125" stop-color="#525252" stop-opacity="0.90"/><stop offset="0.250" stop-color="#525252" stop-opacity="0.90"/><stop offset="0.375" stop-color="#525252" stop-opacity="0.90"/><stop offset="0.500" stop-color="#525252" stop-opacity="0.88"/><stop offset="0.625" stop-color="#525252" stop-opacity="0.86"/><stop offset="0.750" stop-color="#525252" stop-opacity="0.83"/><stop offset="0.875" stop-color="#525252" stop-opacity="0.75"/><stop offset="1.000" stop-color="#525252" stop-opacity="0.57"/></linearGradient><linearGradient id="g43" gradientUnits="userSpaceOnUse" x1="911.2" y1="310.8" x2="1194.2" y2="1008.0"><stop offset="0.000" stop-color="#525252" stop-opacity="0.02"/><stop offset="0.125" stop-color="#525252" stop-opacity="0.63"/><stop offset="0.250" stop-color="#525252" stop-opacity="0.89"/><stop offset="0.375" stop-color="#525252" stop-opacity="0.97"/><stop offset="0.500" stop-color="#525252" stop-opacity="1.00"/><stop offset="0.625" stop-color="#525252" stop-opacity="1.00"/><stop offset="0.750" stop-color="#525252" stop-opacity="1.00"/><stop offset="0.875" stop-color="#525252" stop-opacity="1.00"/><stop offset="1.000" stop-color="#525252" stop-opacity="1.00"/></linearGradient><linearGradient id="g44" gradientUnits="userSpaceOnUse" x1="805.0" y1="538.6" x2="1584.0" y2="410.3"><stop offset="0.000" stop-color="#525252" stop-opacity="0.92"/><stop offset="0.125" stop-color="#525252" stop-opacity="0.92"/><stop offset="0.250" stop-color="#525252" stop-opacity="0.92"/><stop offset="0.375" stop-color="#525252" stop-opacity="0.91"/><stop offset="0.500" stop-color="#525252" stop-opacity="0.90"/><stop offset="0.625" stop-color="#525252" stop-opacity="0.88"/><stop offset="0.750" stop-color="#525252" stop-opacity="0.85"/><stop offset="0.875" stop-color="#525252" stop-opacity="0.81"/><stop offset="1.000" stop-color="#525252" stop-opacity="0.67"/></linearGradient><linearGradient id="g45" gradientUnits="userSpaceOnUse" x1="927.4" y1="309.9" x2="1313.1" y2="1008.0"><stop offset="0.000" stop-color="#525252" stop-opacity="0.02"/><stop offset="0.125" stop-color="#525252" stop-opacity="0.64"/><stop offset="0.250" stop-color="#525252" stop-opacity="0.90"/><stop offset="0.375" stop-color="#525252" stop-opacity="0.97"/><stop offset="0.500" stop-color="#525252" stop-opacity="1.00"/><stop offset="0.625" stop-color="#525252" stop-opacity="1.00"/><stop offset="0.750" stop-color="#525252" stop-opacity="1.00"/><stop offset="0.875" stop-color="#525252" stop-opacity="1.00"/><stop offset="1.000" stop-color="#525252" stop-opacity="1.00"/></linearGradient><linearGradient id="g46" gradientUnits="userSpaceOnUse" x1="805.0" y1="558.3" x2="1584.0" y2="422.6"><stop offset="0.000" stop-color="#525252" stop-opacity="0.93"/><stop offset="0.125" stop-color="#525252" stop-opacity="0.93"/><stop offset="0.250" stop-color="#525252" stop-opacity="0.93"/><stop offset="0.375" stop-color="#525252" stop-opacity="0.93"/><stop offset="0.500" stop-color="#525252" stop-opacity="0.91"/><stop offset="0.625" stop-color="#525252" stop-opacity="0.89"/><stop offset="0.750" stop-color="#525252" stop-opacity="0.87"/><stop offset="0.875" stop-color="#525252" stop-opacity="0.83"/><stop offset="1.000" stop-color="#525252" stop-opacity="0.76"/></linearGradient><linearGradient id="g47" gradientUnits="userSpaceOnUse" x1="943.3" y1="308.9" x2="1432.0" y2="1008.0"><stop offset="0.000" stop-color="#525252" stop-opacity="0.02"/><stop offset="0.125" stop-color="#525252" stop-opacity="0.64"/><stop offset="0.250" stop-color="#525252" stop-opacity="0.90"/><stop offset="0.375" stop-color="#525252" stop-opacity="0.97"/><stop offset="0.500" stop-color="#525252" stop-opacity="1.00"/><stop offset="0.625" stop-color="#525252" stop-opacity="1.00"/><stop offset="0.750" stop-color="#525252" stop-opacity="1.00"/><stop offset="0.875" stop-color="#525252" stop-opacity="1.00"/><stop offset="1.000" stop-color="#525252" stop-opacity="1.00"/></linearGradient><linearGradient id="g48" gradientUnits="userSpaceOnUse" x1="805.0" y1="580.5" x2="1584.0" y2="436.5"><stop offset="0.000" stop-color="#525252" stop-opacity="0.95"/><stop offset="0.125" stop-color="#525252" stop-opacity="0.95"/><stop offset="0.250" stop-color="#525252" stop-opacity="0.95"/><stop offset="0.375" stop-color="#525252" stop-opacity="0.94"/><stop offset="0.500" stop-color="#525252" stop-opacity="0.93"/><stop offset="0.625" stop-color="#525252" stop-opacity="0.91"/><stop offset="0.750" stop-color="#525252" stop-opacity="0.88"/><stop offset="0.875" stop-color="#525252" stop-opacity="0.85"/><stop offset="1.000" stop-color="#525252" stop-opacity="0.80"/></linearGradient><linearGradient id="g49" gradientUnits="userSpaceOnUse" x1="958.9" y1="308.0" x2="1550.9" y2="1008.0"><stop offset="0.000" stop-color="#525252" stop-opacity="0.02"/><stop offset="0.125" stop-color="#525252" stop-opacity="0.65"/><stop offset="0.250" stop-color="#525252" stop-opacity="0.90"/><stop offset="0.375" stop-color="#525252" stop-opacity="0.98"/><stop offset="0.500" stop-color="#525252" stop-opacity="1.00"/><stop offset="0.625" stop-color="#525252" stop-opacity="1.00"/><stop offset="0.750" stop-color="#525252" stop-opacity="1.00"/><stop offset="0.875" stop-color="#525252" stop-opacity="1.00"/><stop offset="1.000" stop-color="#525252" stop-opacity="1.00"/></linearGradient><linearGradient id="g50" gradientUnits="userSpaceOnUse" x1="805.0" y1="634.1" x2="1584.0" y2="469.9"><stop offset="0.000" stop-color="#525252" stop-opacity="0.98"/><stop offset="0.125" stop-color="#525252" stop-opacity="0.98"/><stop offset="0.250" stop-color="#525252" stop-opacity="0.98"/><stop offset="0.375" stop-color="#525252" stop-opacity="0.97"/><stop offset="0.500" stop-color="#525252" stop-opacity="0.96"/><stop offset="0.625" stop-color="#525252" stop-opacity="0.95"/><stop offset="0.750" stop-color="#525252" stop-opacity="0.92"/><stop offset="0.875" stop-color="#525252" stop-opacity="0.89"/><stop offset="1.000" stop-color="#525252" stop-opacity="0.85"/></linearGradient><linearGradient id="g51" gradientUnits="userSpaceOnUse" x1="992.9" y1="309.3" x2="1584.0" y2="828.3"><stop offset="0.000" stop-color="#525252" stop-opacity="0.02"/><stop offset="0.125" stop-color="#525252" stop-opacity="0.44"/><stop offset="0.250" stop-color="#525252" stop-opacity="0.85"/><stop offset="0.375" stop-color="#525252" stop-opacity="0.93"/><stop offset="0.500" stop-color="#525252" stop-opacity="0.97"/><stop offset="0.625" stop-color="#525252" stop-opacity="1.00"/><stop offset="0.750" stop-color="#525252" stop-opacity="1.00"/><stop offset="0.875" stop-color="#525252" stop-opacity="1.00"/><stop offset="1.000" stop-color="#525252" stop-opacity="1.00"/></linearGradient><linearGradient id="g52" gradientUnits="userSpaceOnUse" x1="805.0" y1="666.9" x2="1584.0" y2="490.4"><stop offset="0.000" stop-color="#525252" stop-opacity="0.99"/><stop offset="0.125" stop-color="#525252" stop-opacity="0.99"/><stop offset="0.250" stop-color="#525252" stop-opacity="0.99"/><stop offset="0.375" stop-color="#525252" stop-opacity="0.99"/><stop offset="0.500" stop-color="#525252" stop-opacity="0.98"/><stop offset="0.625" stop-color="#525252" stop-opacity="0.96"/><stop offset="0.750" stop-color="#525252" stop-opacity="0.94"/><stop offset="0.875" stop-color="#525252" stop-opacity="0.91"/><stop offset="1.000" stop-color="#525252" stop-opacity="0.87"/></linearGradient><linearGradient id="g53" gradientUnits="userSpaceOnUse" x1="1008.2" y1="308.4" x2="1584.0" y2="756.3"><stop offset="0.000" stop-color="#525252" stop-opacity="0.02"/><stop offset="0.125" stop-color="#525252" stop-opacity="0.35"/><stop offset="0.250" stop-color="#525252" stop-opacity="0.83"/><stop offset="0.375" stop-color="#525252" stop-opacity="0.90"/><stop offset="0.500" stop-color="#525252" stop-opacity="0.95"/><stop offset="0.625" stop-color="#525252" stop-opacity="0.98"/><stop offset="0.750" stop-color="#525252" stop-opacity="1.00"/><stop offset="0.875" stop-color="#525252" stop-opacity="1.00"/><stop offset="1.000" stop-color="#525252" stop-opacity="1.00"/></linearGradient><linearGradient id="g54" gradientUnits="userSpaceOnUse" x1="805.0" y1="705.1" x2="1584.0" y2="514.3"><stop offset="0.000" stop-color="#525252" stop-opacity="1.00"/><stop offset="0.125" stop-color="#525252" stop-opacity="1.00"/><stop offset="0.250" stop-color="#525252" stop-opacity="1.00"/><stop offset="0.375" stop-color="#525252" stop-opacity="1.00"/><stop offset="0.500" stop-color="#525252" stop-opacity="1.00"/><stop offset="0.625" stop-color="#525252" stop-opacity="0.98"/><stop offset="0.750" stop-color="#525252" stop-opacity="0.96"/><stop offset="0.875" stop-color="#525252" stop-opacity="0.93"/><stop offset="1.000" stop-color="#525252" stop-opacity="0.89"/></linearGradient><linearGradient id="g55" gradientUnits="userSpaceOnUse" x1="1023.3" y1="307.5" x2="1584.0" y2="699.1"><stop offset="0.000" stop-color="#525252" stop-opacity="0.02"/><stop offset="0.125" stop-color="#525252" stop-opacity="0.28"/><stop offset="0.250" stop-color="#525252" stop-opacity="0.75"/><stop offset="0.375" stop-color="#525252" stop-opacity="0.87"/><stop offset="0.500" stop-color="#525252" stop-opacity="0.92"/><stop offset="0.625" stop-color="#525252" stop-opacity="0.96"/><stop offset="0.750" stop-color="#525252" stop-opacity="0.98"/><stop offset="0.875" stop-color="#525252" stop-opacity="0.99"/><stop offset="1.000" stop-color="#525252" stop-opacity="1.00"/></linearGradient><linearGradient id="g56" gradientUnits="userSpaceOnUse" x1="805.0" y1="750.0" x2="1584.0" y2="542.3"><stop offset="0.000" stop-color="#525252" stop-opacity="1.00"/><stop offset="0.125" stop-color="#525252" stop-opacity="1.00"/><stop offset="0.250" stop-color="#525252" stop-opacity="1.00"/><stop offset="0.375" stop-color="#525252" stop-opacity="1.00"/><stop offset="0.500" stop-color="#525252" stop-opacity="1.00"/><stop offset="0.625" stop-color="#525252" stop-opacity="1.00"/><stop offset="0.750" stop-color="#525252" stop-opacity="0.98"/><stop offset="0.875" stop-color="#525252" stop-opacity="0.95"/><stop offset="1.000" stop-color="#525252" stop-opacity="0.92"/></linearGradient><linearGradient id="g57" gradientUnits="userSpaceOnUse" x1="1038.1" y1="306.6" x2="1584.0" y2="652.5"><stop offset="0.000" stop-color="#525252" stop-opacity="0.02"/><stop offset="0.125" stop-color="#525252" stop-opacity="0.23"/><stop offset="0.250" stop-color="#525252" stop-opacity="0.65"/><stop offset="0.375" stop-color="#525252" stop-opacity="0.85"/><stop offset="0.500" stop-color="#525252" stop-opacity="0.90"/><stop offset="0.625" stop-color="#525252" stop-opacity="0.93"/><stop offset="0.750" stop-color="#525252" stop-opacity="0.96"/><stop offset="0.875" stop-color="#525252" stop-opacity="0.97"/><stop offset="1.000" stop-color="#525252" stop-opacity="0.99"/></linearGradient><linearGradient id="g58" gradientUnits="userSpaceOnUse" x1="805.0" y1="803.6" x2="1584.0" y2="575.8"><stop offset="0.000" stop-color="#525252" stop-opacity="1.00"/><stop offset="0.125" stop-color="#525252" stop-opacity="1.00"/><stop offset="0.250" stop-color="#525252" stop-opacity="1.00"/><stop offset="0.375" stop-color="#525252" stop-opacity="1.00"/><stop offset="0.500" stop-color="#525252" stop-opacity="1.00"/><stop offset="0.625" stop-color="#525252" stop-opacity="1.00"/><stop offset="0.750" stop-color="#525252" stop-opacity="1.00"/><stop offset="0.875" stop-color="#525252" stop-opacity="0.97"/><stop offset="1.000" stop-color="#525252" stop-opacity="0.94"/></linearGradient><linearGradient id="g59" gradientUnits="userSpaceOnUse" x1="1052.6" y1="305.8" x2="1584.0" y2="613.8"><stop offset="0.000" stop-color="#525252" stop-opacity="0.02"/><stop offset="0.125" stop-color="#525252" stop-opacity="0.19"/><stop offset="0.250" stop-color="#525252" stop-opacity="0.54"/><stop offset="0.375" stop-color="#525252" stop-opacity="0.83"/><stop offset="0.500" stop-color="#525252" stop-opacity="0.88"/><stop offset="0.625" stop-color="#525252" stop-opacity="0.91"/><stop offset="0.750" stop-color="#525252" stop-opacity="0.94"/><stop offset="0.875" stop-color="#525252" stop-opacity="0.95"/><stop offset="1.000" stop-color="#525252" stop-opacity="0.97"/></linearGradient><linearGradient id="g60" gradientUnits="userSpaceOnUse" x1="1072.5" y1="307.9" x2="1584.0" y2="581.1"><stop offset="0.000" stop-color="#525252" stop-opacity="0.02"/><stop offset="0.125" stop-color="#525252" stop-opacity="0.17"/><stop offset="0.250" stop-color="#525252" stop-opacity="0.47"/><stop offset="0.375" stop-color="#525252" stop-opacity="0.78"/><stop offset="0.500" stop-color="#525252" stop-opacity="0.86"/><stop offset="0.625" stop-color="#525252" stop-opacity="0.89"/><stop offset="0.750" stop-color="#525252" stop-opacity="0.91"/><stop offset="0.875" stop-color="#525252" stop-opacity="0.93"/><stop offset="1.000" stop-color="#525252" stop-opacity="0.95"/></linearGradient><linearGradient id="g61" gradientUnits="userSpaceOnUse" x1="1087.0" y1="307.0" x2="1584.0" y2="553.2"><stop offset="0.000" stop-color="#525252" stop-opacity="0.02"/><stop offset="0.125" stop-color="#525252" stop-opacity="0.15"/><stop offset="0.250" stop-color="#525252" stop-opacity="0.40"/><stop offset="0.375" stop-color="#525252" stop-opacity="0.70"/><stop offset="0.500" stop-color="#525252" stop-opacity="0.84"/><stop offset="0.625" stop-color="#525252" stop-opacity="0.87"/><stop offset="0.750" stop-color="#525252" stop-opacity="0.89"/><stop offset="0.875" stop-color="#525252" stop-opacity="0.91"/><stop offset="1.000" stop-color="#525252" stop-opacity="0.93"/></linearGradient><linearGradient id="g62" gradientUnits="userSpaceOnUse" x1="1101.2" y1="306.1" x2="1584.0" y2="529.1"><stop offset="0.000" stop-color="#525252" stop-opacity="0.02"/><stop offset="0.125" stop-color="#525252" stop-opacity="0.12"/><stop offset="0.250" stop-color="#525252" stop-opacity="0.33"/><stop offset="0.375" stop-color="#525252" stop-opacity="0.61"/><stop offset="0.500" stop-color="#525252" stop-opacity="0.81"/><stop offset="0.625" stop-color="#525252" stop-opacity="0.85"/><stop offset="0.750" stop-color="#525252" stop-opacity="0.87"/><stop offset="0.875" stop-color="#525252" stop-opacity="0.89"/><stop offset="1.000" stop-color="#525252" stop-opacity="0.91"/></linearGradient><linearGradient id="g63" gradientUnits="userSpaceOnUse" x1="1115.2" y1="305.2" x2="1584.0" y2="508.0"><stop offset="0.000" stop-color="#525252" stop-opacity="0.02"/><stop offset="0.125" stop-color="#525252" stop-opacity="0.11"/><stop offset="0.250" stop-color="#525252" stop-opacity="0.28"/><stop offset="0.375" stop-color="#525252" stop-opacity="0.52"/><stop offset="0.500" stop-color="#525252" stop-opacity="0.74"/><stop offset="0.625" stop-color="#525252" stop-opacity="0.83"/><stop offset="0.750" stop-color="#525252" stop-opacity="0.85"/><stop offset="0.875" stop-color="#525252" stop-opacity="0.87"/><stop offset="1.000" stop-color="#525252" stop-opacity="0.89"/></linearGradient><linearGradient id="g64" gradientUnits="userSpaceOnUse" x1="963.7" y1="237.1" x2="1584.0" y2="489.5"><stop offset="0.000" stop-color="#525252" stop-opacity="0.02"/><stop offset="0.125" stop-color="#525252" stop-opacity="0.36"/><stop offset="0.250" stop-color="#525252" stop-opacity="0.52"/><stop offset="0.375" stop-color="#525252" stop-opacity="0.63"/><stop offset="0.500" stop-color="#525252" stop-opacity="0.72"/><stop offset="0.625" stop-color="#525252" stop-opacity="0.78"/><stop offset="0.750" stop-color="#525252" stop-opacity="0.82"/><stop offset="0.875" stop-color="#525252" stop-opacity="0.85"/><stop offset="1.000" stop-color="#525252" stop-opacity="0.87"/></linearGradient><linearGradient id="g65" gradientUnits="userSpaceOnUse" x1="1150.1" y1="306.5" x2="1584.0" y2="473.0"><stop offset="0.000" stop-color="#525252" stop-opacity="0.02"/><stop offset="0.125" stop-color="#525252" stop-opacity="0.09"/><stop offset="0.250" stop-color="#525252" stop-opacity="0.21"/><stop offset="0.375" stop-color="#525252" stop-opacity="0.39"/><stop offset="0.500" stop-color="#525252" stop-opacity="0.58"/><stop offset="0.625" stop-color="#525252" stop-opacity="0.75"/><stop offset="0.750" stop-color="#525252" stop-opacity="0.82"/><stop offset="0.875" stop-color="#525252" stop-opacity="0.84"/><stop offset="1.000" stop-color="#525252" stop-opacity="0.85"/></linearGradient><linearGradient id="g66" gradientUnits="userSpaceOnUse" x1="1163.8" y1="305.6" x2="1584.0" y2="458.3"><stop offset="0.000" stop-color="#525252" stop-opacity="0.02"/><stop offset="0.125" stop-color="#525252" stop-opacity="0.08"/><stop offset="0.250" stop-color="#525252" stop-opacity="0.18"/><stop offset="0.375" stop-color="#525252" stop-opacity="0.33"/><stop offset="0.500" stop-color="#525252" stop-opacity="0.50"/><stop offset="0.625" stop-color="#525252" stop-opacity="0.67"/><stop offset="0.750" stop-color="#525252" stop-opacity="0.79"/><stop offset="0.875" stop-color="#525252" stop-opacity="0.82"/><stop offset="1.000" stop-color="#525252" stop-opacity="0.83"/></linearGradient><linearGradient id="g67" gradientUnits="userSpaceOnUse" x1="1177.2" y1="304.7" x2="1584.0" y2="445.1"><stop offset="0.000" stop-color="#525252" stop-opacity="0.02"/><stop offset="0.125" stop-color="#525252" stop-opacity="0.07"/><stop offset="0.250" stop-color="#525252" stop-opacity="0.16"/><stop offset="0.375" stop-color="#525252" stop-opacity="0.28"/><stop offset="0.500" stop-color="#525252" stop-opacity="0.43"/><stop offset="0.625" stop-color="#525252" stop-opacity="0.59"/><stop offset="0.750" stop-color="#525252" stop-opacity="0.72"/><stop offset="0.875" stop-color="#525252" stop-opacity="0.80"/><stop offset="1.000" stop-color="#525252" stop-opacity="0.82"/></linearGradient><linearGradient id="g68" gradientUnits="userSpaceOnUse" x1="1199.3" y1="306.8" x2="1584.0" y2="433.2"><stop offset="0.000" stop-color="#525252" stop-opacity="0.02"/><stop offset="0.125" stop-color="#525252" stop-opacity="0.07"/><stop offset="0.250" stop-color="#525252" stop-opacity="0.15"/><stop offset="0.375" stop-color="#525252" stop-opacity="0.25"/><stop offset="0.500" stop-color="#525252" stop-opacity="0.38"/><stop offset="0.625" stop-color="#525252" stop-opacity="0.52"/><stop offset="0.750" stop-color="#525252" stop-opacity="0.65"/><stop offset="0.875" stop-color="#525252" stop-opacity="0.74"/><stop offset="1.000" stop-color="#525252" stop-opacity="0.79"/></linearGradient><linearGradient id="g69" gradientUnits="userSpaceOnUse" x1="1212.6" y1="305.9" x2="1584.0" y2="422.3"><stop offset="0.000" stop-color="#525252" stop-opacity="0.02"/><stop offset="0.125" stop-color="#525252" stop-opacity="0.06"/><stop offset="0.250" stop-color="#525252" stop-opacity="0.13"/><stop offset="0.375" stop-color="#525252" stop-opacity="0.21"/><stop offset="0.500" stop-color="#525252" stop-opacity="0.32"/><stop offset="0.625" stop-color="#525252" stop-opacity="0.44"/><stop offset="0.750" stop-color="#525252" stop-opacity="0.56"/><stop offset="0.875" stop-color="#525252" stop-opacity="0.67"/><stop offset="1.000" stop-color="#525252" stop-opacity="0.75"/></linearGradient><linearGradient id="g70" gradientUnits="userSpaceOnUse" x1="1225.7" y1="305.1" x2="1584.0" y2="412.4"><stop offset="0.000" stop-color="#525252" stop-opacity="0.02"/><stop offset="0.125" stop-color="#525252" stop-opacity="0.05"/><stop offset="0.250" stop-color="#525252" stop-opacity="0.11"/><stop offset="0.375" stop-color="#525252" stop-opacity="0.18"/><stop offset="0.500" stop-color="#525252" stop-opacity="0.27"/><stop offset="0.625" stop-color="#525252" stop-opacity="0.38"/><stop offset="0.750" stop-color="#525252" stop-opacity="0.49"/><stop offset="0.875" stop-color="#525252" stop-opacity="0.59"/><stop offset="1.000" stop-color="#525252" stop-opacity="0.68"/></linearGradient><linearGradient id="g71" gradientUnits="userSpaceOnUse" x1="1248.8" y1="307.2" x2="1584.0" y2="403.4"><stop offset="0.000" stop-color="#525252" stop-opacity="0.02"/><stop offset="0.125" stop-color="#525252" stop-opacity="0.06"/><stop offset="0.250" stop-color="#525252" stop-opacity="0.10"/><stop offset="0.375" stop-color="#525252" stop-opacity="0.17"/><stop offset="0.500" stop-color="#525252" stop-opacity="0.24"/><stop offset="0.625" stop-color="#525252" stop-opacity="0.33"/><stop offset="0.750" stop-color="#525252" stop-opacity="0.42"/><stop offset="0.875" stop-color="#525252" stop-opacity="0.52"/><stop offset="1.000" stop-color="#525252" stop-opacity="0.61"/></linearGradient><linearGradient id="g72" gradientUnits="userSpaceOnUse" x1="1261.8" y1="306.3" x2="1584.0" y2="395.0"><stop offset="0.000" stop-color="#525252" stop-opacity="0.02"/><stop offset="0.125" stop-color="#525252" stop-opacity="0.05"/><stop offset="0.250" stop-color="#525252" stop-opacity="0.09"/><stop offset="0.375" stop-color="#525252" stop-opacity="0.14"/><stop offset="0.500" stop-color="#525252" stop-opacity="0.21"/><stop offset="0.625" stop-color="#525252" stop-opacity="0.28"/><stop offset="0.750" stop-color="#525252" stop-opacity="0.36"/><stop offset="0.875" stop-color="#525252" stop-opacity="0.45"/><stop offset="1.000" stop-color="#525252" stop-opacity="0.53"/></linearGradient><linearGradient id="g73" gradientUnits="userSpaceOnUse" x1="1274.6" y1="305.4" x2="1584.0" y2="387.3"><stop offset="0.000" stop-color="#525252" stop-opacity="0.02"/><stop offset="0.125" stop-color="#525252" stop-opacity="0.04"/><stop offset="0.250" stop-color="#525252" stop-opacity="0.08"/><stop offset="0.375" stop-color="#525252" stop-opacity="0.12"/><stop offset="0.500" stop-color="#525252" stop-opacity="0.18"/><stop offset="0.625" stop-color="#525252" stop-opacity="0.24"/><stop offset="0.750" stop-color="#525252" stop-opacity="0.31"/><stop offset="0.875" stop-color="#525252" stop-opacity="0.38"/><stop offset="1.000" stop-color="#525252" stop-opacity="0.46"/></linearGradient><linearGradient id="g74" gradientUnits="userSpaceOnUse" x1="1021.1" y1="236.8" x2="1584.0" y2="380.2"><stop offset="0.000" stop-color="#525252" stop-opacity="0.02"/><stop offset="0.125" stop-color="#525252" stop-opacity="0.19"/><stop offset="0.250" stop-color="#525252" stop-opacity="0.39"/><stop offset="0.375" stop-color="#525252" stop-opacity="0.48"/><stop offset="0.500" stop-color="#525252" stop-opacity="0.55"/><stop offset="0.625" stop-color="#525252" stop-opacity="0.60"/><stop offset="0.750" stop-color="#525252" stop-opacity="0.64"/><stop offset="0.875" stop-color="#525252" stop-opacity="0.68"/><stop offset="1.000" stop-color="#525252" stop-opacity="0.70"/></linearGradient><linearGradient id="g75" gradientUnits="userSpaceOnUse" x1="1311.3" y1="306.6" x2="1584.0" y2="373.6"><stop offset="0.000" stop-color="#525252" stop-opacity="0.02"/><stop offset="0.125" stop-color="#525252" stop-opacity="0.04"/><stop offset="0.250" stop-color="#525252" stop-opacity="0.07"/><stop offset="0.375" stop-color="#525252" stop-opacity="0.10"/><stop offset="0.500" stop-color="#525252" stop-opacity="0.13"/><stop offset="0.625" stop-color="#525252" stop-opacity="0.18"/><stop offset="0.750" stop-color="#525252" stop-opacity="0.23"/><stop offset="0.875" stop-color="#525252" stop-opacity="0.28"/><stop offset="1.000" stop-color="#525252" stop-opacity="0.33"/></linearGradient><linearGradient id="g76" gradientUnits="userSpaceOnUse" x1="1323.7" y1="305.8" x2="1584.0" y2="367.5"><stop offset="0.000" stop-color="#525252" stop-opacity="0.02"/><stop offset="0.125" stop-color="#525252" stop-opacity="0.04"/><stop offset="0.250" stop-color="#525252" stop-opacity="0.06"/><stop offset="0.375" stop-color="#525252" stop-opacity="0.08"/><stop offset="0.500" stop-color="#525252" stop-opacity="0.11"/><stop offset="0.625" stop-color="#525252" stop-opacity="0.15"/><stop offset="0.750" stop-color="#525252" stop-opacity="0.19"/><stop offset="0.875" stop-color="#525252" stop-opacity="0.23"/><stop offset="1.000" stop-color="#525252" stop-opacity="0.28"/></linearGradient><linearGradient id="g77" gradientUnits="userSpaceOnUse" x1="1348.8" y1="307.9" x2="1584.0" y2="361.8"><stop offset="0.000" stop-color="#525252" stop-opacity="0.02"/><stop offset="0.125" stop-color="#525252" stop-opacity="0.04"/><stop offset="0.250" stop-color="#525252" stop-opacity="0.06"/><stop offset="0.375" stop-color="#525252" stop-opacity="0.08"/><stop offset="0.500" stop-color="#525252" stop-opacity="0.10"/><stop offset="0.625" stop-color="#525252" stop-opacity="0.13"/><stop offset="0.750" stop-color="#525252" stop-opacity="0.16"/><stop offset="0.875" stop-color="#525252" stop-opacity="0.20"/><stop offset="1.000" stop-color="#525252" stop-opacity="0.24"/></linearGradient><linearGradient id="g78" gradientUnits="userSpaceOnUse" x1="1361.1" y1="307.0" x2="1584.0" y2="356.4"><stop offset="0.000" stop-color="#525252" stop-opacity="0.02"/><stop offset="0.125" stop-color="#525252" stop-opacity="0.03"/><stop offset="0.250" stop-color="#525252" stop-opacity="0.05"/><stop offset="0.375" stop-color="#525252" stop-opacity="0.07"/><stop offset="0.500" stop-color="#525252" stop-opacity="0.09"/><stop offset="0.625" stop-color="#525252" stop-opacity="0.11"/><stop offset="0.750" stop-color="#525252" stop-opacity="0.14"/><stop offset="0.875" stop-color="#525252" stop-opacity="0.17"/><stop offset="1.000" stop-color="#525252" stop-opacity="0.20"/></linearGradient><linearGradient id="g79" gradientUnits="userSpaceOnUse" x1="1387.2" y1="309.1" x2="1584.0" y2="351.4"><stop offset="0.000" stop-color="#525252" stop-opacity="0.02"/><stop offset="0.125" stop-color="#525252" stop-opacity="0.04"/><stop offset="0.250" stop-color="#525252" stop-opacity="0.05"/><stop offset="0.375" stop-color="#525252" stop-opacity="0.06"/><stop offset="0.500" stop-color="#525252" stop-opacity="0.08"/><stop offset="0.625" stop-color="#525252" stop-opacity="0.10"/><stop offset="0.750" stop-color="#525252" stop-opacity="0.12"/><stop offset="0.875" stop-color="#525252" stop-opacity="0.14"/><stop offset="1.000" stop-color="#525252" stop-opacity="0.17"/></linearGradient><linearGradient id="g80" gradientUnits="userSpaceOnUse" x1="1399.3" y1="308.2" x2="1584.0" y2="346.7"><stop offset="0.000" stop-color="#525252" stop-opacity="0.02"/><stop offset="0.125" stop-color="#525252" stop-opacity="0.03"/><stop offset="0.250" stop-color="#525252" stop-opacity="0.04"/><stop offset="0.375" stop-color="#525252" stop-opacity="0.05"/><stop offset="0.500" stop-color="#525252" stop-opacity="0.07"/><stop offset="0.625" stop-color="#525252" stop-opacity="0.08"/><stop offset="0.750" stop-color="#525252" stop-opacity="0.10"/><stop offset="0.875" stop-color="#525252" stop-opacity="0.12"/><stop offset="1.000" stop-color="#525252" stop-opacity="0.14"/></linearGradient><linearGradient id="g81" gradientUnits="userSpaceOnUse" x1="1411.2" y1="307.3" x2="1584.0" y2="342.2"><stop offset="0.000" stop-color="#525252" stop-opacity="0.02"/><stop offset="0.125" stop-color="#525252" stop-opacity="0.03"/><stop offset="0.250" stop-color="#525252" stop-opacity="0.04"/><stop offset="0.375" stop-color="#525252" stop-opacity="0.05"/><stop offset="0.500" stop-color="#525252" stop-opacity="0.06"/><stop offset="0.625" stop-color="#525252" stop-opacity="0.07"/><stop offset="0.750" stop-color="#525252" stop-opacity="0.09"/><stop offset="0.875" stop-color="#525252" stop-opacity="0.10"/><stop offset="1.000" stop-color="#525252" stop-opacity="0.12"/></linearGradient><linearGradient id="g82" gradientUnits="userSpaceOnUse" x1="1438.4" y1="309.5" x2="1584.0" y2="338.1"><stop offset="0.000" stop-color="#525252" stop-opacity="0.02"/><stop offset="0.125" stop-color="#525252" stop-opacity="0.03"/><stop offset="0.250" stop-color="#525252" stop-opacity="0.04"/><stop offset="0.375" stop-color="#525252" stop-opacity="0.04"/><stop offset="0.500" stop-color="#525252" stop-opacity="0.05"/><stop offset="0.625" stop-color="#525252" stop-opacity="0.06"/><stop offset="0.750" stop-color="#525252" stop-opacity="0.07"/><stop offset="0.875" stop-color="#525252" stop-opacity="0.09"/><stop offset="1.000" stop-color="#525252" stop-opacity="0.10"/></linearGradient><linearGradient id="g83" gradientUnits="userSpaceOnUse" x1="1450.1" y1="308.6" x2="1584.0" y2="334.1"><stop offset="0.000" stop-color="#525252" stop-opacity="0.02"/><stop offset="0.125" stop-color="#525252" stop-opacity="0.03"/><stop offset="0.250" stop-color="#525252" stop-opacity="0.03"/><stop offset="0.375" stop-color="#525252" stop-opacity="0.04"/><stop offset="0.500" stop-color="#525252" stop-opacity="0.05"/><stop offset="0.625" stop-color="#525252" stop-opacity="0.05"/><stop offset="0.750" stop-color="#525252" stop-opacity="0.06"/><stop offset="0.875" stop-color="#525252" stop-opacity="0.07"/><stop offset="1.000" stop-color="#525252" stop-opacity="0.08"/></linearGradient><linearGradient id="g84" gradientUnits="userSpaceOnUse" x1="1077.4" y1="236.4" x2="1584.0" y2="330.4"><stop offset="0.000" stop-color="#525252" stop-opacity="0.02"/><stop offset="0.125" stop-color="#525252" stop-opacity="0.11"/><stop offset="0.250" stop-color="#525252" stop-opacity="0.28"/><stop offset="0.375" stop-color="#525252" stop-opacity="0.38"/><stop offset="0.500" stop-color="#525252" stop-opacity="0.44"/><stop offset="0.625" stop-color="#525252" stop-opacity="0.48"/><stop offset="0.750" stop-color="#525252" stop-opacity="0.52"/><stop offset="0.875" stop-color="#525252" stop-opacity="0.55"/><stop offset="1.000" stop-color="#525252" stop-opacity="0.57"/></linearGradient><linearGradient id="g85" gradientUnits="userSpaceOnUse" x1="1135.4" y1="236.4" x2="1584.0" y2="301.9"><stop offset="0.000" stop-color="#525252" stop-opacity="0.02"/><stop offset="0.125" stop-color="#525252" stop-opacity="0.07"/><stop offset="0.250" stop-color="#525252" stop-opacity="0.17"/><stop offset="0.375" stop-color="#525252" stop-opacity="0.29"/><stop offset="0.500" stop-color="#525252" stop-opacity="0.36"/><stop offset="0.625" stop-color="#525252" stop-opacity="0.39"/><stop offset="0.750" stop-color="#525252" stop-opacity="0.42"/><stop offset="0.875" stop-color="#525252" stop-opacity="0.45"/><stop offset="1.000" stop-color="#525252" stop-opacity="0.47"/></linearGradient><linearGradient id="g86" gradientUnits="userSpaceOnUse" x1="1190.2" y1="236.1" x2="1584.0" y2="283.4"><stop offset="0.000" stop-color="#525252" stop-opacity="0.02"/><stop offset="0.125" stop-color="#525252" stop-opacity="0.05"/><stop offset="0.250" stop-color="#525252" stop-opacity="0.11"/><stop offset="0.375" stop-color="#525252" stop-opacity="0.18"/><stop offset="0.500" stop-color="#525252" stop-opacity="0.25"/><stop offset="0.625" stop-color="#525252" stop-opacity="0.32"/><stop offset="0.750" stop-color="#525252" stop-opacity="0.35"/><stop offset="0.875" stop-color="#525252" stop-opacity="0.37"/><stop offset="1.000" stop-color="#525252" stop-opacity="0.39"/></linearGradient><linearGradient id="g87" gradientUnits="userSpaceOnUse" x1="1247.7" y1="236.1" x2="1584.0" y2="270.5"><stop offset="0.000" stop-color="#525252" stop-opacity="0.02"/><stop offset="0.125" stop-color="#525252" stop-opacity="0.04"/><stop offset="0.250" stop-color="#525252" stop-opacity="0.07"/><stop offset="0.375" stop-color="#525252" stop-opacity="0.11"/><stop offset="0.500" stop-color="#525252" stop-opacity="0.16"/><stop offset="0.625" stop-color="#525252" stop-opacity="0.21"/><stop offset="0.750" stop-color="#525252" stop-opacity="0.26"/><stop offset="0.875" stop-color="#525252" stop-opacity="0.30"/><stop offset="1.000" stop-color="#525252" stop-opacity="0.33"/></linearGradient><linearGradient id="g88" gradientUnits="userSpaceOnUse" x1="1309.6" y1="236.5" x2="1584.0" y2="260.9"><stop offset="0.000" stop-color="#525252" stop-opacity="0.02"/><stop offset="0.125" stop-color="#525252" stop-opacity="0.03"/><stop offset="0.250" stop-color="#525252" stop-opacity="0.05"/><stop offset="0.375" stop-color="#525252" stop-opacity="0.07"/><stop offset="0.500" stop-color="#525252" stop-opacity="0.10"/><stop offset="0.625" stop-color="#525252" stop-opacity="0.13"/><stop offset="0.750" stop-color="#525252" stop-opacity="0.16"/><stop offset="0.875" stop-color="#525252" stop-opacity="0.19"/><stop offset="1.000" stop-color="#525252" stop-opacity="0.22"/></linearGradient><linearGradient id="g89" gradientUnits="userSpaceOnUse" x1="1372.7" y1="236.9" x2="1584.0" y2="253.5"><stop offset="0.000" stop-color="#525252" stop-opacity="0.02"/><stop offset="0.125" stop-color="#525252" stop-opacity="0.03"/><stop offset="0.250" stop-color="#525252" stop-opacity="0.04"/><stop offset="0.375" stop-color="#525252" stop-opacity="0.05"/><stop offset="0.500" stop-color="#525252" stop-opacity="0.06"/><stop offset="0.625" stop-color="#525252" stop-opacity="0.08"/><stop offset="0.750" stop-color="#525252" stop-opacity="0.09"/><stop offset="0.875" stop-color="#525252" stop-opacity="0.11"/><stop offset="1.000" stop-color="#525252" stop-opacity="0.13"/></linearGradient><linearGradient id="g90" gradientUnits="userSpaceOnUse" x1="1127.3" y1="213.8" x2="1584.0" y2="242.9"><stop offset="0.000" stop-color="#525252" stop-opacity="0.04"/><stop offset="0.125" stop-color="#525252" stop-opacity="0.08"/><stop offset="0.250" stop-color="#525252" stop-opacity="0.10"/><stop offset="0.375" stop-color="#525252" stop-opacity="0.12"/><stop offset="0.500" stop-color="#525252" stop-opacity="0.14"/><stop offset="0.625" stop-color="#525252" stop-opacity="0.15"/><stop offset="0.750" stop-color="#525252" stop-opacity="0.17"/><stop offset="0.875" stop-color="#525252" stop-opacity="0.18"/><stop offset="1.000" stop-color="#525252" stop-opacity="0.19"/></linearGradient><linearGradient id="g91" gradientUnits="userSpaceOnUse" x1="1326.2" y1="212.2" x2="1584.0" y2="220.7"><stop offset="0.000" stop-color="#525252" stop-opacity="0.02"/><stop offset="0.125" stop-color="#525252" stop-opacity="0.03"/><stop offset="0.250" stop-color="#525252" stop-opacity="0.04"/><stop offset="0.375" stop-color="#525252" stop-opacity="0.05"/><stop offset="0.500" stop-color="#525252" stop-opacity="0.06"/><stop offset="0.625" stop-color="#525252" stop-opacity="0.07"/><stop offset="0.750" stop-color="#525252" stop-opacity="0.08"/><stop offset="0.875" stop-color="#525252" stop-opacity="0.08"/><stop offset="1.000" stop-color="#525252" stop-opacity="0.09"/></linearGradient><linearGradient id="g92" gradientUnits="userSpaceOnUse" x1="883.9" y1="216.1" x2="1584.0" y2="921.6"><stop offset="0.000" stop-color="#9c3a47" stop-opacity="0.32"/><stop offset="0.125" stop-color="#9c3a47" stop-opacity="0.87"/><stop offset="0.250" stop-color="#9c3a47" stop-opacity="0.96"/><stop offset="0.375" stop-color="#9c3a47" stop-opacity="0.99"/><stop offset="0.500" stop-color="#9c3a47" stop-opacity="1.00"/><stop offset="0.625" stop-color="#9c3a47" stop-opacity="1.00"/><stop offset="0.750" stop-color="#9c3a47" stop-opacity="1.00"/><stop offset="0.875" stop-color="#9c3a47" stop-opacity="1.00"/><stop offset="1.000" stop-color="#9c3a47" stop-opacity="1.00"/></linearGradient></defs><line x1="805.0" y1="216.8" x2="1298.3" y2="212.1" stroke="#525252" stroke-opacity="0.04" stroke-width="1.4"/><line x1="805.0" y1="226.0" x2="1584.0" y2="215.1" stroke="url(#g1)" stroke-width="1.4"/><line x1="805.0" y1="243.2" x2="1116.2" y2="236.3" stroke="#525252" stroke-opacity="0.03" stroke-width="1.4"/><line x1="805.0" y1="246.9" x2="1253.2" y2="236.1" stroke="#525252" stroke-opacity="0.04" stroke-width="1.4"/><line x1="805.0" y1="251.2" x2="1584.0" y2="230.9" stroke="url(#g2)" stroke-width="1.4"/><line x1="805.0" y1="256.4" x2="1463.7" y2="237.5" stroke="url(#g3)" stroke-width="1.4"/><line x1="805.0" y1="262.6" x2="1562.8" y2="238.6" stroke="url(#g4)" stroke-width="1.4"/><line x1="805.0" y1="270.3" x2="1584.0" y2="242.8" stroke="url(#g5)" stroke-width="1.4"/><line x1="805.0" y1="280.1" x2="1584.0" y2="248.9" stroke="url(#g6)" stroke-width="1.4"/><line x1="805.0" y1="292.8" x2="1584.0" y2="256.8" stroke="url(#g7)" stroke-width="1.4"/><line x1="805.0" y1="310.1" x2="1584.0" y2="267.6" stroke="url(#g8)" stroke-width="1.4"/><line x1="805.0" y1="318.9" x2="1010.3" y2="306.8" stroke="#525252" stroke-opacity="0.03" stroke-width="1.4"/><line x1="805.0" y1="321.3" x2="1057.6" y2="306.2" stroke="#525252" stroke-opacity="0.03" stroke-width="1.4"/><line x1="805.0" y1="323.9" x2="1104.3" y2="305.5" stroke="#525252" stroke-opacity="0.03" stroke-width="1.4"/><line x1="805.0" y1="326.5" x2="1150.5" y2="304.9" stroke="#525252" stroke-opacity="0.04" stroke-width="1.4"/><line x1="805.0" y1="329.2" x2="1176.1" y2="305.6" stroke="#525252" stroke-opacity="0.04" stroke-width="1.4"/><line x1="805.0" y1="332.1" x2="1221.9" y2="304.9" stroke="url(#g9)" stroke-width="1.4"/><line x1="805.0" y1="335.1" x2="1584.0" y2="283.2" stroke="url(#g10)" stroke-width="1.4"/><line x1="805.0" y1="338.2" x2="1274.3" y2="306.2" stroke="url(#g11)" stroke-width="1.4"/><line x1="805.0" y1="341.4" x2="1319.8" y2="305.6" stroke="url(#g12)" stroke-width="1.4"/><line x1="805.0" y1="344.8" x2="1346.6" y2="306.2" stroke="url(#g13)" stroke-width="1.4"/><line x1="805.0" y1="348.4" x2="1373.8" y2="306.9" stroke="url(#g14)" stroke-width="1.4"/><line x1="805.0" y1="352.2" x2="1401.2" y2="307.6" stroke="url(#g15)" stroke-width="1.4"/><line x1="805.0" y1="356.1" x2="1429.1" y2="308.2" stroke="url(#g16)" stroke-width="1.4"/><line x1="805.0" y1="360.3" x2="1457.2" y2="308.9" stroke="url(#g17)" stroke-width="1.4"/><line x1="805.0" y1="364.7" x2="1485.7" y2="309.6" stroke="url(#g18)" stroke-width="1.4"/><line x1="805.0" y1="369.3" x2="1514.6" y2="310.3" stroke="url(#g19)" stroke-width="1.4"/><line x1="805.0" y1="374.1" x2="1584.0" y2="307.6" stroke="url(#g20)" stroke-width="1.4"/><line x1="805.0" y1="379.3" x2="1573.4" y2="311.8" stroke="url(#g21)" stroke-width="1.4"/><line x1="805.0" y1="384.8" x2="1584.0" y2="314.3" stroke="url(#g22)" stroke-width="1.4"/><line x1="805.0" y1="390.6" x2="1584.0" y2="317.9" stroke="url(#g23)" stroke-width="1.4"/><line x1="805.0" y1="396.8" x2="1584.0" y2="321.7" stroke="url(#g24)" stroke-width="1.4"/><line x1="805.0" y1="403.4" x2="1584.0" y2="325.9" stroke="url(#g25)" stroke-width="1.4"/><line x1="805.0" y1="410.4" x2="1584.0" y2="330.3" stroke="url(#g26)" stroke-width="1.4"/><line x1="805.0" y1="418.0" x2="1584.0" y2="335.0" stroke="url(#g27)" stroke-width="1.4"/><line x1="805.0" y1="426.0" x2="1584.0" y2="340.0" stroke="url(#g28)" stroke-width="1.4"/><line x1="805.0" y1="434.7" x2="1584.0" y2="345.5" stroke="url(#g29)" stroke-width="1.4"/><line x1="805.0" y1="444.1" x2="1584.0" y2="351.3" stroke="url(#g30)" stroke-width="1.4"/><line x1="845.2" y1="238.8" x2="805.0" y2="323.7" stroke="url(#g31)" stroke-width="1.4"/><line x1="805.0" y1="454.3" x2="1584.0" y2="357.7" stroke="url(#g32)" stroke-width="1.4"/><line x1="827.3" y1="312.3" x2="805.0" y2="380.5" stroke="url(#g33)" stroke-width="1.4"/><line x1="805.0" y1="465.3" x2="1584.0" y2="364.6" stroke="url(#g34)" stroke-width="1.4"/><line x1="844.4" y1="311.4" x2="805.0" y2="529.6" stroke="url(#g35)" stroke-width="1.4"/><line x1="805.0" y1="477.4" x2="1584.0" y2="372.1" stroke="url(#g36)" stroke-width="1.4"/><line x1="861.2" y1="310.4" x2="837.6" y2="1008.0" stroke="url(#g37)" stroke-width="1.4"/><line x1="805.0" y1="490.5" x2="1584.0" y2="380.3" stroke="url(#g38)" stroke-width="1.4"/><line x1="878.0" y1="312.7" x2="956.5" y2="1008.0" stroke="url(#g39)" stroke-width="1.4"/><line x1="805.0" y1="505.0" x2="1584.0" y2="389.3" stroke="url(#g40)" stroke-width="1.4"/><line x1="894.8" y1="311.7" x2="1075.4" y2="1008.0" stroke="url(#g41)" stroke-width="1.4"/><line x1="805.0" y1="520.9" x2="1584.0" y2="399.3" stroke="url(#g42)" stroke-width="1.4"/><line x1="911.2" y1="310.8" x2="1194.2" y2="1008.0" stroke="url(#g43)" stroke-width="1.4"/><line x1="805.0" y1="538.6" x2="1584.0" y2="410.3" stroke="url(#g44)" stroke-width="1.4"/><line x1="927.4" y1="309.9" x2="1313.1" y2="1008.0" stroke="url(#g45)" stroke-width="1.4"/><line x1="805.0" y1="558.3" x2="1584.0" y2="422.6" stroke="url(#g46)" stroke-width="1.4"/><line x1="943.3" y1="308.9" x2="1432.0" y2="1008.0" stroke="url(#g47)" stroke-width="1.4"/><line x1="805.0" y1="580.5" x2="1584.0" y2="436.5" stroke="url(#g48)" stroke-width="1.4"/><line x1="958.9" y1="308.0" x2="1550.9" y2="1008.0" stroke="url(#g49)" stroke-width="1.4"/><line x1="805.0" y1="634.1" x2="1584.0" y2="469.9" stroke="url(#g50)" stroke-width="1.4"/><line x1="992.9" y1="309.3" x2="1584.0" y2="828.3" stroke="url(#g51)" stroke-width="1.4"/><line x1="805.0" y1="666.9" x2="1584.0" y2="490.4" stroke="url(#g52)" stroke-width="1.4"/><line x1="1008.2" y1="308.4" x2="1584.0" y2="756.3" stroke="url(#g53)" stroke-width="1.4"/><line x1="805.0" y1="705.1" x2="1584.0" y2="514.3" stroke="url(#g54)" stroke-width="1.4"/><line x1="1023.3" y1="307.5" x2="1584.0" y2="699.1" stroke="url(#g55)" stroke-width="1.4"/><line x1="805.0" y1="750.0" x2="1584.0" y2="542.3" stroke="url(#g56)" stroke-width="1.4"/><line x1="1038.1" y1="306.6" x2="1584.0" y2="652.5" stroke="url(#g57)" stroke-width="1.4"/><line x1="805.0" y1="803.6" x2="1584.0" y2="575.8" stroke="url(#g58)" stroke-width="1.4"/><line x1="1052.6" y1="305.8" x2="1584.0" y2="613.8" stroke="url(#g59)" stroke-width="1.4"/><line x1="805.0" y1="868.8" x2="1584.0" y2="616.5" stroke="#525252" stroke-opacity="1.00" stroke-width="1.4"/><line x1="1072.5" y1="307.9" x2="1584.0" y2="581.1" stroke="url(#g60)" stroke-width="1.4"/><line x1="805.0" y1="949.6" x2="1584.0" y2="666.9" stroke="#525252" stroke-opacity="1.00" stroke-width="1.4"/><line x1="1087.0" y1="307.0" x2="1584.0" y2="553.2" stroke="url(#g61)" stroke-width="1.4"/><line x1="913.0" y1="1008.0" x2="1584.0" y2="731.2" stroke="#525252" stroke-opacity="1.00" stroke-width="1.4"/><line x1="1101.2" y1="306.1" x2="1584.0" y2="529.1" stroke="url(#g62)" stroke-width="1.4"/><line x1="1181.9" y1="1008.0" x2="1584.0" y2="815.9" stroke="#525252" stroke-opacity="1.00" stroke-width="1.4"/><line x1="1115.2" y1="305.2" x2="1584.0" y2="508.0" stroke="url(#g63)" stroke-width="1.4"/><line x1="1450.8" y1="1008.0" x2="1584.0" y2="932.4" stroke="#525252" stroke-opacity="1.00" stroke-width="1.4"/><line x1="963.7" y1="237.1" x2="1584.0" y2="489.5" stroke="url(#g64)" stroke-width="1.4"/><line x1="1150.1" y1="306.5" x2="1584.0" y2="473.0" stroke="url(#g65)" stroke-width="1.4"/><line x1="1163.8" y1="305.6" x2="1584.0" y2="458.3" stroke="url(#g66)" stroke-width="1.4"/><line x1="1177.2" y1="304.7" x2="1584.0" y2="445.1" stroke="url(#g67)" stroke-width="1.4"/><line x1="1199.3" y1="306.8" x2="1584.0" y2="433.2" stroke="url(#g68)" stroke-width="1.4"/><line x1="1212.6" y1="305.9" x2="1584.0" y2="422.3" stroke="url(#g69)" stroke-width="1.4"/><line x1="1225.7" y1="305.1" x2="1584.0" y2="412.4" stroke="url(#g70)" stroke-width="1.4"/><line x1="1248.8" y1="307.2" x2="1584.0" y2="403.4" stroke="url(#g71)" stroke-width="1.4"/><line x1="1261.8" y1="306.3" x2="1584.0" y2="395.0" stroke="url(#g72)" stroke-width="1.4"/><line x1="1274.6" y1="305.4" x2="1584.0" y2="387.3" stroke="url(#g73)" stroke-width="1.4"/><line x1="1021.1" y1="236.8" x2="1584.0" y2="380.2" stroke="url(#g74)" stroke-width="1.4"/><line x1="1311.3" y1="306.6" x2="1584.0" y2="373.6" stroke="url(#g75)" stroke-width="1.4"/><line x1="1323.7" y1="305.8" x2="1584.0" y2="367.5" stroke="url(#g76)" stroke-width="1.4"/><line x1="1348.8" y1="307.9" x2="1584.0" y2="361.8" stroke="url(#g77)" stroke-width="1.4"/><line x1="1361.1" y1="307.0" x2="1584.0" y2="356.4" stroke="url(#g78)" stroke-width="1.4"/><line x1="1387.2" y1="309.1" x2="1584.0" y2="351.4" stroke="url(#g79)" stroke-width="1.4"/><line x1="1399.3" y1="308.2" x2="1584.0" y2="346.7" stroke="url(#g80)" stroke-width="1.4"/><line x1="1411.2" y1="307.3" x2="1584.0" y2="342.2" stroke="url(#g81)" stroke-width="1.4"/><line x1="1438.4" y1="309.5" x2="1584.0" y2="338.1" stroke="url(#g82)" stroke-width="1.4"/><line x1="1450.1" y1="308.6" x2="1584.0" y2="334.1" stroke="url(#g83)" stroke-width="1.4"/><line x1="1077.4" y1="236.4" x2="1584.0" y2="330.4" stroke="url(#g84)" stroke-width="1.4"/><line x1="1490.0" y1="309.9" x2="1584.0" y2="326.9" stroke="#525252" stroke-opacity="0.04" stroke-width="1.4"/><line x1="1519.4" y1="312.1" x2="1584.0" y2="323.5" stroke="#525252" stroke-opacity="0.03" stroke-width="1.4"/><line x1="1530.7" y1="311.2" x2="1584.0" y2="320.3" stroke="#525252" stroke-opacity="0.03" stroke-width="1.4"/><line x1="1135.4" y1="236.4" x2="1584.0" y2="301.9" stroke="url(#g85)" stroke-width="1.4"/><line x1="1190.2" y1="236.1" x2="1584.0" y2="283.4" stroke="url(#g86)" stroke-width="1.4"/><line x1="1247.7" y1="236.1" x2="1584.0" y2="270.5" stroke="url(#g87)" stroke-width="1.4"/><line x1="1309.6" y1="236.5" x2="1584.0" y2="260.9" stroke="url(#g88)" stroke-width="1.4"/><line x1="1372.7" y1="236.9" x2="1584.0" y2="253.5" stroke="url(#g89)" stroke-width="1.4"/><line x1="1437.3" y1="237.3" x2="1584.0" y2="247.7" stroke="#525252" stroke-opacity="0.04" stroke-width="1.4"/><line x1="1127.3" y1="213.8" x2="1584.0" y2="242.9" stroke="url(#g90)" stroke-width="1.4"/><line x1="1326.2" y1="212.2" x2="1584.0" y2="220.7" stroke="url(#g91)" stroke-width="1.4"/><line x1="883.9" y1="216.1" x2="1584.0" y2="921.6" stroke="url(#g92)" stroke-width="1.6"/><line x1="805.0" y1="605.5" x2="1584.0" y2="452.1" stroke="#6f9e2e" stroke-opacity="0.99" stroke-width="1.6"/><polygon points="1135.67,478.95 1168.84,513.51 1256.75,497.24 1215.95,465.97" fill="#aa9383" fill-opacity="0.95"/><polygon points="1168.84,513.51 1256.75,497.24 1253.04,578.85 1170.43,598.24" fill="#9a7d66" fill-opacity="0.93"/><polygon points="1135.67,478.95 1168.84,513.51 1170.43,598.24 1138.96,556.89" fill="#a68b75" fill-opacity="0.93"/><clipPath id="cubesil"><polygon points="1135.67,478.95 1215.95,465.97 1256.75,497.24 1253.04,578.85 1170.43,598.24 1138.96,556.89"/></clipPath><g clip-path="url(#cubesil)"><path d="M985.08 492.80L1098.18 475.13" stroke="#6a5a4c" stroke-width="1.2" stroke-opacity="0.5"/><path d="M985.08 492.80L1023.22 586.74" stroke="#6a5a4c" stroke-width="1.2" stroke-opacity="0.5"/><path d="M1024.24 589.26L1061.71 681.57" stroke="#6a5a4c" stroke-width="1.2" stroke-opacity="0.5"/><path d="M991.23 507.94L1109.37 488.48" stroke="#6a5a4c" stroke-width="1.2" stroke-opacity="0.5"/><path d="M1025.00 486.57L1074.41 575.99" stroke="#6a5a4c" stroke-width="1.2" stroke-opacity="0.5"/><path d="M1075.72 578.37L1123.62 665.06" stroke="#6a5a4c" stroke-width="1.2" stroke-opacity="0.5"/><path d="M998.04 524.72L1121.69 503.17" stroke="#6a5a4c" stroke-width="1.2" stroke-opacity="0.5"/><path d="M1063.26 480.59L1122.85 565.82" stroke="#6a5a4c" stroke-width="1.2" stroke-opacity="0.5"/><path d="M1124.43 568.07L1181.46 649.64" stroke="#6a5a4c" stroke-width="1.2" stroke-opacity="0.5"/><path d="M1005.62 543.40L1135.32 519.42" stroke="#6a5a4c" stroke-width="1.2" stroke-opacity="0.5"/><path d="M1014.13 564.35L1150.47 537.50" stroke="#86b040" stroke-width="1.6" stroke-opacity="0.75"/><path d="M1214.35 549.06L1286.39 621.66" stroke="#d05a48" stroke-width="1.6" stroke-opacity="0.75"/><path d="M1255.94 540.26L1334.14 608.93" stroke="#6a5a4c" stroke-width="1.2" stroke-opacity="0.5"/><path d="M1034.65 614.90L1186.51 580.49" stroke="#6a5a4c" stroke-width="1.2" stroke-opacity="0.5"/><path d="M1191.22 579.42L1395.61 533.11" stroke="#6a5a4c" stroke-width="1.2" stroke-opacity="0.5"/><path d="M1295.50 531.89L1379.11 596.94" stroke="#6a5a4c" stroke-width="1.2" stroke-opacity="0.5"/><path d="M1047.18 645.77L1208.18 606.33" stroke="#6a5a4c" stroke-width="1.2" stroke-opacity="0.5"/><path d="M1213.14 605.11L1426.69 552.80" stroke="#6a5a4c" stroke-width="1.2" stroke-opacity="0.5"/><path d="M1333.18 523.93L1421.54 585.63" stroke="#6a5a4c" stroke-width="1.2" stroke-opacity="0.5"/><path d="M1061.71 681.57L1232.97 635.90" stroke="#6a5a4c" stroke-width="1.2" stroke-opacity="0.5"/><path d="M1238.21 634.51L1461.63 574.94" stroke="#6a5a4c" stroke-width="1.2" stroke-opacity="0.5"/><path d="M1369.11 516.33L1461.63 574.94" stroke="#6a5a4c" stroke-width="1.2" stroke-opacity="0.5"/></g><path d="M1135.67 478.95L1168.84 513.51M1168.84 513.51L1256.75 497.24M1256.75 497.24L1215.95 465.97M1215.95 465.97L1135.67 478.95M1168.84 513.51L1170.43 598.24M1256.75 497.24L1253.04 578.85M1135.67 478.95L1138.96 556.89M1170.43 598.24L1253.04 578.85M1170.43 598.24L1138.96 556.89" stroke="#1a1a1a" stroke-opacity="0.35" stroke-width="2.4" fill="none" stroke-linejoin="round"/><path d="M1135.67 478.95L1168.84 513.51M1168.84 513.51L1256.75 497.24M1256.75 497.24L1215.95 465.97M1215.95 465.97L1135.67 478.95M1168.84 513.51L1170.43 598.24M1256.75 497.24L1253.04 578.85M1135.67 478.95L1138.96 556.89M1170.43 598.24L1253.04 578.85M1170.43 598.24L1138.96 556.89" stroke="#fcc918" stroke-width="1.25" fill="none" stroke-linejoin="round"/></g></svg><svg class="a" style="left:1174.31px;top:508.861px;" width="40" height="40" viewBox="0 0 40 40">
      <circle cx="20" cy="20" r="9.6" fill="none" stroke="#f2f2f2" stroke-width="1.5"/>
      <circle cx="20" cy="20" r="9.6" fill="none" stroke="#e82a2a" stroke-width="1.5" stroke-dasharray="3.77 3.77" stroke-dashoffset="1.5"/>
      <path d="M20 2.5V15.5 M20 24.5V37" stroke="#000" stroke-width="1.4"/>
      <path d="M20 2.5V6 M20 34V37" stroke="#3b8ee0" stroke-width="1.4"/>
      <path d="M1.5 23.5 L15.5 21 M24.5 19 L38.5 16.5" stroke="#2a2a2a" stroke-width="1.1"/>
      <path d="M1.5 23.5 L4.5 23 M35.5 17 L38.5 16.5" stroke="#7dc52c" stroke-width="1.5"/>
      <path d="M12 12 L17.5 17.5 M22.5 22.5 L28 28" stroke="#3a3a3a" stroke-width="1"/>
      <circle cx="20" cy="20" r="3.3" fill="#f5a33a" stroke="#222" stroke-width="0.9"/>
    </svg><div class="a" style="left:813px;top:110px;width:38px;height:69.4px;background:#282828;border-radius:5px;box-shadow:0 0 0 1px #373737 inset;"></div><div class="a" style="left:813px;top:110px;width:38px;height:34.7px;background:#4772b3;border-radius:5px 5px 0 0;"></div><svg class="a" style="left:816px;top:111.35px;" width="32" height="32" viewBox="0 0 22 22"><rect x="3.8" y="3.8" width="14.4" height="14.4" fill="none" stroke="#f5a623" stroke-width="1.05" stroke-dasharray="2.2 1.6"/><path d="M9.2 7.6 L14.6 11.2 L11.6 11.9 L9.4 14.6 Z" fill="#e6e6e6"/></svg><svg class="a" style="left:843.5px;top:137.2px;" width="4.5" height="4.5" viewBox="0 0 4.5 4.5"><path d="M4.5 0V4.5H0Z" fill="#9db4d6"/></svg><div class="a" style="left:813px;top:144.2px;width:38px;height:1px;background:#353535;"></div><svg class="a" style="left:816px;top:146.05px;" width="32" height="32" viewBox="0 0 22 22"><circle cx="11" cy="11" r="7.6" fill="none" stroke="#f0f0f0" stroke-width="1"/><circle cx="11" cy="11" r="7.6" fill="none" stroke="#b02a2a" stroke-width="1" stroke-dasharray="3 3"/><path d="M11 6.5V10 M11 12V15.5 M6.5 11H10 M12 11H15.5" stroke="#8a8a8a" stroke-width="0.9"/></svg><div class="a" style="left:813px;top:184.5px;width:38px;height:138.8px;background:#282828;border-radius:5px;box-shadow:0 0 0 1px #373737 inset;"></div><svg class="a" style="left:816px;top:185.85px;" width="32" height="32" viewBox="0 0 22 22"><g fill="#e6e6e6"><path d="M11 2 L13.5 5.2 H8.5Z"/><path d="M11 20 L13.5 16.8 H8.5Z"/><path d="M2 11 L5.2 8.5 V13.5Z"/><path d="M20 11 L16.8 8.5 V13.5Z"/></g><path d="M11 5V8.5 M11 13.5V17 M5 11H8.5 M13.5 11H17" stroke="#e6e6e6" stroke-width="1.1"/></svg><div class="a" style="left:813px;top:218.7px;width:38px;height:1px;background:#353535;"></div><svg class="a" style="left:816px;top:220.55px;" width="32" height="32" viewBox="0 0 22 22"><path d="M4.8 9 A6.6 6.6 0 0 1 16.5 7.2 M17.2 13 A6.6 6.6 0 0 1 5.5 14.8" fill="none" stroke="#e6e6e6" stroke-width="1.1"/><path d="M3 10 H8 L5.5 13.5Z M14 12 H19 L16.5 8.5Z" fill="#e6e6e6"/><path d="M11 8.5 L13.5 11 L11 13.5 L8.5 11Z" fill="#a0a0a0"/></svg><div class="a" style="left:813px;top:253.4px;width:38px;height:1px;background:#353535;"></div><svg class="a" style="left:816px;top:255.25px;" width="32" height="32" viewBox="0 0 22 22"><path d="M7 3.5H18.5V15H14" fill="none" stroke="#9a9a9a" stroke-width="1.1"/><path d="M7 3.5 V8" stroke="#9a9a9a" stroke-width="1.1"/><rect x="4" y="10" width="8" height="8" fill="#e6e6e6"/><path d="M12 10 L16.5 5.5 M13.2 5.2H16.8V8.8" fill="none" stroke="#e6e6e6" stroke-width="1.1"/></svg><svg class="a" style="left:843.5px;top:281.1px;" width="4.5" height="4.5" viewBox="0 0 4.5 4.5"><path d="M4.5 0V4.5H0Z" fill="#7a7a7a"/></svg><div class="a" style="left:813px;top:288.1px;width:38px;height:1px;background:#353535;"></div><svg class="a" style="left:816px;top:289.95px;" width="32" height="32" viewBox="0 0 22 22"><circle cx="11" cy="11" r="7.5" fill="none" stroke="#e6e6e6" stroke-width="1.1" stroke-dasharray="3.5 2.4"/><rect x="8" y="8" width="6" height="6" fill="#e6e6e6"/><g fill="#e6e6e6"><path d="M11 1.8 L13 4.3 H9Z"/><path d="M11 20.2 L13 17.7 H9Z"/><path d="M1.8 11 L4.3 9 V13Z"/><path d="M20.2 11 L17.7 9 V13Z"/></g></svg><div class="a" style="left:813px;top:330px;width:38px;height:69.4px;background:#282828;border-radius:5px;box-shadow:0 0 0 1px #373737 inset;"></div><svg class="a" style="left:816px;top:331.35px;" width="32" height="32" viewBox="0 0 22 22"><path d="M5.5 14.5 L15.5 4.5 L17.5 6.5 L7.5 16.5 L4.5 17.5Z" fill="#e6e6e6"/><path d="M14.5 5.5L16.5 7.5" stroke="#282828" stroke-width="0.8"/><path d="M4 18.5 C7 21 9 15.5 12.5 15.5 C15 15.5 15.5 17.5 18.5 18.5" fill="none" stroke="#7ccf9e" stroke-width="1.1"/></svg><svg class="a" style="left:843.5px;top:357.2px;" width="4.5" height="4.5" viewBox="0 0 4.5 4.5"><path d="M4.5 0V4.5H0Z" fill="#7a7a7a"/></svg><div class="a" style="left:813px;top:364.2px;width:38px;height:1px;background:#353535;"></div><svg class="a" style="left:816px;top:366.05px;" width="32" height="32" viewBox="0 0 22 22"><path d="M4 3V18H19" fill="none" stroke="#e6e6e6" stroke-width="2"/><path d="M6 9 A9 9 0 0 1 15 17 H6Z" fill="#8fd8b0"/><path d="M6 6 A12 12 0 0 1 18 17" fill="none" stroke="#8fd8b0" stroke-width="1"/><path d="M3 5H5 M3 8H5 M3 11H5 M3 14H5 M8 19V17 M11 19V17 M14 19V17 M17 19V17" stroke="#282828" stroke-width="0.7"/></svg><div class="a" style="left:813px;top:405px;width:38px;height:34.7px;background:#282828;border-radius:5px;box-shadow:0 0 0 1px #373737 inset;"></div><svg class="a" style="left:816px;top:406.35px;" width="32" height="32" viewBox="0 0 22 22"><path d="M7 9.5H16V19H7Z M7 9.5 L10 6.5 H19 L16 9.5 M19 6.5 V16 L16 19" fill="none" stroke="#8fd8b0" stroke-width="1.1" stroke-linejoin="round"/><path d="M5 2V8 M2 5H8" stroke="#8fd8b0" stroke-width="1.6"/></svg><svg class="a" style="left:843.5px;top:432.2px;" width="4.5" height="4.5" viewBox="0 0 4.5 4.5"><path d="M4.5 0V4.5H0Z" fill="#7a7a7a"/></svg><div class="a" style="left:813px;top:445px;width:38px;height:416.4px;background:#282828;border-radius:5px;box-shadow:0 0 0 1px #373737 inset;"></div><svg class="a" style="left:816px;top:446.35px;" width="32" height="32" viewBox="0 0 22 22"><path d="M4 8.5 L7.5 5 H18.5 L15 8.5Z" fill="#8fd8b0"/><rect x="4" y="8.5" width="11" height="3.5" fill="#8fd8b0"/><path d="M15 8.5 L18.5 5 V8.5 L15 12Z" fill="#8fd8b0"/><path d="M4 8.5H15V19.5H4Z M4 12H15 M18.5 5 V16 L15 19.5" fill="none" stroke="#e6e6e6" stroke-width="1.1" stroke-linejoin="round"/></svg><svg class="a" style="left:843.5px;top:472.2px;" width="4.5" height="4.5" viewBox="0 0 4.5 4.5"><path d="M4.5 0V4.5H0Z" fill="#7a7a7a"/></svg><div class="a" style="left:813px;top:479.2px;width:38px;height:1px;background:#353535;"></div><svg class="a" style="left:816px;top:481.05px;" width="32" height="32" viewBox="0 0 22 22"><path d="M4 8.5H15V19.5H4Z M4 8.5 L7.5 5 H18.5 L15 8.5 M18.5 5 V16 L15 19.5" fill="none" stroke="#e6e6e6" stroke-width="1.1" stroke-linejoin="round"/><path d="M4.5 9H14.5V19H4.5Z M7.5 12H11.5V16H7.5Z" fill="#8fd8b0" fill-rule="evenodd"/><path d="M4.5 9L7.5 12 M14.5 9L11.5 12 M4.5 19L7.5 16 M14.5 19L11.5 16" stroke="#282828" stroke-width="0.7"/></svg><div class="a" style="left:813px;top:513.9px;width:38px;height:1px;background:#353535;"></div><svg class="a" style="left:816px;top:515.75px;" width="32" height="32" viewBox="0 0 22 22"><path d="M4 11 L7 7.5 H14 L15 11Z M14 7.5 L16.5 5.5 L18.5 9 L15 11Z" fill="#8fd8b0"/><path d="M4 11H15V19.5H4Z M15 11 L18.5 9 V16 L15 19.5 M4 11 L7 7.5 H14 L16.5 5.5" fill="none" stroke="#e6e6e6" stroke-width="1.1"/></svg><svg class="a" style="left:843.5px;top:541.6px;" width="4.5" height="4.5" viewBox="0 0 4.5 4.5"><path d="M4.5 0V4.5H0Z" fill="#7a7a7a"/></svg><div class="a" style="left:813px;top:548.6px;width:38px;height:1px;background:#353535;"></div><svg class="a" style="left:816px;top:550.45px;" width="32" height="32" viewBox="0 0 22 22"><path d="M4 8.5H15V19.5H4Z M4 8.5 L7.5 5 H18.5 L15 8.5 M18.5 5 V16 L15 19.5" fill="none" stroke="#e6e6e6" stroke-width="1.1" stroke-linejoin="round"/><path d="M9.5 19.5V8.5 L13 5" fill="none" stroke="#8fd8b0" stroke-width="1.3"/><path d="M8 8.5V19.5" stroke="#e6e6e6" stroke-width="1"/></svg><svg class="a" style="left:843.5px;top:576.3px;" width="4.5" height="4.5" viewBox="0 0 4.5 4.5"><path d="M4.5 0V4.5H0Z" fill="#7a7a7a"/></svg><div class="a" style="left:813px;top:583.3px;width:38px;height:1px;background:#353535;"></div><svg class="a" style="left:816px;top:585.15px;" width="32" height="32" viewBox="0 0 22 22"><path d="M4 8.5H15V19.5H4Z M4 8.5 L7.5 5 H18.5 L15 8.5 M18.5 5 V16 L15 19.5" fill="none" stroke="#e6e6e6" stroke-width="1.1" stroke-linejoin="round"/><path d="M13 4.8 L6.5 10 L10.5 18.5" fill="none" stroke="#8fd8b0" stroke-width="1.1"/><circle cx="13" cy="4.8" r="1.6" fill="#8fd8b0"/><circle cx="6.5" cy="10" r="1.6" fill="#8fd8b0"/><circle cx="10.5" cy="18.5" r="1.6" fill="#8fd8b0"/></svg><svg class="a" style="left:843.5px;top:611px;" width="4.5" height="4.5" viewBox="0 0 4.5 4.5"><path d="M4.5 0V4.5H0Z" fill="#7a7a7a"/></svg><div class="a" style="left:813px;top:618px;width:38px;height:1px;background:#353535;"></div><svg class="a" style="left:816px;top:619.85px;" width="32" height="32" viewBox="0 0 22 22"><path d="M7 4.5 L15 6.5 L16.5 16.5 L5 16.5 L4 10Z" fill="#8fd8b0"/><g fill="#f0f0f0"><circle cx="7" cy="4.5" r="1.5"/><circle cx="15.5" cy="7" r="1.5"/><circle cx="16.5" cy="16.5" r="1.5"/><circle cx="5" cy="16.5" r="1.5"/><circle cx="3.5" cy="11" r="1.5"/></g></svg><div class="a" style="left:813px;top:652.7px;width:38px;height:1px;background:#353535;"></div><svg class="a" style="left:816px;top:654.55px;" width="32" height="32" viewBox="0 0 22 22"><path d="M11 11 V3.5 A7.5 7.5 0 1 0 17.5 14.8Z" fill="#8fd8b0"/><path d="M11 11 L3.6 12.2 M11 11 L5.5 16 M11 11 L10 18.5 M11 11 L15.5 17 M11 11 L5 6" stroke="#282828" stroke-width="0.8"/><path d="M12.5 2.5 A8 8 0 0 1 19 9 L14 11.5" fill="none" stroke="#e6e6e6" stroke-width="1"/></svg><svg class="a" style="left:843.5px;top:680.4px;" width="4.5" height="4.5" viewBox="0 0 4.5 4.5"><path d="M4.5 0V4.5H0Z" fill="#7a7a7a"/></svg><div class="a" style="left:813px;top:687.4px;width:38px;height:1px;background:#353535;"></div><svg class="a" style="left:816px;top:689.25px;" width="32" height="32" viewBox="0 0 22 22"><path d="M4.5 9 C5 5.5 8 4.5 11 4.5 C15 4.5 17.5 6 17.5 10.5 C17.5 15 15 17 11 17 C7 17 4.5 15 4.5 12Z" fill="#d8c4ec"/><path d="M4.5 10.5 C8 9 14 9 17.5 10 M11 4.5 C10 8 10 13 11 17 M7 5.8 C6 9 6 13 7.5 16" fill="none" stroke="#6a5a78" stroke-width="0.8"/></svg><svg class="a" style="left:843.5px;top:715.1px;" width="4.5" height="4.5" viewBox="0 0 4.5 4.5"><path d="M4.5 0V4.5H0Z" fill="#7a7a7a"/></svg><div class="a" style="left:813px;top:722.1px;width:38px;height:1px;background:#353535;"></div><svg class="a" style="left:816px;top:723.95px;" width="32" height="32" viewBox="0 0 22 22"><path d="M7 10H16V19.5H7Z M7 10 L10 7 H19 L16 10 M19 7 V16.5 L16 19.5" fill="none" stroke="#e6e6e6" stroke-width="1.1"/><path d="M4.5 19.5V11 L8 7.5" fill="none" stroke="#e6e6e6" stroke-width="1.1"/><path d="M2 3.5H8 M2 3.5 L4.5 1.5 M2 3.5 L4.5 5.5" fill="none" stroke="#d8c4ec" stroke-width="1.2"/></svg><svg class="a" style="left:843.5px;top:749.8px;" width="4.5" height="4.5" viewBox="0 0 4.5 4.5"><path d="M4.5 0V4.5H0Z" fill="#7a7a7a"/></svg><div class="a" style="left:813px;top:756.8px;width:38px;height:1px;background:#353535;"></div><svg class="a" style="left:816px;top:758.65px;" width="32" height="32" viewBox="0 0 22 22"><rect x="7.5" y="7.5" width="7" height="7" fill="none" stroke="#e6e6e6" stroke-width="1"/><path d="M7.5 7.5 L14.5 14.5 M14.5 7.5 L7.5 14.5" stroke="#e6e6e6" stroke-width="0.9"/><path d="M14.5 7.5 L17 5 V15 L14.5 14.5" fill="none" stroke="#e6e6e6" stroke-width="0.9"/><g fill="#d8c4ec"><path d="M11 1 L13.5 4 H8.5Z"/><path d="M11 21 L13.5 18 H8.5Z"/><path d="M1 11 L4 8.5 V13.5Z"/><path d="M21 11 L18 8.5 V13.5Z"/></g></svg><svg class="a" style="left:843.5px;top:784.5px;" width="4.5" height="4.5" viewBox="0 0 4.5 4.5"><path d="M4.5 0V4.5H0Z" fill="#7a7a7a"/></svg><div class="a" style="left:813px;top:791.5px;width:38px;height:1px;background:#353535;"></div><svg class="a" style="left:816px;top:793.35px;" width="32" height="32" viewBox="0 0 22 22"><path d="M2.5 10 L9.5 5.5 L19 13 L12 17.5Z" fill="#d8c4ec"/><path d="M12 17.5 L19 13 V15 L12 19.5Z" fill="#b9a6cc"/><path d="M2.5 10 V12 L12 19.5 V17.5" fill="#c8b4dc"/><path d="M15 3.5H20 M15 3.5 L17 1.8 M15 3.5 L17 5.2" fill="none" stroke="#d8c4ec" stroke-width="1.1"/></svg><svg class="a" style="left:843.5px;top:819.2px;" width="4.5" height="4.5" viewBox="0 0 4.5 4.5"><path d="M4.5 0V4.5H0Z" fill="#7a7a7a"/></svg><div class="a" style="left:813px;top:826.2px;width:38px;height:1px;background:#353535;"></div><svg class="a" style="left:816px;top:828.05px;" width="32" height="32" viewBox="0 0 22 22"><path d="M6 8.5H17V19H6Z M6 8.5 L9.5 5 H19.5 V15.5 L17 19 M17 8.5 L19.5 5" fill="none" stroke="#e6e6e6" stroke-width="1.1"/><path d="M3 15 L9.5 8" stroke="#d8c4ec" stroke-width="1"/><path d="M3 15 L8 12" stroke="#e6e6e6" stroke-width="1"/><circle cx="3" cy="15" r="1.5" fill="#d8a8ef"/></svg><svg class="a" style="left:843.5px;top:853.9px;" width="4.5" height="4.5" viewBox="0 0 4.5 4.5"><path d="M4.5 0V4.5H0Z" fill="#7a7a7a"/></svg><div class="a" style="left:805px;top:50px;width:779px;height:25px;background:#303030;border-radius:4px 4px 0 0;"></div><div class="a" style="left:805px;top:75px;width:111px;height:25.5px;background:#303030;border-radius:0 0 5px 0;"></div><div class="a" style="left:1399px;top:75px;width:185px;height:25.5px;background:#303030;border-radius:0 0 0 5px;"></div><div class="a" style="left:814px;top:52px;width:30.2px;height:18.6px;background:#262626;border-radius:4px;box-shadow:0 0 0 1px #3a3a3a inset;"></div><svg class="a" style="left:817px;top:53px;" width="17" height="16" viewBox="0 0 17 16"><path d="M1.8 7.7H7.8 M1 11.3H14.9 M5.4 5.1 L3.6 14.9 M11.9 9.2 L12.5 14.9" stroke="#d6d6d6" stroke-width="1" fill="none"/><circle cx="11.6" cy="4.5" r="3.6" fill="#e8e8e8"/><path d="M9.6 4.6 A2 2 0 0 1 11.6 2.6" stroke="#888" stroke-width="0.9" fill="none"/></svg><svg class="a" style="left:834.5px;top:60.5px;" width="7" height="4" viewBox="0 0 7 4"><path d="M0.6 0.6 L3.5 3.4 L6.4 0.6" fill="none" stroke="#d6d6d6" stroke-width="1.3" stroke-linecap="round" stroke-linejoin="round"/></svg><div class="a" style="left:851px;top:52px;width:96.1px;height:18.6px;background:#262626;border-radius:4px;box-shadow:0 0 0 1px #3a3a3a inset;"></div><svg class="a" style="left:854.5px;top:53.5px;" width="16" height="16" viewBox="0 0 16 16"><rect x="1" y="1.8" width="2.6" height="2.6" fill="none" stroke="#cfcfcf" stroke-width="0.9"/><rect x="1" y="10.5" width="2.6" height="2.6" fill="none" stroke="#cfcfcf" stroke-width="0.9"/><rect x="10" y="10.5" width="2.6" height="2.6" fill="none" stroke="#cfcfcf" stroke-width="0.9"/><rect x="9.5" y="0.5" width="4" height="4" fill="#e6e6e6"/><path d="M2.3 4.4V10.5 M3.6 11.8H10 M3.6 3.1H9.5 M11.3 4.5V10.5" stroke="#cfcfcf" stroke-width="0.9"/></svg><div class="t" style="left:876.50px;top:55.63px;font-size:11.30px;color:#e6e6e6;letter-spacing:0.336px;">Edit Mode</div><svg class="a" style="left:937px;top:60.8px;" width="7" height="4" viewBox="0 0 7 4"><path d="M0.6 0.6 L3.5 3.4 L6.4 0.6" fill="none" stroke="#d6d6d6" stroke-width="1.3" stroke-linecap="round" stroke-linejoin="round"/></svg><div class="a" style="left:953.9px;top:52px;width:19px;height:18.6px;background:#545454;border-radius:4px 0px 0px 4px;"></div><div class="a" style="left:972.9px;top:52px;width:19.1px;height:18.6px;background:#4772b3;border-radius:0px 0px 0px 0px;"></div><div class="a" style="left:972.4px;top:52px;width:1px;height:18.6px;background:rgba(0,0,0,0.25);"></div><div class="a" style="left:992px;top:52px;width:19.9px;height:18.6px;background:#545454;border-radius:0px 4px 4px 0px;"></div><div class="a" style="left:991.5px;top:52px;width:1px;height:18.6px;background:rgba(0,0,0,0.25);"></div><div class="a" style="left:954.9px;top:70.6px;width:56px;height:1px;background:rgba(0,0,0,0.18);"></div><svg class="a" style="left:956px;top:54px;" width="15" height="15" viewBox="0 0 15 15"><path d="M4 2.5H12.5V10.5L10 13.5H4" fill="none" stroke="#c8c8c8" stroke-width="0.9"/><rect x="1" y="6.5" width="4" height="4" fill="#e8e8e8"/></svg><svg class="a" style="left:975px;top:54px;" width="15" height="15" viewBox="0 0 15 15"><path d="M2 13.5V4.5 L4.5 2H13V10.5 L10.5 13.5" fill="none" stroke="#eef3fa" stroke-width="0.9"/><rect x="6.5" y="6" width="2.6" height="8" fill="#fff"/></svg><svg class="a" style="left:995px;top:54px;" width="15" height="15" viewBox="0 0 15 15"><path d="M5 2.5L3 4.5 M5 2.5H13.5V10.5L11.5 12.5" fill="none" stroke="#c8c8c8" stroke-width="0.9"/><rect x="1.5" y="4.5" width="9.5" height="9.5" fill="#e8e8e8"/></svg><div class="t" style="left:1025.20px;top:55.72px;font-size:11.20px;color:#d9d9d9;letter-spacing:0.407px;">View</div><div class="t" style="left:1066.20px;top:55.72px;font-size:11.20px;color:#d9d9d9;letter-spacing:0.062px;">Select</div><div class="t" style="left:1113.20px;top:55.72px;font-size:11.20px;color:#d9d9d9;letter-spacing:0.491px;">Add</div><div class="t" style="left:1150.60px;top:55.72px;font-size:11.20px;color:#d9d9d9;letter-spacing:0.029px;">Mesh</div><div class="t" style="left:1194.00px;top:55.72px;font-size:11.20px;color:#d9d9d9;letter-spacing:0.392px;">Vertex</div><div class="t" style="left:1243.50px;top:55.72px;font-size:11.20px;color:#d9d9d9;letter-spacing:0.111px;">Edge</div><div class="t" style="left:1285.50px;top:55.72px;font-size:11.20px;color:#d9d9d9;letter-spacing:-0.074px;">Face</div><div class="t" style="left:1325.40px;top:55.72px;font-size:11.20px;color:#d9d9d9;letter-spacing:-0.280px;">UV</div><div class="a" style="left:1365.9px;top:52px;width:76.4px;height:18.6px;background:#262626;border-radius:4px;box-shadow:0 0 0 1px #3a3a3a inset;"></div><svg class="a" style="left:1368.5px;top:53.5px;" width="17" height="16" viewBox="0 0 17 16"><path d="M3 1.5V14 H15.5 M3 14 L11 6 M1.2 3.5 L3 1.2 L4.8 3.5 M13.5 12.2 L15.8 14 L13.5 15.8 M8 5.5H11.5V9" fill="none" stroke="#d6d6d6" stroke-width="1"/><circle cx="3" cy="14" r="1.3" fill="none" stroke="#d6d6d6" stroke-width="0.9"/></svg><div class="t" style="left:1391.20px;top:55.63px;font-size:11.30px;color:#e6e6e6;letter-spacing:0.173px;">Global</div><svg class="a" style="left:1432px;top:60.8px;" width="7" height="4" viewBox="0 0 7 4"><path d="M0.6 0.6 L3.5 3.4 L6.4 0.6" fill="none" stroke="#d6d6d6" stroke-width="1.3" stroke-linecap="round" stroke-linejoin="round"/></svg><div class="a" style="left:1448.9px;top:52px;width:30.2px;height:18.6px;background:#262626;border-radius:4px;box-shadow:0 0 0 1px #3a3a3a inset;"></div><svg class="a" style="left:1452px;top:53.5px;" width="15" height="15" viewBox="0 0 15 15"><path d="M6.5 4.3 A4 4 0 1 1 12 9.8 M8.5 10.7 A4 4 0 1 1 3 5.2" fill="none" stroke="#e0e0e0" stroke-width="1.1"/><circle cx="7.5" cy="7.5" r="1.3" fill="#eee"/></svg><svg class="a" style="left:1470px;top:60.8px;" width="7" height="4" viewBox="0 0 7 4"><path d="M0.6 0.6 L3.5 3.4 L6.4 0.6" fill="none" stroke="#d6d6d6" stroke-width="1.3" stroke-linecap="round" stroke-linejoin="round"/></svg><div class="a" style="left:1486.2px;top:52px;width:18px;height:18.6px;background:#545454;border-radius:4px 0px 0px 4px;"></div><div class="a" style="left:1504.2px;top:52px;width:32px;height:18.6px;background:#262626;border-radius:0px 4px 4px 0px;"></div><div class="a" style="left:1503.7px;top:52px;width:1px;height:18.6px;background:rgba(0,0,0,0.25);"></div><div class="a" style="left:1487.2px;top:70.6px;width:48px;height:1px;background:rgba(0,0,0,0.18);"></div><svg class="a" style="left:1487.4px;top:53.4px;" width="15" height="15" viewBox="0 0 15 15"><path d="M9.30 13.68 L11.99 10.99 A5.5 5.5 0 0 0 4.21 3.21 L1.52 5.90 L3.57 7.95 L6.26 5.26 A2.6 2.6 0 0 1 9.94 8.94 L7.25 11.63 Z" fill="none" stroke="#c4c4c4" stroke-width="0.95" stroke-linejoin="miter"/></svg><svg class="a" style="left:1508.2px;top:53.6px;" width="15" height="15" viewBox="0 0 15 15"><rect x="9.9" y="0.5" width="4" height="3.9" fill="#e8e8e8"/><path d="M0.3 6.7V13.4 M6.3 6.7V13.4 M12.5 6.7V13.4 M0.3 10.1H12.5 M3.2 9V11.2 M9.6 9V11.2" fill="none" stroke="#d0d0d0" stroke-width="1"/></svg><svg class="a" style="left:1526.7px;top:60.1px;" width="7" height="4" viewBox="0 0 7 4"><path d="M0.6 0.6 L3.5 3.4 L6.4 0.6" fill="none" stroke="#d6d6d6" stroke-width="1.3" stroke-linecap="round" stroke-linejoin="round"/></svg><div class="a" style="left:1543px;top:52px;width:41px;height:18.6px;background:#2a2a2a;border-radius:4px 0 0 4px;"></div><div class="a" style="left:1543px;top:52px;width:18.3px;height:18.6px;background:#545454;border-radius:4px 0 0 4px;"></div><svg class="a" style="left:1544.5px;top:53.5px;" width="15" height="15" viewBox="0 0 15 15"><circle cx="7.5" cy="7.5" r="6.2" fill="none" stroke="#bcbcbc" stroke-width="0.9"/><circle cx="7.5" cy="7.5" r="2.2" fill="#f0f0f0"/></svg><svg class="a" style="left:1565px;top:54px;" width="15" height="14" viewBox="0 0 15 14"><path d="M0.8 12.5 C3.5 12.5 4.2 1.2 6.7 1.2 C9.2 1.2 10 12.5 12.8 12.5" fill="none" stroke="#7a7a7a" stroke-width="0.9"/></svg><div class="a" style="left:813.3px;top:79.1px;width:17.6px;height:18px;background:#4772b3;border-radius:4px 0px 0px 4px;"></div><div class="a" style="left:830.9px;top:79.1px;width:19.4px;height:18px;background:#545454;border-radius:0px 0px 0px 0px;"></div><div class="a" style="left:830.4px;top:79.1px;width:1px;height:18px;background:rgba(0,0,0,0.25);"></div><div class="a" style="left:850.3px;top:79.1px;width:19.1px;height:18px;background:#545454;border-radius:0px 0px 0px 0px;"></div><div class="a" style="left:849.8px;top:79.1px;width:1px;height:18px;background:rgba(0,0,0,0.25);"></div><div class="a" style="left:869.4px;top:79.1px;width:19px;height:18px;background:#545454;border-radius:0px 0px 0px 0px;"></div><div class="a" style="left:868.9px;top:79.1px;width:1px;height:18px;background:rgba(0,0,0,0.25);"></div><div class="a" style="left:888.4px;top:79.1px;width:18.4px;height:18px;background:#545454;border-radius:0px 4px 4px 0px;"></div><div class="a" style="left:887.9px;top:79.1px;width:1px;height:18px;background:rgba(0,0,0,0.25);"></div><div class="a" style="left:814.3px;top:97.1px;width:91.5px;height:1px;background:rgba(0,0,0,0.18);"></div><svg class="a" style="left:814px;top:80px;" width="17" height="17" viewBox="0 0 17 17"><path d="M1.6 1.6H14.4V14.4H1.6Z" fill="none" stroke="#fff" stroke-width="1.35" stroke-dasharray="2.1 1.75 2 1.1 2 1.75 2.1 0"/></svg><svg class="a" style="left:833px;top:80px;" width="17" height="17" viewBox="0 0 17 17"><path d="M1 5H4.9V0.9H15.1V11H11.2V15.1H1Z" fill="#cdcdcd"/></svg><svg class="a" style="left:852px;top:80px;" width="17" height="17" viewBox="0 0 17 17"><path d="M5.1 0.9H14.8V11H10V6.2H5.1Z" fill="#cdcdcd"/><path d="M1.6 5.6H10.4V14.4H1.6Z" fill="none" stroke="#d8d8d8" stroke-width="1.2" stroke-dasharray="1.6 1.6 0 5.6 1.6 1.6 1.6 1.6 2 1.2 2 1.6 1.6 1.6 1.6 1.6 2 1.2 2 1.6"/></svg><svg class="a" style="left:871px;top:80px;" width="17" height="17" viewBox="0 0 17 17"><path d="M5.1 0.9H15.1V11H11.2V15.1H1V5H5.1Z M5.1 5V11H11.2V5Z" fill="#cdcdcd" fill-rule="evenodd"/></svg><svg class="a" style="left:889.5px;top:80px;" width="17" height="17" viewBox="0 0 17 17"><path d="M1.6 1.6H14.4V14.4H1.6Z" fill="none" stroke="#d8d8d8" stroke-width="1.2" stroke-dasharray="2.1 1.75 2 1.1 2 1.75 2.1 0"/><rect x="4.6" y="4.6" width="6.8" height="6.8" fill="#cdcdcd"/></svg><svg class="a" style="left:1408px;top:80.5px;" width="17" height="16" viewBox="0 0 17 16"><path d="M8 1V15" stroke="#eee" stroke-width="1" stroke-dasharray="1.5 1"/><path d="M6.5 3 C3 0.5 0.5 2 1.5 5 C2.2 7 4.5 8 6.5 8 C4 8.5 2 10.5 3 13 C4 14.5 6 14 6.5 13 M9.5 3 C13 0.5 15.5 2 14.5 5 C13.8 7 11.5 8 9.5 8 C12 8.5 14 10.5 13 13 C12 14.5 10 14 9.5 13" fill="none" stroke="#cfcfcf" stroke-width="0.9"/></svg><div class="a" style="left:1427.8px;top:79.1px;width:16.9px;height:18px;background:#545454;border-radius:4px 0px 0px 4px;"></div><div class="a" style="left:1444.7px;top:79.1px;width:17.3px;height:18px;background:#545454;border-radius:0px 0px 0px 0px;"></div><div class="a" style="left:1444.2px;top:79.1px;width:1px;height:18px;background:rgba(0,0,0,0.25);"></div><div class="a" style="left:1462px;top:79.1px;width:17.1px;height:18px;background:#545454;border-radius:0px 4px 4px 0px;"></div><div class="a" style="left:1461.5px;top:79.1px;width:1px;height:18px;background:rgba(0,0,0,0.25);"></div><div class="a" style="left:1428.8px;top:97.1px;width:49.3px;height:1px;background:rgba(0,0,0,0.18);"></div><div class="t" style="left:1432.20px;top:82.63px;font-size:11.30px;color:#e6e6e6;">X</div><div class="t" style="left:1449.30px;top:82.63px;font-size:11.30px;color:#e6e6e6;">Y</div><div class="t" style="left:1466.80px;top:82.63px;font-size:11.30px;color:#e6e6e6;">Z</div><div class="a" style="left:1486px;top:79.1px;width:17.8px;height:18px;background:#545454;border-radius:4px 4px 4px 4px;"></div><div class="a" style="left:1487px;top:97.1px;width:15.8px;height:1px;background:rgba(0,0,0,0.18);"></div><svg class="a" style="left:1487.5px;top:80px;" width="15" height="16" viewBox="0 0 15 16"><rect x="10.5" y="1.5" width="3" height="3" fill="none" stroke="#eee" stroke-width="1"/><rect x="1.5" y="11.5" width="3" height="3" fill="none" stroke="#eee" stroke-width="1"/><path d="M3.5 10.5 C3 6 6 4 10 3.8 M11.5 5.5 C12 10 9 12 5 12.2" fill="none" stroke="#cfcfcf" stroke-width="0.9" stroke-dasharray="1.6 1.2"/></svg><div class="a" style="left:1511px;top:79.1px;width:64.9px;height:18px;background:#262626;border-radius:4px;box-shadow:0 0 0 1px #3a3a3a inset;"></div><div class="t" style="left:1518.30px;top:82.63px;font-size:11.30px;color:#e6e6e6;letter-spacing:0.337px;">Options</div><svg class="a" style="left:1566.5px;top:87.5px;" width="7" height="4" viewBox="0 0 7 4"><path d="M0.6 0.6 L3.5 3.4 L6.4 0.6" fill="none" stroke="#d6d6d6" stroke-width="1.3" stroke-linecap="round" stroke-linejoin="round"/></svg><div class="t" style="left:869.30px;top:112.02px;font-size:11.20px;color:#f0f0f0;letter-spacing:0.146px;text-shadow:0 0 1.5px #000,0 0 1px #000;-webkit-text-stroke:0.3px #f0f0f0;">User Perspective</div><div class="t" style="left:869.30px;top:130.12px;font-size:11.20px;color:#f0f0f0;letter-spacing:0.288px;text-shadow:0 0 1.5px #000,0 0 1px #000;-webkit-text-stroke:0.3px #f0f0f0;">(1) Cube | Cube</div><svg class="a" style="left:0;top:0" width="1588" height="1012"><path d="M1533.9 151.5L1533.9 122.2" stroke="#3f8ce6" stroke-width="2"/><path d="M1533.9 151.5L1563 145.2" stroke="#6c9e24" stroke-width="2"/><path d="M1533.9 151.5L1547 163.7" stroke="#e0314c" stroke-width="2"/><circle cx="1520.9" cy="138" r="7" fill="#4a3c3f" stroke="#c93a4a" stroke-width="1.3"/><circle cx="1504.6" cy="156.5" r="7.5" fill="#5d7e22" fill-opacity="0.6" stroke="#86c524" stroke-width="1.5"/><circle cx="1533.9" cy="179.3" r="7.4" fill="#3a4a5e" stroke="#3d86d6" stroke-width="1.3"/><circle cx="1533.9" cy="122.2" r="8.3" fill="#3b8ced"/><circle cx="1563" cy="145.2" r="8.1" fill="#6ba224"/><circle cx="1547" cy="163.7" r="8.6" fill="#f2365a"/></svg><div class="t" style="left:1530.20px;top:116.71px;font-size:10.50px;color:#0f1a2a;font-weight:bold;">Z</div><div class="t" style="left:1559.50px;top:139.71px;font-size:10.50px;color:#142008;font-weight:bold;">Y</div><div class="t" style="left:1543.40px;top:158.31px;font-size:10.50px;color:#2a0a10;font-weight:bold;">X</div><svg class="a" style="left:1548.5px;top:192.4px;" width="27" height="27" viewBox="0 0 27 27"><circle cx="13.5" cy="13.5" r="13.5" fill="rgba(34,34,34,0.75)"/><g transform="translate(3.5,3.5)"><circle cx="8.3" cy="8.8" r="6.5" fill="#d6d6d6"/><path d="M12.8 13.3 L17 17.5" stroke="#d6d6d6" stroke-width="2.4" stroke-linecap="round"/><path d="M8.3 5.7V11.9 M5.2 8.8H11.4" stroke="#262626" stroke-width="1.2"/></g></svg><svg class="a" style="left:1548.5px;top:222.4px;" width="27" height="27" viewBox="0 0 27 27"><circle cx="13.5" cy="13.5" r="13.5" fill="rgba(34,34,34,0.75)"/><g transform="translate(3.5,3.5)"><path d="M4.8 11.8 L2.4 10.3 C1.7 9.9 1.1 10.6 1.7 11.2 L6.2 16.6 C7 17.6 8 18.1 9.5 18.1 C12.5 18.1 14.3 16 14.8 13.5 L16.9 7.4 C17.1 6.6 16.2 6.3 15.8 6.9 L14.3 10.3 L13.5 4.2 C13.4 3.4 12.3 3.4 12.2 4.2 L11.9 9.6 L10.2 2.7 C10 2 9 2 9 2.7 L9.4 9.7 L7.4 4.6 C7.1 3.9 6.2 4.1 6.3 4.8 L7.4 12.3 Z" fill="#d6d6d6"/></g></svg><svg class="a" style="left:1548.5px;top:252.4px;" width="27" height="27" viewBox="0 0 27 27"><circle cx="13.5" cy="13.5" r="13.5" fill="rgba(34,34,34,0.75)"/><g transform="translate(3.5,3.5)"><circle cx="5.5" cy="6.5" r="3" fill="none" stroke="#dcdcdc" stroke-width="1.2"/><circle cx="13" cy="6" r="3.3" fill="none" stroke="#dcdcdc" stroke-width="1.2"/><path d="M5 9.5H14" stroke="#dcdcdc" stroke-width="1"/><rect x="6" y="11" width="7" height="5" fill="none" stroke="#dcdcdc" stroke-width="1.2"/><path d="M14 13.5 L17.5 11.5 V15.5Z" fill="none" stroke="#dcdcdc" stroke-width="1"/><path d="M3.5 12.5H5.5" stroke="#dcdcdc" stroke-width="1"/></g></svg><svg class="a" style="left:1548.5px;top:282.2px;" width="27" height="27" viewBox="0 0 27 27"><circle cx="13.5" cy="13.5" r="13.5" fill="rgba(34,34,34,0.75)"/><g transform="translate(3.5,3.5)"><path d="M5.5 3.5H14.5L17.5 16.5H2.5Z M2.5 16.5 M8.5 3.5 L7.5 16.5 M11.5 3.5 L12.5 16.5 M4.5 8H15.5 M3.5 12H16.5" fill="none" stroke="#dcdcdc" stroke-width="1.1"/></g></svg><div class="a" style="left:1575.7px;top:123.9px;width:9.3px;height:17px;background:#353535;border-radius:4px 0 0 4px;"></div><svg class="a" style="left:1577.5px;top:127.5px;" width="6" height="10" viewBox="0 0 6 10"><path d="M4.5 1 L1 5 L4.5 9" fill="none" stroke="#b0b0b0" stroke-width="1.1"/></svg>
</body></html>
